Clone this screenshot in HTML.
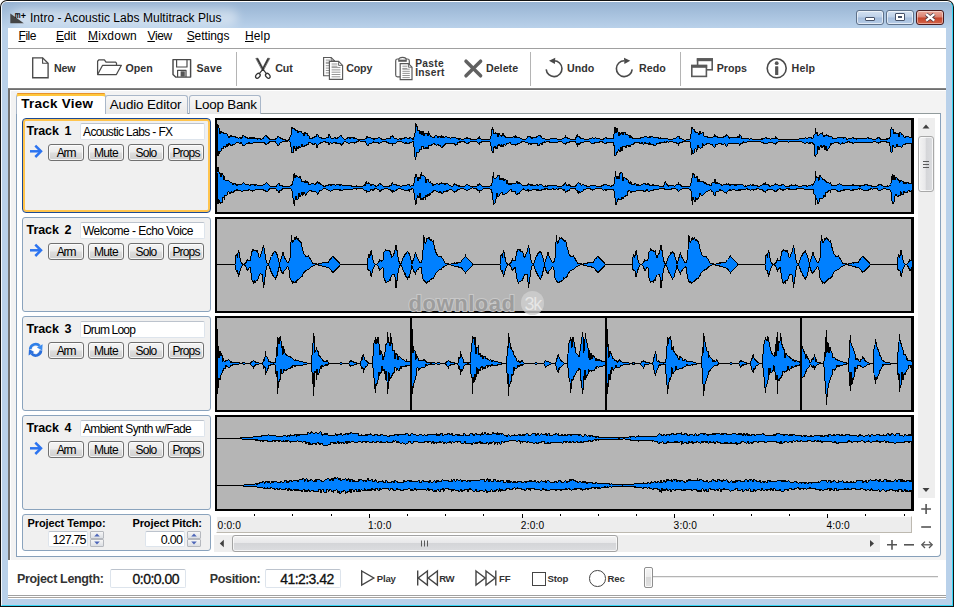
<!DOCTYPE html>
<html><head><meta charset="utf-8"><title>Intro - Acoustic Labs Multitrack Plus</title>
<style>
html,body{margin:0;padding:0;background:#fff;}
body{width:954px;height:607px;overflow:hidden;position:relative;font-family:"Liberation Sans", Arial, sans-serif;}
#win{position:absolute;left:0;top:0;width:954px;height:607px;overflow:hidden;}
#win div,#win span,#win svg{position:absolute;box-sizing:border-box;}
.t{white-space:pre;line-height:1;}
.btn{border:1px solid #707070;border-radius:3px;background:linear-gradient(#f4f4f4 0%,#ececec 48%,#dedede 52%,#d0d0d0 100%);box-shadow:inset 0 0 0 1px rgba(255,255,255,.75);}
.inp{background:#fff;border:1px solid #dde4ec;border-top-color:#bcc3cd;border-radius:2px;}
.panel{border:1px solid #8aa3bd;border-radius:3px;background:#f0f0f0;}
.wf{overflow:visible;}
</style></head><body>
<div id="win">
<div style="left:0;top:0;width:954px;height:607px;background:#111;border-radius:7px 7px 0 0;"></div>
<div style="left:1px;top:1px;width:952px;height:605px;background:#b9d1ea;border-radius:6px 6px 0 0;border-left:1px solid #f4f8fc;border-top:1px solid #fff;border-right:1px solid #34d6f6;border-bottom:1px solid #34d6f6;"></div>
<div style="left:2px;top:2px;width:950px;height:26px;background:linear-gradient(#97b3d2,#b9d1ea);border-radius:5px 5px 0 0;"></div>
<div style="left:12px;top:9px;width:226px;height:17px;border-radius:9px;background:rgba(255,255,255,.42);filter:blur(5px);"></div>
<svg style="left:10px;top:11.5px" width="18" height="14" viewBox="0 0 18 14"><polygon points="0.3,1.4 0.3,11.2 13.8,11.2" fill="#454545"/><text x="4.7" y="6.4" font-family="Liberation Sans, Arial, sans-serif" font-size="9.6" font-weight="bold" fill="#000" textLength="5.8" lengthAdjust="spacingAndGlyphs">m</text><text x="10.7" y="7.4" font-family="Liberation Sans, Arial, sans-serif" font-size="9" font-weight="bold" fill="#000">+</text></svg>
<span class="t " style="left:30.0px;top:11.89px;font-size:12px;color:#000;letter-spacing:0.038px;">Intro - Acoustic Labs Multitrack Plus</span>
<div style="left:856px;top:10px;width:28px;height:15px;border:1px solid #5d7089;border-radius:3px;background:linear-gradient(#d3e1f1 0%,#bdd0e8 48%,#a4bddc 52%,#b5cbe6 100%);box-shadow:inset 0 0 0 1px rgba(255,255,255,.6);"></div>
<div style="left:865px;top:17px;width:10px;height:4px;background:#fff;border:1px solid #47536a;border-radius:1px;"></div>
<div style="left:886px;top:10px;width:28px;height:15px;border:1px solid #5d7089;border-radius:3px;background:linear-gradient(#d3e1f1 0%,#bdd0e8 48%,#a4bddc 52%,#b5cbe6 100%);box-shadow:inset 0 0 0 1px rgba(255,255,255,.6);"></div>
<div style="left:895px;top:13px;width:10px;height:8px;background:#fff;border:1px solid #47536a;border-radius:1px;"></div>
<div style="left:898px;top:16px;width:4px;height:2px;background:#9db3cf;border:0.5px solid #47536a;"></div>
<div style="left:916px;top:10px;width:28px;height:15px;border:1px solid #4a1a1c;border-radius:3px;background:linear-gradient(#e9a99b 0%,#d9806f 48%,#c5432a 52%,#d4654a 100%);box-shadow:inset 0 0 0 1px rgba(255,255,255,.45);"></div>
<svg style="left:922.5px;top:12px" width="15" height="11" viewBox="0 0 15 11"><path d="M3.2 2.2L11.3 8.6M11.3 2.2L3.2 8.6" stroke="#4a3a44" stroke-width="3.8" stroke-linecap="butt"/><path d="M3.2 2.2L11.3 8.6M11.3 2.2L3.2 8.6" stroke="#fff" stroke-width="2.3" stroke-linecap="butt"/></svg>
<div style="left:8px;top:28px;width:938px;height:571px;background:#fff;"></div>
<div style="left:8px;top:48px;width:938px;height:1px;background:#a0a0a0;"></div>
<span class="t " style="left:18.5px;top:30.04px;font-size:12px;color:#000;letter-spacing:-0.465px;"><u>F</u>ile</span>
<span class="t " style="left:56.0px;top:30.04px;font-size:12px;color:#000;letter-spacing:-0.176px;"><u>E</u>dit</span>
<span class="t " style="left:88.0px;top:30.04px;font-size:12px;color:#000;letter-spacing:0.234px;"><u>M</u>ixdown</span>
<span class="t " style="left:147.4px;top:30.04px;font-size:12px;color:#000;letter-spacing:-0.303px;"><u>V</u>iew</span>
<span class="t " style="left:186.7px;top:30.04px;font-size:12px;color:#000;letter-spacing:-0.084px;"><u>S</u>ettings</span>
<span class="t " style="left:245.0px;top:30.04px;font-size:12px;color:#000;letter-spacing:0.128px;"><u>H</u>elp</span>
<div style="left:8px;top:88px;width:938px;height:2px;background:linear-gradient(#8a8a8a,#666);"></div>
<div style="left:8px;top:90px;width:938px;height:470px;background:#f3f3f3;border-left:2px solid #727272;"></div>
<div style="left:10px;top:90px;width:936px;height:1px;background:#fff;"></div>
<div style="left:10px;top:90px;width:1px;height:470px;background:#fff;"></div>
<div style="left:236px;top:52px;width:1px;height:34px;background:#b4b4b4;"></div>
<div style="left:530px;top:52px;width:1px;height:34px;background:#b4b4b4;"></div>
<div style="left:680px;top:52px;width:1px;height:34px;background:#b4b4b4;"></div>
<span class="t " style="left:54.1px;top:62.97px;font-size:10.67px;font-weight:bold;color:#333;letter-spacing:-0.174px;">New</span>
<span class="t " style="left:125.5px;top:62.97px;font-size:10.67px;font-weight:bold;color:#333;letter-spacing:0.016px;">Open</span>
<span class="t " style="left:196.6px;top:62.97px;font-size:10.67px;font-weight:bold;color:#333;letter-spacing:0.127px;">Save</span>
<span class="t " style="left:275.3px;top:62.97px;font-size:10.67px;font-weight:bold;color:#333;letter-spacing:-0.155px;">Cut</span>
<span class="t " style="left:346.2px;top:62.97px;font-size:10.67px;font-weight:bold;color:#333;letter-spacing:-0.135px;">Copy</span>
<span class="t " style="left:415.2px;top:59.07px;font-size:10.2px;font-weight:bold;color:#333;letter-spacing:0.323px;">Paste</span>
<span class="t " style="left:415.2px;top:68.17px;font-size:10.2px;font-weight:bold;color:#333;letter-spacing:0.308px;">Insert</span>
<span class="t " style="left:485.9px;top:62.97px;font-size:10.67px;font-weight:bold;color:#333;letter-spacing:0.053px;">Delete</span>
<span class="t " style="left:567.1px;top:62.97px;font-size:10.67px;font-weight:bold;color:#333;letter-spacing:-0.009px;">Undo</span>
<span class="t " style="left:639.1px;top:62.97px;font-size:10.67px;font-weight:bold;color:#333;letter-spacing:0.015px;">Redo</span>
<span class="t " style="left:716.7px;top:62.97px;font-size:10.67px;font-weight:bold;color:#333;letter-spacing:0.039px;">Props</span>
<span class="t " style="left:791.6px;top:62.97px;font-size:10.67px;font-weight:bold;color:#333;letter-spacing:0.127px;">Help</span>
<svg style="left:30px;top:55px" width="22" height="26" viewBox="0 0 22 26" fill="none" stroke="#4a4a4a" stroke-width="1.35"><path d="M2.7 2.8H12.6L18.1 8.3V22.7H2.7Z" fill="#fff"/><path d="M12.6 2.8V8.3H18.1" stroke-width="1.1"/></svg>
<svg style="left:95px;top:57px" width="29" height="21" viewBox="0 0 29 21" fill="none" stroke="#4a4a4a" stroke-width="1.25" stroke-linejoin="round"><path d="M2.6 17.5V4.2L4 2.8H9.4L11 5.2H20.6L21.5 6.2V8.3"/><path d="M2.6 17.5L7.6 8.3H26.4L21.4 17.5Z" fill="#fff"/></svg>
<svg style="left:171px;top:57px" width="23" height="23" viewBox="0 0 23 23" fill="none" stroke="#4a4a4a" stroke-width="1.45" stroke-linejoin="round"><path d="M2 2.6H19.6V20.1H4.6L2 17.6Z" fill="#fff"/><path d="M5.6 2.6V10H16V2.6" stroke-width="1.2"/><path d="M6.6 20V13.3H15V20" stroke-width="1.2"/><rect x="9.6" y="14.3" width="4.2" height="5.4" fill="#555" stroke="none"/></svg>
<svg style="left:253px;top:57px" width="20" height="23" viewBox="0 0 20 23" fill="none" stroke="#333" stroke-linecap="round"><path d="M3.2 1.4L4.9 1.2L10.6 12.2L9.3 12.8Z" fill="#333" stroke-width="0.6"/><path d="M16.4 1.4L14.7 1.2L9 12.2L10.3 12.8Z" fill="#333" stroke-width="0.6"/><path d="M10 12.4L13.4 16.6M9.8 12.4L6.3 16.6" stroke-width="1.2"/><ellipse cx="4.9" cy="18.8" rx="1.9" ry="2.7" transform="rotate(38 4.9 18.8)" stroke-width="1.3"/><ellipse cx="14.8" cy="18.8" rx="1.9" ry="2.7" transform="rotate(-38 14.8 18.8)" stroke-width="1.3"/></svg>
<svg style="left:322px;top:56px" width="23" height="25" viewBox="0 0 23 25" fill="none" stroke="#5a5a5a" stroke-width="1.15"><path d="M1.6 1.5H9.2L12.6 4.9V19.7H1.6Z" fill="#fff"/><path d="M9.2 1.5V4.9H12.6" stroke-width="0.9"/><path d="M3.8000000000000003 7.3H10.399999999999999" stroke="#8a8a8a" stroke-width="0.9"/><path d="M3.8000000000000003 9.7H10.399999999999999" stroke="#8a8a8a" stroke-width="0.9"/><path d="M3.8000000000000003 12.1H10.399999999999999" stroke="#8a8a8a" stroke-width="0.9"/><path d="M3.8000000000000003 14.5H10.399999999999999" stroke="#8a8a8a" stroke-width="0.9"/><path d="M3.8000000000000003 16.9H10.399999999999999" stroke="#8a8a8a" stroke-width="0.9"/><path d="M3.8000000000000003 4.1H7.999999999999999M3.8000000000000003 6.3H7.999999999999999" stroke="#8a8a8a" stroke-width="0.9"/><path d="M7.4 5.4H16.6L20.6 9.4V23.4H7.4Z" fill="#fff"/><path d="M16.6 5.4V9.4H20.6" stroke-width="0.9"/><path d="M9.600000000000001 11.6H18.400000000000002" stroke="#8a8a8a" stroke-width="0.9"/><path d="M9.600000000000001 13.9H18.400000000000002" stroke="#8a8a8a" stroke-width="0.9"/><path d="M9.600000000000001 16.2H18.400000000000002" stroke="#8a8a8a" stroke-width="0.9"/><path d="M9.600000000000001 18.5H18.400000000000002" stroke="#8a8a8a" stroke-width="0.9"/><path d="M9.600000000000001 20.8H18.400000000000002" stroke="#8a8a8a" stroke-width="0.9"/><path d="M9.600000000000001 8.0H15.400000000000002M9.600000000000001 10.2H15.400000000000002" stroke="#8a8a8a" stroke-width="0.9"/></svg>
<svg style="left:394px;top:56px" width="21" height="25" viewBox="0 0 21 25" fill="none" stroke="#5a5a5a" stroke-width="1.2"><rect x="1.7" y="3" width="13.6" height="17.8" rx="1.8" fill="#fff"/><path d="M4.8 5.2V3.6Q4.8 1.4 8.5 1.4Q12.2 1.4 12.2 3.6V5.2Z" fill="#fff"/><path d="M5 4.4H12" stroke-width="1.5"/><path d="M6.2 7.6H14.4L18.0 11.2V23.6H6.2Z" fill="#fff"/><path d="M14.4 7.6V11.2H18.0" stroke-width="0.9"/><path d="M8.4 13.2H15.8" stroke="#8a8a8a" stroke-width="0.9"/><path d="M8.4 15.3H15.8" stroke="#8a8a8a" stroke-width="0.9"/><path d="M8.4 17.4H15.8" stroke="#8a8a8a" stroke-width="0.9"/><path d="M8.4 19.5H15.8" stroke="#8a8a8a" stroke-width="0.9"/><path d="M8.4 21.6H15.8" stroke="#8a8a8a" stroke-width="0.9"/><path d="M8.4 10.2H13.200000000000001M8.4 12.399999999999999H13.200000000000001" stroke="#8a8a8a" stroke-width="0.9"/></svg>
<svg style="left:462px;top:57px" width="23" height="23" viewBox="0 0 23 23" fill="none" stroke="#616161" stroke-width="3.5" stroke-linecap="round"><path d="M4 4.2L18.6 18.8M18.6 4.2L4 18.8"/></svg>
<svg style="left:543px;top:55px" width="23" height="25" viewBox="0 0 23 25" fill="none" stroke="#4a4a4a" stroke-width="1.6"><path d="M11.05 5.8A7.9 7.9 0 1 1 3.18 14.39"/><path d="M6 5.7L12.3 2.7L11.9 8.9Z" fill="#4a4a4a" stroke="none"/></svg>
<svg style="left:613px;top:55px" width="23" height="25" viewBox="0 0 23 25" fill="none" stroke="#4a4a4a" stroke-width="1.6"><path d="M11.3 5.8A7.9 7.9 0 1 0 19.17 14.39"/><path d="M17.3 5.7L11 2.7L11.4 8.9Z" fill="#4a4a4a" stroke="none"/></svg>
<svg style="left:690px;top:57px" width="25" height="22" viewBox="0 0 25 22" fill="none" stroke="#5a5a5a" stroke-width="1.6"><rect x="7.6" y="2" width="14.6" height="10.8" fill="#fff"/><rect x="6.8" y="1.2" width="16.2" height="3" fill="#5a5a5a" stroke="none"/><rect x="1.8" y="8.6" width="14.6" height="10.8" fill="#fff"/><rect x="1" y="7.8" width="16.2" height="3" fill="#5a5a5a" stroke="none"/></svg>
<svg style="left:765px;top:57px" width="24" height="24" viewBox="0 0 24 24" fill="none" stroke="#4a4a4a" stroke-width="1.6"><circle cx="11.7" cy="11.3" r="9.5" fill="#fff"/><circle cx="11.7" cy="6.2" r="1.9" fill="#555" stroke="none"/><rect x="10.1" y="9.2" width="3.2" height="8.8" rx="0.6" fill="#555" stroke="none"/></svg>
<div style="left:16px;top:113px;width:925px;height:444px;background:#fff;border:1px solid #87a0ba;border-top-color:#919b9c;border-radius:0 0 4px 0;"></div>
<div style="left:105px;top:95px;width:83px;height:19px;border:1px solid #a9b7c9;border-bottom:none;border-radius:3px 3px 0 0;background:linear-gradient(#f7f7f7,#e9e9e9);"></div>
<div style="left:189px;top:95px;width:72px;height:19px;border:1px solid #a9b7c9;border-bottom:none;border-radius:3px 3px 0 0;background:linear-gradient(#f7f7f7,#e9e9e9);"></div>
<div style="left:16px;top:93px;width:90px;height:21px;border:1px solid #a9b7c9;border-bottom:none;border-radius:4px 4px 0 0;background:#fff;border-top:3px solid #ffc73c;"></div>
<div style="left:17px;top:93px;width:88px;height:1px;background:#e8932e;border-radius:2px 2px 0 0;"></div>
<span class="t " style="left:21.3px;top:96.71px;font-size:13.4px;font-weight:bold;color:#000;letter-spacing:0.300px;">Track View</span>
<span class="t " style="left:109.8px;top:97.71px;font-size:13.4px;color:#000;letter-spacing:-0.121px;">Audio Editor</span>
<span class="t " style="left:194.8px;top:97.71px;font-size:13.4px;color:#000;letter-spacing:-0.226px;">Loop Bank</span>
<div style="left:22px;top:118px;width:189px;height:95px;border:1px solid #1c4a94;border-radius:4px;background:#f0f0f0;box-shadow:inset 0 0 0 2px #ffc44d;"></div>
<span class="t " style="left:26.6px;top:124.72px;font-size:12.5px;font-weight:bold;color:#000;letter-spacing:-0.094px;">Track</span>
<span class="t " style="left:64.6px;top:124.72px;font-size:12.5px;font-weight:bold;color:#000;">1</span>
<div class="inp" style="left:80px;top:123px;width:125px;height:17px;"></div>
<span class="t " style="left:83.0px;top:126.04px;font-size:12px;color:#000;letter-spacing:-0.623px;">Acoustic Labs - FX</span>
<div class="btn" style="left:48px;top:144px;width:36px;height:17px;"></div>
<span class="t " style="left:56.7px;top:147.04px;font-size:12px;color:#000;letter-spacing:-1.133px;">Arm</span>
<div class="btn" style="left:88px;top:144px;width:36px;height:17px;"></div>
<span class="t " style="left:93.9px;top:147.04px;font-size:12px;color:#000;letter-spacing:-0.622px;">Mute</span>
<div class="btn" style="left:128px;top:144px;width:36px;height:17px;"></div>
<span class="t " style="left:135.4px;top:147.04px;font-size:12px;color:#000;letter-spacing:-0.708px;">Solo</span>
<div class="btn" style="left:168px;top:144px;width:36px;height:17px;"></div>
<span class="t " style="left:172.4px;top:147.04px;font-size:12px;color:#000;letter-spacing:-0.832px;">Props</span>
<svg style="left:29px;top:144px" width="16" height="15" viewBox="0 0 16 15" fill="none" stroke="#2c74f0" stroke-width="2.5" stroke-linecap="butt" stroke-linejoin="miter"><path d="M1 7.3H11.5"/><path d="M6.3 1.6L12 7.3L6.3 13"/></svg>
<svg class="wf" style="left:215px;top:118px" width="699" height="96" viewBox="0 0 699 96" shape-rendering="crispEdges"><path d="M-0.5 96V-0.5H699" stroke="#fff" stroke-width="1" fill="none"/><rect x="1" y="1" width="697" height="94" fill="#b5b5b5" stroke="#000" stroke-width="2"/><rect x="696" y="2" width="1" height="92" fill="#000"/><path d="M2 22.5H697" stroke="#000" stroke-width="1" fill="none"/><path d="M2.0 9.5L3.0 6.5L4.0 10.3L4.5 10.5L5.0 16.1L6.0 13.0L7.0 14.6L8.0 13.9L8.5 14.5L9.0 16.3L10.0 14.9L11.0 16.0L12.0 15.9L13.0 18.1L14.0 19.6L15.0 18.4L16.0 17.3L17.0 18.5L18.0 18.0L19.0 18.5L20.0 18.5L21.0 19.4L22.0 19.8L23.0 20.0L24.0 20.0L25.0 19.6L26.0 20.6L27.0 19.7L28.0 17.5L29.0 18.1L30.0 18.5L31.0 20.0L32.0 19.5L33.0 20.6L34.0 20.9L35.0 19.3L36.0 20.8L37.0 19.5L38.0 21.0L39.0 19.6L40.0 20.8L41.0 20.0L42.0 21.3L43.0 20.5L44.0 20.5L45.0 20.6L46.0 21.4L47.0 21.0L48.0 20.5L49.0 19.1L50.0 18.1L51.0 17.5L52.0 18.3L53.0 19.4L54.0 20.5L55.0 21.6L56.0 21.3L56.6 21.5L57.0 21.5L58.0 21.9L59.0 21.4L60.0 21.5L61.0 20.3L62.0 20.2L63.0 18.0L64.0 18.8L65.0 19.5L66.0 20.5L67.0 20.8L68.0 21.3L69.0 22.0L69.8 21.9L70.0 22.0L71.0 21.9L72.0 22.2L73.0 21.9L74.0 22.1L74.5 21.9L75.0 19.3L76.0 17.6L77.0 9.5L78.0 11.1L79.0 10.1L80.0 11.5L81.0 12.5L82.0 12.6L83.0 14.7L84.0 12.8L85.0 13.5L86.0 13.0L87.0 15.1L88.0 15.6L89.0 17.7L90.0 13.8L90.6 14.5L91.0 15.5L92.0 15.6L93.0 17.8L94.0 18.1L95.0 20.7L96.0 20.0L97.0 20.5L98.0 19.5L99.0 19.5L100.0 18.2L101.0 18.7L102.0 16.5L103.0 17.1L104.0 18.9L105.0 19.5L106.0 19.9L107.0 20.1L107.5 20.5L108.0 21.0L109.0 20.9L110.0 20.9L111.0 20.0L112.0 18.9L113.0 19.7L114.0 16.5L115.0 18.0L116.0 20.2L117.0 20.0L118.0 20.4L119.0 20.2L120.0 19.4L120.8 19.5L121.0 21.0L122.0 20.1L123.0 19.9L124.0 18.9L125.0 18.1L126.0 17.8L126.4 18.0L127.0 19.0L128.0 20.3L129.0 20.9L130.0 21.5L131.0 20.9L132.0 20.3L133.0 19.5L134.0 19.0L135.0 20.5L136.0 19.4L137.0 19.3L138.0 19.2L139.0 20.5L139.6 19.5L140.0 20.8L141.0 20.7L142.0 20.9L143.0 22.0L143.4 21.9L144.0 22.1L145.0 21.9L146.0 21.9L147.0 21.9L148.0 22.0L149.0 21.9L150.0 20.9L151.0 21.1L152.0 18.6L152.8 18.0L153.0 19.8L154.0 19.7L155.0 19.4L156.0 20.0L157.0 20.2L158.0 20.9L158.5 21.0L159.0 21.4L160.0 20.3L161.0 20.5L162.0 20.2L163.0 20.4L163.8 19.0L164.0 19.9L165.0 20.0L166.0 20.1L167.0 21.3L168.0 21.5L169.0 21.2L170.0 21.4L171.0 21.1L172.0 20.5L173.0 20.2L174.0 20.8L175.0 20.6L176.0 18.5L177.0 19.1L177.5 18.0L178.0 18.4L179.0 20.3L180.0 20.8L181.0 20.5L182.0 21.0L183.0 21.0L184.0 21.1L185.0 20.5L186.0 21.4L187.0 20.4L188.0 19.9L189.0 20.7L189.8 19.5L190.0 19.3L191.0 19.9L192.0 19.8L193.0 20.5L194.0 20.5L194.5 19.5L195.0 19.8L196.0 20.0L197.0 20.7L198.0 21.5L198.3 21.0L199.0 19.2L200.0 15.6L200.6 5.9L201.0 6.2L202.0 8.5L203.0 12.8L204.0 12.1L205.0 16.1L206.0 13.0L207.0 16.6L208.0 13.4L208.7 14.0L209.0 18.0L210.0 15.3L211.0 15.1L212.0 15.5L213.0 18.0L213.4 14.0L214.0 15.2L215.0 17.2L216.0 18.8L217.0 19.0L218.0 19.2L219.0 20.3L220.0 18.1L221.0 17.8L222.0 17.7L223.0 19.6L224.0 18.6L225.0 18.1L226.0 20.2L226.6 18.5L227.0 19.8L228.0 18.5L229.0 19.6L230.0 18.9L231.0 18.7L232.0 19.0L233.0 19.1L234.0 19.5L235.0 20.1L236.0 20.0L237.0 19.9L238.0 20.0L239.0 19.3L240.0 19.8L240.8 19.0L241.0 20.3L242.0 20.6L243.0 20.7L244.0 21.2L245.0 20.8L245.5 21.0L246.0 21.1L247.0 21.9L248.0 21.8L249.0 21.1L250.0 20.4L251.0 20.7L252.0 19.0L253.0 20.5L254.0 20.3L255.0 20.6L256.0 21.6L256.8 21.8L257.0 22.1L258.0 21.9L259.0 21.9L260.0 21.8L260.6 21.8L261.0 21.4L262.0 21.0L263.0 20.4L264.0 19.1L264.3 19.0L265.0 20.6L266.0 21.2L267.0 20.9L268.0 21.8L269.0 21.8L270.0 21.7L271.0 21.7L271.9 21.5L272.0 21.7L273.0 21.6L274.0 21.1L275.0 21.0L276.0 18.0L277.0 11.2L277.5 9.3L278.0 11.4L279.0 15.7L280.0 14.8L281.0 15.2L282.0 16.0L282.3 15.0L283.0 18.6L284.0 15.0L285.0 17.2L286.0 17.7L287.0 18.2L288.0 15.3L289.0 17.7L290.0 18.7L291.0 19.2L292.0 19.0L292.6 19.5L293.0 19.2L294.0 19.9L295.0 19.1L296.0 19.0L297.0 19.4L298.0 18.9L299.0 18.1L300.0 19.7L300.2 16.8L301.0 18.6L302.0 20.2L303.0 19.4L304.0 19.3L305.0 19.8L305.8 20.5L306.0 20.6L307.0 20.9L308.0 21.4L308.7 21.5L309.0 21.9L310.0 21.6L311.0 20.9L312.0 19.9L313.0 18.5L313.4 18.5L314.0 18.4L315.0 18.6L316.0 19.6L317.0 20.7L318.0 19.7L319.0 19.5L320.0 19.3L321.0 19.6L322.0 18.4L323.0 18.1L324.0 17.7L324.7 17.5L325.0 17.4L326.0 18.5L327.0 19.9L328.0 21.0L329.0 20.0L330.0 20.9L330.4 21.0L331.0 21.7L332.0 21.1L333.0 21.2L334.0 21.6L335.0 20.9L336.0 20.5L337.0 20.9L338.0 20.4L339.0 20.8L340.0 20.7L341.0 20.7L341.7 20.5L342.0 20.9L343.0 21.3L344.0 21.8L345.0 21.6L345.7 21.5L346.0 21.2L347.0 21.2L348.0 20.1L349.0 20.1L350.0 19.4L350.4 18.5L351.0 19.9L352.0 19.4L353.0 21.1L354.0 20.5L355.0 21.2L356.0 21.8L357.0 21.9L358.0 21.9L359.0 21.8L359.8 21.8L360.0 21.6L361.0 19.5L362.0 17.2L362.3 16.8L363.0 18.9L364.0 18.2L365.0 19.5L366.0 20.7L367.0 20.8L368.0 20.5L368.3 20.5L369.0 21.3L370.0 21.3L371.0 21.3L372.0 21.5L373.0 21.5L374.0 20.9L375.0 20.3L376.0 19.9L377.0 20.2L377.7 19.5L378.0 20.3L379.0 20.6L380.0 19.9L381.0 20.0L382.0 20.9L383.0 20.5L384.0 20.8L385.0 21.0L385.3 21.0L386.0 21.2L387.0 21.4L388.0 21.2L389.0 20.8L390.0 19.8L391.0 19.5L392.0 20.9L393.0 19.9L394.0 20.2L395.0 20.5L395.7 20.5L396.0 20.4L397.0 21.0L398.0 20.9L398.5 20.0L399.0 16.0L400.0 8.9L401.0 15.0L402.0 10.4L403.0 13.9L404.0 17.9L404.2 14.0L405.0 16.9L406.0 15.5L407.0 14.0L408.0 16.9L409.0 14.4L410.0 14.7L410.8 15.3L411.0 16.9L412.0 15.8L413.0 17.2L414.0 17.3L415.0 19.9L415.5 17.8L416.0 18.5L417.0 19.5L418.0 20.4L419.0 20.3L420.0 20.7L421.0 20.0L422.0 20.8L423.0 21.0L424.0 20.0L425.0 20.5L426.0 19.6L427.0 20.1L428.0 19.2L428.7 19.0L429.0 18.9L430.0 19.0L431.0 18.7L432.0 18.8L433.0 20.1L434.0 18.7L434.3 19.0L435.0 19.6L436.0 18.7L437.0 18.9L438.0 18.9L439.0 19.6L440.0 19.0L441.0 19.0L442.0 19.2L443.0 19.6L444.0 20.7L445.0 19.8L445.7 20.0L446.0 21.1L447.0 20.5L448.0 20.4L449.0 20.1L450.0 21.1L451.0 20.7L451.3 20.5L452.0 20.6L453.0 21.2L454.0 20.9L455.0 21.2L456.0 21.6L457.0 21.5L458.0 21.0L459.0 20.6L460.0 21.0L461.0 20.3L462.0 19.2L463.0 18.6L463.6 18.5L464.0 18.5L465.0 20.6L466.0 20.0L467.0 21.3L468.0 21.7L468.3 21.8L469.0 22.1L470.0 22.1L471.0 22.0L472.0 21.8L473.0 21.9L474.0 21.7L475.0 21.0L476.0 15.8L476.8 9.7L477.0 9.3L478.0 11.0L479.0 11.2L480.0 13.8L481.0 14.3L481.5 14.5L482.0 13.9L483.0 15.1L484.0 17.2L485.0 13.5L486.0 16.2L487.0 15.3L487.2 14.0L488.0 14.3L489.0 18.2L490.0 18.3L491.0 18.5L492.0 18.9L493.0 19.1L494.0 19.5L494.7 19.5L495.0 19.3L496.0 19.8L497.0 20.1L498.0 18.9L499.0 18.9L499.4 16.8L500.0 16.8L501.0 18.8L502.0 18.1L503.0 20.2L504.0 19.2L505.0 20.0L506.0 19.4L507.0 19.2L508.0 20.3L509.0 18.6L510.0 19.1L511.0 17.4L511.7 16.8L512.0 17.3L513.0 17.9L514.0 20.3L515.0 19.7L516.0 19.5L517.0 19.2L518.0 19.4L519.0 19.0L520.0 19.5L521.0 19.0L522.0 19.9L523.0 17.7L524.0 19.5L524.7 17.0L525.0 17.4L526.0 17.7L527.0 20.6L528.0 20.2L529.0 20.1L529.4 20.5L530.0 20.9L531.0 20.5L532.0 21.0L533.0 20.9L534.0 21.0L535.0 21.0L536.0 20.9L537.0 20.9L538.0 21.2L539.0 21.2L540.0 21.6L540.8 21.0L541.0 21.5L542.0 21.2L543.0 21.5L544.0 21.7L544.5 21.8L545.0 21.9L546.0 21.3L547.0 20.4L548.0 21.3L549.0 20.2L550.0 19.9L550.2 19.0L551.0 19.4L552.0 20.6L553.0 19.9L554.0 20.2L555.0 21.0L555.8 21.0L556.0 21.1L557.0 20.8L558.0 20.6L559.0 20.3L560.0 20.8L560.6 19.0L561.0 19.6L562.0 20.4L563.0 21.2L564.0 21.4L564.3 21.5L565.0 21.8L566.0 21.5L567.0 21.5L568.0 21.4L569.0 21.3L570.0 21.2L571.0 21.5L572.0 21.4L572.8 21.0L573.0 21.4L574.0 21.3L575.0 21.1L576.0 21.4L577.0 21.2L578.0 21.5L579.0 21.4L580.0 21.5L580.4 21.5L581.0 21.9L582.0 21.5L583.0 21.2L584.0 21.0L585.0 20.8L586.0 20.9L587.0 20.4L588.0 20.2L589.0 21.2L589.8 20.0L590.0 19.9L591.0 19.9L592.0 20.9L593.0 19.9L594.0 20.1L595.0 19.3L595.5 19.5L596.0 19.5L597.0 20.8L598.0 19.8L598.5 19.5L599.0 16.8L600.0 15.9L600.2 10.2L601.0 15.5L602.0 14.2L603.0 18.0L604.0 16.8L605.0 16.1L606.0 15.6L607.0 14.8L607.7 15.0L608.0 17.1L609.0 18.4L610.0 17.7L611.0 18.0L611.5 16.8L612.0 17.4L613.0 17.2L614.0 18.9L615.0 17.9L616.0 19.3L616.2 18.5L617.0 19.1L618.0 20.7L619.0 19.9L620.0 20.5L621.0 21.2L622.0 19.8L623.0 19.3L624.0 19.5L624.7 19.0L625.0 19.5L626.0 19.7L627.0 19.2L628.0 19.1L629.0 20.3L629.4 19.5L630.0 19.7L631.0 20.0L632.0 21.5L633.0 21.1L633.2 21.0L634.0 20.8L635.0 20.7L636.0 20.5L637.0 19.9L638.0 19.5L639.0 20.6L640.0 20.2L641.0 20.7L642.0 21.3L642.6 20.5L643.0 21.1L644.0 20.8L645.0 20.5L646.0 21.0L647.0 20.2L648.0 20.1L649.0 20.3L650.0 20.4L650.2 20.0L651.0 20.4L652.0 19.9L653.0 19.8L654.0 20.2L655.0 20.0L655.8 20.0L656.0 19.9L657.0 20.9L658.0 21.5L659.0 21.5L659.6 21.8L660.0 21.5L661.0 21.2L662.0 20.3L663.0 19.6L663.4 19.5L664.0 19.7L665.0 20.2L666.0 21.4L667.0 21.2L668.0 21.8L669.0 21.5L670.0 21.8L671.0 21.0L671.9 20.5L672.0 21.5L673.0 20.7L674.0 20.3L674.5 20.5L675.0 19.3L676.0 11.2L676.2 9.3L677.0 11.2L678.0 10.9L679.0 15.9L680.0 14.3L680.4 15.0L681.0 16.1L682.0 15.7L683.0 15.3L684.0 18.6L685.0 14.4L686.0 15.0L687.0 17.2L688.0 16.6L689.0 19.2L690.0 19.7L690.8 18.5L691.0 18.7L692.0 18.9L693.0 18.9L694.0 19.0L695.0 19.2L695.5 19.5L696.0 19.4L697.0 19.5L697.0 25.3L696.0 25.2L695.5 25.5L695.0 25.7L694.0 25.3L693.0 25.9L692.0 25.1L691.0 25.0L690.8 26.5L690.0 26.5L689.0 26.6L688.0 26.7L687.0 29.0L686.0 29.1L685.0 28.7L684.0 27.9L683.0 29.0L682.0 26.2L681.0 29.2L680.4 29.1L680.0 29.8L679.0 28.7L678.0 27.5L677.0 34.5L676.2 34.8L676.0 33.5L675.0 27.8L674.5 24.5L674.0 24.5L673.0 23.9L672.0 24.6L671.9 24.5L671.0 23.7L670.0 24.0L669.0 23.6L668.0 23.2L667.0 23.6L666.0 23.7L665.0 24.2L664.0 25.2L663.4 25.5L663.0 24.3L662.0 24.3L661.0 23.9L660.0 23.4L659.6 23.2L659.0 23.5L658.0 24.0L657.0 24.2L656.0 23.9L655.8 25.0L655.0 24.2L654.0 24.8L653.0 24.7L652.0 25.1L651.0 24.0L650.2 25.0L650.0 24.3L649.0 25.1L648.0 24.5L647.0 24.5L646.0 24.0L645.0 24.0L644.0 24.6L643.0 24.6L642.6 24.5L642.0 24.7L641.0 24.6L640.0 24.1L639.0 24.9L638.0 25.5L637.0 24.6L636.0 24.4L635.0 24.7L634.0 23.5L633.2 24.0L633.0 23.6L632.0 24.6L631.0 23.9L630.0 24.9L629.4 25.5L629.0 25.6L628.0 25.7L627.0 24.7L626.0 25.9L625.0 26.2L624.7 26.0L624.0 25.4L623.0 24.0L622.0 24.6L621.0 24.3L620.0 24.5L619.0 25.0L618.0 25.0L617.0 25.3L616.2 26.5L616.0 25.4L615.0 28.3L614.0 29.8L613.0 30.8L612.0 32.9L611.5 32.9L611.0 28.0L610.0 31.9L609.0 27.4L608.0 29.3L607.7 29.1L607.0 30.1L606.0 27.3L605.0 29.4L604.0 31.9L603.0 28.1L602.0 36.0L601.0 36.7L600.2 38.5L600.0 37.5L599.0 26.4L598.5 25.5L598.0 25.6L597.0 24.1L596.0 25.2L595.5 25.5L595.0 24.2L594.0 25.6L593.0 25.2L592.0 24.3L591.0 25.3L590.0 25.0L589.8 25.0L589.0 25.1L588.0 24.4L587.0 23.9L586.0 23.6L585.0 23.7L584.0 24.0L583.0 23.4L582.0 23.3L581.0 23.1L580.4 23.5L580.0 23.6L579.0 23.5L578.0 23.7L577.0 23.4L576.0 23.7L575.0 23.7L574.0 24.0L573.0 24.0L572.8 24.0L572.0 23.7L571.0 23.3L570.0 23.9L569.0 23.2L568.0 23.6L567.0 23.2L566.0 23.5L565.0 23.2L564.3 23.5L564.0 23.1L563.0 23.8L562.0 24.4L561.0 25.5L560.6 26.0L560.0 25.2L559.0 25.5L558.0 25.1L557.0 24.5L556.0 24.1L555.8 24.0L555.0 24.4L554.0 24.5L553.0 24.8L552.0 25.6L551.0 25.2L550.2 26.0L550.0 25.0L549.0 25.4L548.0 23.8L547.0 24.5L546.0 24.0L545.0 23.5L544.5 23.2L544.0 23.2L543.0 23.1L542.0 23.3L541.0 23.7L540.8 24.0L540.0 23.3L539.0 24.0L538.0 23.8L537.0 23.4L536.0 23.3L535.0 24.0L534.0 23.9L533.0 23.4L532.0 23.8L531.0 24.4L530.0 24.5L529.4 24.5L529.0 23.7L528.0 24.3L527.0 25.4L526.0 25.3L525.0 26.4L524.7 27.0L524.0 26.2L523.0 25.3L522.0 25.6L521.0 26.0L520.0 24.8L519.0 25.7L518.0 25.0L517.0 25.5L516.0 25.5L515.0 25.5L514.0 25.4L513.0 26.2L512.0 28.4L511.7 28.2L511.0 27.8L510.0 25.7L509.0 26.0L508.0 26.2L507.0 26.2L506.0 25.7L505.0 25.0L504.0 25.8L503.0 25.8L502.0 26.9L501.0 26.5L500.0 29.1L499.4 29.1L499.0 29.2L498.0 27.9L497.0 26.5L496.0 26.4L495.0 25.8L494.7 25.5L494.0 25.0L493.0 25.9L492.0 25.7L491.0 26.5L490.0 27.2L489.0 28.0L488.0 25.6L487.2 29.1L487.0 28.7L486.0 30.1L485.0 30.2L484.0 29.4L483.0 27.5L482.0 32.1L481.5 32.9L481.0 30.7L480.0 31.1L479.0 34.8L478.0 35.6L477.0 31.6L476.8 36.7L476.0 30.0L475.0 24.0L474.0 23.8L473.0 23.5L472.0 23.2L471.0 23.2L470.0 23.2L469.0 23.1L468.3 23.2L468.0 23.4L467.0 24.4L466.0 25.1L465.0 24.7L464.0 25.2L463.6 27.0L463.0 25.4L462.0 25.7L461.0 24.1L460.0 24.8L459.0 24.6L458.0 24.1L457.0 23.5L456.0 23.5L455.0 23.4L454.0 23.9L453.0 24.2L452.0 23.5L451.3 24.5L451.0 24.3L450.0 24.5L449.0 23.7L448.0 24.9L447.0 23.8L446.0 24.9L445.7 25.0L445.0 24.2L444.0 25.4L443.0 25.7L442.0 25.4L441.0 27.1L440.0 27.5L439.0 27.4L438.0 25.8L437.0 26.8L436.0 26.7L435.0 24.6L434.3 26.0L434.0 25.7L433.0 26.2L432.0 25.3L431.0 26.0L430.0 24.3L429.0 25.8L428.7 26.0L428.0 26.1L427.0 24.2L426.0 25.8L425.0 25.3L424.0 24.7L423.0 24.7L422.0 24.1L421.0 25.0L420.0 24.6L419.0 25.3L418.0 26.5L417.0 26.1L416.0 27.2L415.5 28.2L415.0 27.0L414.0 28.5L413.0 27.1L412.0 27.3L411.0 29.8L410.8 29.7L410.0 28.0L409.0 29.2L408.0 27.8L407.0 32.7L406.0 29.5L405.0 34.1L404.2 33.8L404.0 31.6L403.0 33.1L402.0 34.5L401.0 37.2L400.0 38.2L399.0 27.4L398.5 25.0L398.0 24.5L397.0 24.4L396.0 24.2L395.7 24.5L395.0 24.5L394.0 24.8L393.0 25.0L392.0 24.2L391.0 25.5L390.0 25.1L389.0 25.0L388.0 24.5L387.0 23.6L386.0 23.9L385.3 24.0L385.0 24.2L384.0 23.8L383.0 24.6L382.0 24.1L381.0 24.8L380.0 24.5L379.0 25.4L378.0 25.4L377.7 25.5L377.0 25.0L376.0 25.1L375.0 23.8L374.0 24.1L373.0 23.3L372.0 23.5L371.0 23.6L370.0 23.3L369.0 24.2L368.3 24.5L368.0 24.6L367.0 25.0L366.0 24.7L365.0 25.5L364.0 26.6L363.0 25.5L362.3 27.8L362.0 27.1L361.0 25.1L360.0 23.4L359.8 23.2L359.0 23.0L358.0 23.2L357.0 23.2L356.0 23.2L355.0 23.7L354.0 24.5L353.0 24.0L352.0 24.1L351.0 26.3L350.4 26.5L350.0 25.5L349.0 25.1L348.0 25.0L347.0 24.0L346.0 23.2L345.7 23.5L345.0 23.7L344.0 23.3L343.0 24.0L342.0 24.3L341.7 24.5L341.0 24.5L340.0 24.1L339.0 24.6L338.0 24.6L337.0 24.3L336.0 24.5L335.0 24.5L334.0 23.7L333.0 24.1L332.0 23.4L331.0 24.1L330.4 24.0L330.0 24.1L329.0 23.9L328.0 24.2L327.0 26.5L326.0 25.1L325.0 26.1L324.7 27.8L324.0 27.9L323.0 27.5L322.0 25.6L321.0 25.7L320.0 25.9L319.0 25.5L318.0 25.1L317.0 25.6L316.0 26.3L315.0 25.8L314.0 26.0L313.4 26.5L313.0 24.6L312.0 24.7L311.0 25.1L310.0 24.0L309.0 23.5L308.7 23.5L308.0 23.6L307.0 23.4L306.0 24.6L305.8 24.5L305.0 25.1L304.0 25.4L303.0 25.1L302.0 27.1L301.0 25.9L300.2 27.8L300.0 26.6L299.0 27.1L298.0 26.2L297.0 26.3L296.0 26.0L295.0 24.3L294.0 25.1L293.0 25.5L292.6 25.5L292.0 25.6L291.0 27.1L290.0 27.2L289.0 26.6L288.0 29.1L287.0 26.6L286.0 29.0L285.0 27.4L284.0 26.7L283.0 27.5L282.3 30.0L282.0 29.4L281.0 30.7L280.0 28.4L279.0 29.5L278.0 34.7L277.5 34.2L277.0 32.6L276.0 27.8L275.0 24.0L274.0 23.7L273.0 23.3L272.0 23.6L271.9 23.5L271.0 23.4L270.0 23.3L269.0 23.0L268.0 23.2L267.0 23.3L266.0 24.9L265.0 24.0L264.3 26.0L264.0 25.9L263.0 25.1L262.0 24.0L261.0 23.6L260.6 23.2L260.0 23.3L259.0 23.0L258.0 23.0L257.0 23.2L256.8 23.2L256.0 23.2L255.0 24.3L254.0 24.3L253.0 25.6L252.0 26.0L251.0 25.1L250.0 24.7L249.0 23.5L248.0 23.2L247.0 23.6L246.0 23.2L245.5 24.0L245.0 23.5L244.0 25.0L243.0 24.6L242.0 26.5L241.0 26.2L240.8 27.2L240.0 26.3L239.0 25.6L238.0 26.1L237.0 25.3L236.0 25.0L235.0 25.0L234.0 25.6L233.0 25.4L232.0 26.0L231.0 25.5L230.0 26.3L229.0 27.6L228.0 28.4L227.0 29.4L226.6 29.1L226.0 29.3L225.0 27.4L224.0 28.1L223.0 25.7L222.0 27.2L221.0 27.2L220.0 26.5L219.0 24.8L218.0 26.1L217.0 26.0L216.0 27.4L215.0 27.6L214.0 27.1L213.4 30.0L213.0 29.2L212.0 30.9L211.0 29.6L210.0 31.0L209.0 29.9L208.7 31.0L208.0 28.1L207.0 28.1L206.0 32.2L205.0 31.6L204.0 33.8L203.0 34.6L202.0 34.4L201.0 38.9L200.6 42.3L200.0 38.6L199.0 28.8L198.3 24.0L198.0 23.7L197.0 24.0L196.0 25.0L195.0 24.4L194.5 25.5L194.0 25.6L193.0 25.7L192.0 25.7L191.0 24.6L190.0 25.3L189.8 25.5L189.0 25.2L188.0 24.0L187.0 24.1L186.0 23.6L185.0 23.6L184.0 23.8L183.0 24.0L182.0 23.8L181.0 25.2L180.0 25.4L179.0 25.0L178.0 26.1L177.5 27.0L177.0 25.0L176.0 26.0L175.0 25.0L174.0 25.6L173.0 24.2L172.0 24.5L171.0 23.7L170.0 23.8L169.0 23.7L168.0 23.5L167.0 24.0L166.0 24.3L165.0 25.0L164.0 25.5L163.8 25.5L163.0 24.0L162.0 24.5L161.0 24.5L160.0 24.6L159.0 24.2L158.5 24.0L158.0 24.4L157.0 25.0L156.0 25.5L155.0 25.0L154.0 26.1L153.0 27.7L152.8 27.5L152.0 26.9L151.0 25.2L150.0 23.6L149.0 23.1L148.0 23.0L147.0 23.1L146.0 23.1L145.0 23.1L144.0 22.8L143.4 23.1L143.0 23.0L142.0 23.7L141.0 24.3L140.0 24.7L139.6 25.0L139.0 24.0L138.0 25.0L137.0 24.6L136.0 24.2L135.0 24.8L134.0 25.5L133.0 25.1L132.0 24.0L131.0 24.1L130.0 23.5L129.0 23.7L128.0 25.4L127.0 26.9L126.4 27.5L126.0 26.5L125.0 25.7L124.0 25.2L123.0 25.7L122.0 25.8L121.0 24.4L120.8 25.5L120.0 24.8L119.0 24.8L118.0 25.0L117.0 25.0L116.0 25.0L115.0 24.9L114.0 26.5L113.0 24.5L112.0 24.5L111.0 24.5L110.0 23.7L109.0 24.0L108.0 23.7L107.5 24.5L107.0 24.4L106.0 23.8L105.0 25.5L104.0 25.8L103.0 27.3L102.0 30.0L101.0 25.9L100.0 25.5L99.0 26.5L98.0 26.3L97.0 25.0L96.0 25.0L95.0 24.8L94.0 24.5L93.0 26.6L92.0 26.7L91.0 27.7L90.6 27.5L90.0 27.8L89.0 28.3L88.0 28.5L87.0 26.5L86.0 29.3L85.0 29.5L84.0 28.2L83.0 31.0L82.0 28.6L81.0 32.5L80.0 30.4L79.0 28.4L78.0 34.7L77.0 34.5L76.0 28.6L75.0 24.1L74.5 23.1L74.0 22.8L73.0 23.1L72.0 22.9L71.0 23.1L70.0 22.9L69.8 23.1L69.0 23.3L68.0 23.7L67.0 23.8L66.0 24.5L65.0 25.0L64.0 26.8L63.0 27.5L62.0 26.1L61.0 24.9L60.0 23.5L59.0 23.0L58.0 23.3L57.0 23.4L56.6 23.5L56.0 23.2L55.0 23.6L54.0 24.5L53.0 25.4L52.0 25.9L51.0 27.0L50.0 25.5L49.0 24.7L48.0 24.6L47.0 24.0L46.0 24.2L45.0 24.4L44.0 24.4L43.0 24.5L42.0 24.0L41.0 24.8L40.0 25.0L39.0 24.6L38.0 25.2L37.0 25.5L36.0 25.2L35.0 25.6L34.0 24.4L33.0 25.4L32.0 25.5L31.0 25.9L30.0 27.1L29.0 27.5L28.0 28.0L27.0 26.0L26.0 24.5L25.0 25.8L24.0 25.0L23.0 24.7L22.0 25.0L21.0 24.7L20.0 25.9L19.0 26.5L18.0 26.8L17.0 27.3L16.0 27.6L15.0 26.6L14.0 25.3L13.0 28.4L12.0 26.3L11.0 28.5L10.0 29.3L9.0 27.7L8.5 30.5L8.0 30.0L7.0 30.4L6.0 33.0L5.0 33.0L4.5 34.5L4.0 33.6L3.0 37.5L2.0 34.5Z" fill="#0080ff" stroke="#000" stroke-width="1" stroke-linejoin="miter"/><path d="M2 69.5H697" stroke="#000" stroke-width="1" fill="none"/><path d="M2.0 54.5L3.0 49.5L4.0 54.1L5.0 55.5L6.0 58.9L7.0 55.2L7.5 56.5L8.0 57.3L9.0 61.6L9.5 60.0L10.0 62.0L11.0 62.0L12.0 62.1L13.0 62.7L14.0 63.1L15.0 64.0L16.0 64.0L17.0 64.9L18.0 66.7L19.0 65.5L20.0 65.4L21.0 66.3L22.0 67.8L23.0 66.1L24.0 66.5L25.0 65.9L26.0 66.4L27.0 66.3L28.0 64.8L29.0 65.0L30.0 65.9L31.0 66.7L32.0 66.5L33.0 66.6L34.0 67.2L35.0 67.8L36.0 66.3L37.0 66.9L37.7 66.0L38.0 65.8L39.0 66.4L40.0 67.5L41.0 66.4L42.0 67.0L43.0 67.0L44.0 67.1L45.0 67.4L46.0 67.2L47.0 67.5L48.0 66.8L49.0 66.2L50.0 66.0L51.0 65.0L52.0 64.8L53.0 65.8L54.0 67.2L54.5 67.5L55.0 67.9L56.0 68.2L56.6 68.5L57.0 68.6L58.0 68.9L59.0 68.7L60.0 68.9L61.0 68.4L62.0 66.9L63.0 65.7L64.0 65.0L65.0 67.6L66.0 67.0L67.0 67.5L68.0 68.3L68.9 68.9L69.0 69.1L70.0 68.8L71.0 68.8L72.0 68.7L73.0 69.0L74.0 68.5L74.5 68.5L75.0 68.1L76.0 67.6L77.0 66.5L78.0 63.5L79.0 56.5L79.2 55.5L80.0 59.5L81.0 56.7L82.0 58.5L83.0 59.2L84.0 59.3L85.0 58.5L86.0 60.8L87.0 64.1L88.0 63.4L89.0 63.0L90.0 64.7L90.6 62.9L91.0 63.3L92.0 65.2L93.0 63.6L94.0 66.6L95.0 66.8L96.0 66.0L96.2 65.5L97.0 65.8L98.0 65.9L99.0 66.0L100.0 67.2L101.0 65.5L102.0 64.0L102.8 63.8L103.0 65.3L104.0 64.7L105.0 65.7L106.0 66.5L107.0 67.0L108.0 67.7L109.0 68.6L109.4 68.5L110.0 68.8L111.0 67.7L112.0 67.5L113.0 67.5L114.0 66.4L115.0 66.0L116.0 67.7L117.0 66.4L118.0 66.4L119.0 66.6L120.0 67.1L121.0 67.0L122.0 66.7L123.0 67.1L124.0 66.4L125.0 67.5L126.0 66.0L126.4 66.0L127.0 67.1L128.0 67.1L129.0 68.0L130.0 67.6L131.0 67.8L132.0 67.5L133.0 67.8L134.0 67.6L135.0 67.6L136.0 67.7L137.0 68.3L138.0 68.6L139.0 67.9L140.0 68.6L141.0 67.9L141.5 68.0L142.0 68.6L143.0 68.6L144.0 68.6L145.0 68.6L146.0 68.8L147.0 68.9L148.0 68.4L149.0 66.7L150.0 67.5L151.0 64.4L151.9 63.8L152.0 66.1L153.0 64.7L154.0 65.3L155.0 66.0L156.0 67.5L157.0 66.3L157.5 66.5L158.0 66.5L159.0 67.1L160.0 67.7L161.0 68.3L161.3 68.5L162.0 67.9L163.0 68.0L164.0 66.1L165.0 65.5L166.0 66.6L167.0 67.1L168.0 68.1L169.0 68.3L169.8 68.5L170.0 68.7L171.0 68.6L172.0 68.5L173.0 68.3L174.0 68.2L175.0 67.7L176.0 67.6L177.0 65.6L177.5 65.0L178.0 66.0L179.0 67.1L180.0 66.1L181.0 66.7L182.0 67.3L183.0 68.0L184.0 67.7L185.0 68.0L186.0 68.4L187.0 68.3L188.0 67.1L189.0 67.0L190.0 67.2L191.0 67.6L192.0 67.1L193.0 66.6L194.0 67.1L194.5 66.5L195.0 68.1L196.0 68.2L197.0 67.6L198.0 68.0L199.0 65.1L200.0 59.5L201.0 56.3L202.0 58.8L203.0 62.6L203.5 59.5L204.0 58.7L205.0 61.3L206.0 55.8L206.2 53.8L207.0 57.8L208.0 56.8L209.0 58.3L210.0 58.6L210.6 60.1L211.0 64.6L212.0 61.1L213.0 61.5L214.0 64.1L215.0 64.4L215.3 63.8L216.0 65.1L217.0 65.1L218.0 67.6L219.0 66.5L220.0 66.6L221.0 65.9L222.0 65.7L223.0 65.7L224.0 67.2L225.0 65.2L226.0 65.2L226.6 64.8L227.0 65.8L228.0 66.0L229.0 65.0L230.0 67.3L231.0 65.2L232.0 65.5L232.3 65.5L233.0 65.9L234.0 67.2L235.0 67.7L236.0 68.0L237.0 68.4L238.0 68.0L239.0 66.5L239.8 65.7L240.0 66.8L241.0 66.2L242.0 67.5L243.0 67.8L244.0 68.2L244.5 68.0L245.0 68.1L246.0 68.7L247.0 68.4L248.0 68.5L249.0 68.6L250.0 68.2L251.0 67.0L252.0 66.5L253.0 67.1L254.0 67.3L255.0 67.9L256.0 68.4L256.8 68.8L257.0 68.8L258.0 68.9L259.0 68.8L260.0 68.8L261.0 68.6L262.0 68.2L263.0 66.6L264.0 67.3L264.3 65.5L265.0 66.5L266.0 66.7L267.0 68.3L268.0 68.4L269.0 68.8L270.0 69.0L271.0 68.8L272.0 68.5L272.8 68.5L273.0 68.5L274.0 68.0L275.0 68.0L276.0 67.5L277.0 64.7L278.0 58.4L278.5 53.8L279.0 59.8L280.0 60.9L281.0 60.1L282.0 58.9L283.0 57.2L284.0 57.4L285.0 62.0L286.0 60.3L287.0 61.8L288.0 60.1L289.0 62.7L290.0 61.7L291.0 62.1L292.0 66.3L292.6 63.8L293.0 65.0L294.0 66.9L295.0 65.0L296.0 67.2L296.4 66.0L297.0 65.6L298.0 66.1L299.0 65.3L300.0 65.6L301.0 65.2L302.0 62.9L303.0 65.4L304.0 64.3L305.0 66.1L306.0 65.9L307.0 67.1L307.7 67.5L308.0 67.7L309.0 67.5L310.0 68.0L311.0 67.7L312.0 67.8L313.0 66.1L313.4 66.0L314.0 66.9L315.0 66.2L316.0 67.9L317.0 66.5L318.0 67.7L319.0 67.0L320.0 68.2L321.0 66.9L322.0 66.5L323.0 67.8L324.0 66.9L324.7 66.0L325.0 66.0L326.0 66.2L327.0 67.1L328.0 68.2L329.0 68.0L330.0 68.4L330.4 68.0L331.0 68.7L332.0 68.2L333.0 67.7L334.0 67.8L335.0 67.5L336.0 67.5L337.0 67.3L338.0 67.3L339.0 67.7L340.0 67.3L340.8 67.0L341.0 67.0L342.0 68.3L343.0 68.2L344.0 68.4L345.0 68.6L345.5 68.8L346.0 68.4L347.0 68.1L348.0 67.9L349.0 65.9L350.0 66.1L350.4 65.0L351.0 65.9L352.0 67.5L353.0 67.5L354.0 66.5L355.0 67.4L356.0 68.3L356.5 68.8L357.0 68.8L358.0 68.8L359.0 68.8L360.0 68.6L361.0 67.6L362.0 65.9L363.0 65.1L363.6 64.8L364.0 65.3L365.0 65.1L366.0 67.3L367.0 67.0L368.0 66.4L368.3 66.5L369.0 67.0L370.0 68.1L371.0 67.7L372.0 68.3L373.0 68.8L374.0 68.9L375.0 68.1L376.0 67.6L377.0 67.2L377.7 67.0L378.0 67.0L379.0 67.1L380.0 67.4L381.0 68.2L382.0 68.0L383.0 68.1L384.0 68.8L385.0 68.4L385.3 68.5L386.0 68.5L387.0 67.7L388.0 67.5L389.0 66.7L390.0 66.4L391.0 66.0L392.0 67.1L393.0 68.0L394.0 67.8L395.0 68.1L395.7 68.0L396.0 68.5L397.0 67.6L398.0 67.7L399.0 66.5L400.0 59.1L400.8 52.9L401.0 57.7L402.0 60.9L403.0 58.1L403.5 58.5L404.0 60.7L405.0 55.3L406.0 54.5L407.0 55.1L408.0 63.2L409.0 59.5L410.0 60.0L410.8 61.0L411.0 60.6L412.0 61.6L413.0 61.9L414.0 64.6L415.0 65.5L415.5 63.8L416.0 63.9L417.0 66.9L418.0 66.0L419.0 66.6L420.0 65.3L421.0 66.0L422.0 67.8L423.0 66.2L424.0 67.4L425.0 67.1L425.8 67.0L426.0 66.8L427.0 66.8L428.0 66.1L429.0 65.8L430.0 66.1L430.6 65.5L431.0 66.6L432.0 66.6L433.0 65.7L434.0 66.2L435.0 67.4L436.0 67.8L437.0 67.9L438.0 66.5L439.0 67.8L440.0 67.7L441.0 67.5L442.0 68.0L443.0 67.7L443.8 67.5L444.0 67.9L445.0 68.6L446.0 68.2L447.0 68.5L448.0 68.8L449.0 67.1L450.0 64.3L450.4 63.8L451.0 64.7L452.0 66.5L452.5 67.5L453.0 68.3L454.0 67.4L455.0 67.5L456.0 67.7L457.0 67.7L458.0 67.9L458.9 68.0L459.0 68.1L460.0 68.3L461.0 66.7L462.0 66.1L463.0 67.0L463.6 65.5L464.0 66.7L465.0 66.7L466.0 67.4L467.0 68.3L468.0 68.8L468.3 68.8L469.0 69.1L470.0 68.9L471.0 68.8L472.0 68.8L473.0 68.4L474.0 68.0L475.0 68.0L475.5 67.5L476.0 65.3L477.0 60.3L477.7 56.3L478.0 55.5L479.0 56.3L480.0 60.0L481.0 59.9L482.0 58.5L482.5 59.1L483.0 63.8L484.0 61.1L485.0 63.5L486.0 63.9L487.0 63.2L488.0 62.9L489.0 64.5L490.0 65.7L491.0 64.6L492.0 66.9L492.8 66.0L493.0 66.9L494.0 66.5L495.0 67.4L495.7 67.5L496.0 68.2L497.0 65.2L498.0 64.6L499.0 64.9L500.0 61.0L501.0 65.8L502.0 64.7L503.0 65.5L504.0 65.9L505.0 65.9L506.0 66.5L507.0 67.6L508.0 66.8L509.0 66.9L510.0 67.0L511.0 66.4L511.7 65.7L512.0 67.1L513.0 65.8L514.0 66.3L515.0 67.4L516.0 66.5L517.0 66.3L518.0 66.5L519.0 66.7L520.0 67.5L521.0 66.5L522.0 67.3L523.0 66.1L524.0 66.0L525.0 66.3L525.7 66.0L526.0 67.0L527.0 66.4L528.0 66.9L529.0 68.0L530.0 68.1L530.4 68.0L531.0 68.5L532.0 68.0L533.0 67.4L534.0 67.7L535.0 67.0L536.0 66.9L537.0 67.9L538.0 66.5L538.9 66.5L539.0 67.6L540.0 68.0L541.0 67.4L542.0 67.8L543.0 68.2L543.6 68.5L544.0 68.7L545.0 68.2L546.0 67.7L547.0 67.1L548.0 66.5L549.0 65.4L550.0 66.5L550.2 65.0L551.0 66.6L552.0 67.1L553.0 66.5L554.0 67.9L555.0 68.1L555.8 68.0L556.0 68.2L557.0 67.6L558.0 67.9L559.0 66.9L560.0 66.1L560.6 65.5L561.0 66.5L562.0 66.5L563.0 67.0L564.0 68.3L564.3 68.0L565.0 67.6L566.0 67.7L567.0 66.7L568.0 66.5L569.0 66.9L570.0 68.0L571.0 68.1L571.9 68.5L572.0 68.4L573.0 68.7L574.0 68.6L575.0 67.4L576.0 67.3L576.6 67.0L577.0 67.2L578.0 66.9L579.0 67.4L580.0 67.4L580.4 67.0L581.0 68.1L582.0 67.9L583.0 67.9L584.0 68.5L585.0 68.8L586.0 68.4L587.0 68.0L588.0 67.7L589.0 68.1L589.8 67.0L590.0 67.2L591.0 67.5L592.0 68.3L593.0 68.0L594.0 67.6L594.5 67.5L595.0 67.2L596.0 67.0L597.0 66.7L598.0 67.3L598.5 66.5L599.0 64.9L600.0 62.8L600.8 52.9L601.0 58.5L602.0 59.5L603.0 59.2L604.0 62.4L605.0 57.4L605.8 57.2L606.0 58.9L607.0 59.9L608.0 61.9L609.0 61.2L610.0 62.8L610.6 62.9L611.0 63.6L612.0 64.3L613.0 64.2L614.0 65.1L615.0 65.8L615.3 65.0L616.0 65.7L617.0 67.8L618.0 67.9L619.0 67.5L620.0 67.2L621.0 67.7L622.0 66.9L623.0 66.6L624.0 66.2L624.7 65.5L625.0 66.3L626.0 66.0L627.0 66.8L628.0 68.0L629.0 67.0L629.4 67.0L630.0 67.5L631.0 68.2L632.0 67.6L633.0 67.8L633.2 67.5L634.0 67.7L635.0 67.3L636.0 67.2L637.0 67.8L638.0 66.6L638.9 66.0L639.0 67.3L640.0 67.2L641.0 66.9L642.0 67.6L643.0 67.8L644.0 67.9L644.5 68.0L645.0 68.3L646.0 67.6L647.0 67.7L648.0 67.1L649.0 67.8L650.0 66.6L651.0 66.7L652.0 66.0L653.0 67.6L654.0 66.8L655.0 67.8L656.0 67.6L657.0 68.6L657.7 68.0L658.0 68.5L659.0 68.3L660.0 68.6L660.6 68.8L661.0 68.6L662.0 67.9L663.0 67.7L664.0 66.0L664.3 66.0L665.0 66.9L666.0 66.7L667.0 67.3L668.0 68.3L669.0 68.5L670.0 68.6L671.0 68.0L672.0 68.4L672.8 67.5L673.0 68.1L674.0 68.2L675.0 67.5L675.5 66.5L676.0 65.2L677.0 58.3L677.5 56.3L678.0 62.1L679.0 57.5L680.0 61.5L681.0 59.0L682.0 60.2L682.3 61.0L683.0 62.3L684.0 61.8L685.0 64.4L686.0 62.3L687.0 62.9L688.0 63.2L689.0 66.2L690.0 63.8L691.0 66.3L691.7 64.5L692.0 64.7L693.0 64.6L694.0 65.6L695.0 65.7L695.5 65.5L696.0 65.7L697.0 65.9L697.0 72.5L696.0 73.7L695.5 73.5L695.0 73.7L694.0 72.2L693.0 73.3L692.0 74.8L691.7 74.5L691.0 74.8L690.0 74.6L689.0 73.2L688.0 76.9L687.0 77.0L686.0 73.6L685.0 77.9L684.0 77.3L683.0 78.8L682.3 78.9L682.0 78.2L681.0 76.5L680.0 78.1L679.0 84.5L678.0 85.3L677.5 85.5L677.0 82.7L676.0 74.3L675.5 72.5L675.0 72.0L674.0 71.6L673.0 71.7L672.8 71.5L672.0 71.4L671.0 70.9L670.0 70.8L669.0 70.5L668.0 71.1L667.0 71.5L666.0 72.0L665.0 72.8L664.3 73.0L664.0 72.9L663.0 72.1L662.0 70.5L661.0 70.1L660.6 70.2L660.0 69.9L659.0 70.2L658.0 70.9L657.7 71.0L657.0 71.2L656.0 70.6L655.0 72.1L654.0 71.3L653.0 72.9L652.0 73.0L651.0 72.4L650.0 72.5L649.0 72.2L648.0 72.1L647.0 71.6L646.0 71.0L645.0 70.5L644.5 71.0L644.0 70.6L643.0 71.1L642.0 72.1L641.0 71.4L640.0 72.2L639.0 71.2L638.9 73.0L638.0 71.6L637.0 72.4L636.0 72.4L635.0 71.8L634.0 71.0L633.2 71.5L633.0 71.3L632.0 71.7L631.0 71.9L630.0 71.4L629.4 72.0L629.0 71.4L628.0 72.7L627.0 73.0L626.0 72.0L625.0 73.6L624.7 73.5L624.0 73.4L623.0 73.2L622.0 72.8L621.0 71.7L620.0 70.9L619.0 71.5L618.0 72.1L617.0 71.5L616.0 71.8L615.3 74.0L615.0 72.7L614.0 73.2L613.0 72.8L612.0 74.8L611.0 74.1L610.6 78.0L610.0 79.0L609.0 76.9L608.0 80.3L607.0 80.0L606.0 80.4L605.8 80.8L605.0 79.9L604.0 84.1L603.0 85.4L602.0 81.7L601.0 79.7L600.8 87.0L600.0 77.2L599.0 76.1L598.5 72.5L598.0 71.2L597.0 71.8L596.0 72.1L595.0 70.8L594.5 71.5L594.0 71.5L593.0 70.8L592.0 71.9L591.0 71.1L590.0 71.1L589.8 72.0L589.0 71.1L588.0 70.5L587.0 70.7L586.0 70.6L585.0 70.2L584.0 70.4L583.0 70.8L582.0 70.6L581.0 71.6L580.4 72.0L580.0 72.1L579.0 71.5L578.0 72.2L577.0 71.5L576.6 72.0L576.0 71.8L575.0 70.8L574.0 71.2L573.0 70.8L572.0 70.4L571.9 70.5L571.0 71.1L570.0 71.5L569.0 71.0L568.0 72.5L567.0 71.7L566.0 71.7L565.0 70.4L564.3 71.0L564.0 71.2L563.0 71.5L562.0 72.5L561.0 73.3L560.6 74.0L560.0 73.8L559.0 72.6L558.0 71.8L557.0 71.7L556.0 71.1L555.8 71.0L555.0 71.4L554.0 71.9L553.0 71.6L552.0 72.3L551.0 73.2L550.2 74.5L550.0 74.2L549.0 73.4L548.0 72.4L547.0 71.7L546.0 72.1L545.0 71.4L544.0 70.8L543.6 70.5L543.0 70.3L542.0 71.3L541.0 70.8L540.0 72.1L539.0 71.9L538.9 72.5L538.0 71.7L537.0 71.5L536.0 72.0L535.0 72.0L534.0 71.3L533.0 71.4L532.0 70.5L531.0 71.2L530.4 71.0L530.0 71.3L529.0 71.0L528.0 71.2L527.0 71.7L526.0 71.2L525.7 73.0L525.0 72.9L524.0 71.6L523.0 72.7L522.0 71.9L521.0 72.5L520.0 72.3L519.0 71.2L518.0 71.4L517.0 72.2L516.0 72.5L515.0 71.4L514.0 73.1L513.0 72.7L512.0 74.0L511.7 75.2L511.0 73.8L510.0 74.6L509.0 74.2L508.0 73.1L507.0 72.7L506.0 72.5L505.0 71.3L504.0 73.4L503.0 73.5L502.0 73.9L501.0 73.9L500.0 78.0L499.0 77.0L498.0 74.0L497.0 73.5L496.0 71.9L495.7 71.5L495.0 72.0L494.0 72.4L493.0 73.1L492.8 73.0L492.0 73.2L491.0 74.3L490.0 75.1L489.0 75.7L488.0 77.0L487.0 78.2L486.0 76.7L485.0 75.5L484.0 78.9L483.0 80.8L482.5 80.8L482.0 81.7L481.0 79.6L480.0 84.1L479.0 81.8L478.0 78.9L477.7 87.0L477.0 82.6L476.0 73.2L475.5 71.5L475.0 71.5L474.0 70.9L473.0 70.1L472.0 70.2L471.0 69.9L470.0 70.2L469.0 70.1L468.3 70.2L468.0 70.2L467.0 71.2L466.0 71.3L465.0 71.9L464.0 72.7L463.6 73.5L463.0 73.2L462.0 71.2L461.0 71.0L460.0 70.6L459.0 70.7L458.9 71.0L458.0 70.3L457.0 70.8L456.0 71.2L455.0 71.5L454.0 71.2L453.0 71.4L452.5 71.5L452.0 71.2L451.0 71.1L450.4 71.5L450.0 71.4L449.0 70.4L448.0 70.2L447.0 70.4L446.0 70.5L445.0 70.6L444.0 71.1L443.8 71.5L443.0 71.5L442.0 71.4L441.0 71.7L440.0 71.7L439.0 71.0L438.0 72.5L437.0 72.9L436.0 72.0L435.0 73.2L434.0 73.3L433.0 72.9L432.0 71.6L431.0 72.3L430.6 73.5L430.0 73.6L429.0 73.3L428.0 72.4L427.0 72.5L426.0 71.8L425.8 72.0L425.0 72.3L424.0 72.3L423.0 72.8L422.0 72.2L421.0 73.0L420.0 73.3L419.0 72.9L418.0 73.9L417.0 72.8L416.0 74.4L415.5 74.2L415.0 73.2L414.0 72.5L413.0 73.3L412.0 77.6L411.0 77.3L410.8 78.0L410.0 78.4L409.0 79.1L408.0 81.1L407.0 78.8L406.0 81.8L405.0 82.1L404.0 81.3L403.5 80.5L403.0 81.5L402.0 83.7L401.0 87.3L400.8 86.5L400.0 80.2L399.0 72.5L398.0 71.2L397.0 71.1L396.0 71.2L395.7 71.0L395.0 71.4L394.0 71.2L393.0 72.0L392.0 71.4L391.0 73.0L390.0 71.2L389.0 72.3L388.0 71.9L387.0 70.7L386.0 70.3L385.3 70.5L385.0 70.6L384.0 70.1L383.0 70.3L382.0 70.3L381.0 70.6L380.0 71.2L379.0 71.3L378.0 71.3L377.7 72.0L377.0 70.8L376.0 71.5L375.0 70.3L374.0 70.7L373.0 70.2L372.0 70.3L371.0 71.3L370.0 71.4L369.0 71.0L368.3 72.5L368.0 72.8L367.0 73.5L366.0 74.2L365.0 74.8L364.0 72.9L363.6 75.2L363.0 74.7L362.0 72.1L361.0 72.2L360.0 70.6L359.0 70.2L358.0 70.2L357.0 70.2L356.5 70.2L356.0 70.2L355.0 71.3L354.0 72.5L353.0 73.1L352.0 72.9L351.0 74.0L350.4 74.0L350.0 72.7L349.0 71.4L348.0 72.3L347.0 71.2L346.0 70.6L345.5 70.2L345.0 70.2L344.0 70.8L343.0 71.2L342.0 71.1L341.0 70.8L340.8 72.0L340.0 71.8L339.0 71.5L338.0 70.6L337.0 71.2L336.0 71.5L335.0 71.3L334.0 71.4L333.0 71.1L332.0 70.9L331.0 70.5L330.4 71.0L330.0 70.7L329.0 71.3L328.0 71.6L327.0 71.1L326.0 72.7L325.0 73.0L324.7 73.0L324.0 72.5L323.0 71.4L322.0 72.8L321.0 71.2L320.0 71.3L319.0 72.0L318.0 71.6L317.0 72.2L316.0 72.8L315.0 72.9L314.0 72.0L313.4 73.0L313.0 71.4L312.0 72.9L311.0 72.3L310.0 72.1L309.0 70.7L308.0 71.3L307.7 71.5L307.0 72.1L306.0 72.8L305.0 74.0L304.0 75.5L303.0 75.6L302.0 77.0L301.0 76.3L300.0 73.5L299.0 73.5L298.0 74.2L297.0 73.2L296.4 73.0L296.0 71.4L295.0 72.1L294.0 73.2L293.0 74.3L292.6 74.2L292.0 74.8L291.0 75.6L290.0 76.2L289.0 76.2L288.0 77.0L287.0 74.4L286.0 75.2L285.0 75.7L284.0 78.0L283.0 78.9L282.0 75.2L281.0 80.8L280.0 85.5L279.0 85.4L278.5 87.0L278.0 81.9L277.0 74.4L276.0 71.5L275.0 70.9L274.0 70.3L273.0 70.5L272.8 70.5L272.0 70.3L271.0 70.3L270.0 70.0L269.0 70.2L268.0 71.1L267.0 72.0L266.0 72.2L265.0 72.2L264.3 74.0L264.0 72.5L263.0 73.0L262.0 71.6L261.0 70.4L260.0 70.2L259.0 70.2L258.0 69.9L257.0 70.1L256.8 70.2L256.0 70.2L255.0 71.1L254.0 71.7L253.0 72.2L252.0 72.5L251.0 72.0L250.0 71.4L249.0 71.1L248.0 70.5L247.0 70.1L246.0 70.4L245.0 71.0L244.5 71.0L244.0 71.3L243.0 71.7L242.0 72.6L241.0 73.3L240.0 73.2L239.8 74.8L239.0 73.9L238.0 72.8L237.0 71.8L236.0 71.0L235.0 71.5L234.0 71.8L233.0 73.2L232.3 73.5L232.0 72.1L231.0 73.6L230.0 73.2L229.0 72.9L228.0 75.4L227.0 75.8L226.6 75.5L226.0 74.6L225.0 73.7L224.0 74.5L223.0 74.0L222.0 73.6L221.0 73.1L220.0 72.6L219.0 72.5L218.0 73.4L217.0 74.3L216.0 75.2L215.3 76.1L215.0 75.2L214.0 77.8L213.0 75.9L212.0 78.8L211.0 77.3L210.6 80.8L210.0 79.4L209.0 79.0L208.0 81.7L207.0 80.0L206.2 81.8L206.0 82.1L205.0 75.2L204.0 79.5L203.5 79.5L203.0 77.6L202.0 79.8L201.0 86.5L200.0 81.6L199.0 74.7L198.0 71.0L197.0 70.6L196.0 71.8L195.0 71.5L194.5 72.5L194.0 71.1L193.0 72.6L192.0 72.2L191.0 72.0L190.0 72.2L189.0 72.0L188.0 70.8L187.0 71.8L186.0 70.9L185.0 70.5L184.0 70.8L183.0 71.0L182.0 71.6L181.0 72.3L180.0 72.8L179.0 73.4L178.0 72.5L177.5 74.0L177.0 73.4L176.0 72.2L175.0 71.7L174.0 71.5L173.0 71.1L172.0 70.5L171.0 70.4L170.0 70.5L169.8 70.5L169.0 70.9L168.0 71.4L167.0 71.7L166.0 72.6L165.0 73.5L164.0 71.9L163.0 71.4L162.0 71.1L161.3 70.5L161.0 70.7L160.0 70.7L159.0 71.8L158.0 72.2L157.5 72.5L157.0 71.4L156.0 71.6L155.0 73.0L154.0 73.9L153.0 73.0L152.0 73.1L151.9 75.1L151.0 72.5L150.0 72.7L149.0 72.2L148.0 71.2L147.0 70.1L146.0 70.2L145.0 70.4L144.0 70.6L143.0 70.7L142.0 70.7L141.5 71.0L141.0 70.7L140.0 71.1L139.0 70.5L138.0 70.9L137.0 71.2L136.0 71.4L135.0 71.1L134.0 71.5L133.0 71.4L132.0 71.5L131.0 71.7L130.0 72.0L129.0 71.9L128.0 71.9L127.0 72.7L126.4 73.0L126.0 72.5L125.0 71.6L124.0 72.3L123.0 71.3L122.0 71.9L121.0 72.0L120.0 71.5L119.0 71.1L118.0 72.3L117.0 72.7L116.0 73.1L115.0 73.0L114.0 72.5L113.0 72.0L112.0 71.8L111.0 71.0L110.0 70.7L109.4 70.5L109.0 70.5L108.0 70.9L107.0 72.1L106.0 72.5L105.0 72.6L104.0 74.4L103.0 75.6L102.8 76.1L102.0 74.7L101.0 73.8L100.0 73.1L99.0 73.5L98.0 73.5L97.0 73.8L96.2 73.5L96.0 72.3L95.0 72.3L94.0 73.1L93.0 74.0L92.0 75.1L91.0 76.5L90.6 77.0L90.0 76.0L89.0 74.3L88.0 77.4L87.0 74.2L86.0 76.9L85.0 79.0L84.0 74.9L83.0 80.9L82.0 81.5L81.0 78.0L80.0 81.8L79.2 87.5L79.0 86.4L78.0 79.6L77.0 72.5L76.0 71.2L75.0 70.3L74.5 70.5L74.0 70.1L73.0 70.4L72.0 70.0L71.0 70.1L70.0 70.1L69.0 70.0L68.9 70.1L68.0 70.4L67.0 71.5L66.0 72.9L65.0 71.7L64.0 75.0L63.0 73.0L62.0 72.8L61.0 71.3L60.0 70.1L59.0 70.2L58.0 70.0L57.0 70.5L56.6 70.5L56.0 70.2L55.0 70.5L54.5 71.5L54.0 70.9L53.0 73.1L52.0 74.2L51.0 73.3L50.0 72.4L49.0 72.6L48.0 71.4L47.0 71.5L46.0 71.3L45.0 71.1L44.0 71.7L43.0 72.0L42.0 71.9L41.0 71.4L40.0 72.2L39.0 72.4L38.0 73.0L37.7 73.0L37.0 72.2L36.0 72.7L35.0 72.0L34.0 71.2L33.0 72.8L32.0 72.5L31.0 72.4L30.0 72.7L29.0 71.9L28.0 73.3L27.0 73.4L26.0 73.1L25.0 72.7L24.0 72.5L23.0 72.5L22.0 71.4L21.0 73.3L20.0 71.7L19.0 73.5L18.0 74.4L17.0 74.2L16.0 73.7L15.0 75.5L14.0 73.9L13.0 73.7L12.0 76.8L11.0 78.0L10.0 77.4L9.5 80.5L9.0 79.4L8.0 78.8L7.5 84.5L7.0 83.9L6.0 85.3L5.0 84.5L4.0 81.6L3.0 85.5L2.0 82.5Z" fill="#0080ff" stroke="#000" stroke-width="1" stroke-linejoin="miter"/></svg>
<div class="panel" style="left:22px;top:217px;width:189px;height:95px;"></div>
<span class="t " style="left:26.6px;top:223.72px;font-size:12.5px;font-weight:bold;color:#000;letter-spacing:-0.094px;">Track</span>
<span class="t " style="left:64.6px;top:223.72px;font-size:12.5px;font-weight:bold;color:#000;">2</span>
<div class="inp" style="left:80px;top:222px;width:125px;height:17px;"></div>
<span class="t " style="left:83.0px;top:225.04px;font-size:12px;color:#000;letter-spacing:-0.525px;">Welcome - Echo Voice</span>
<div class="btn" style="left:48px;top:243px;width:36px;height:17px;"></div>
<span class="t " style="left:56.7px;top:246.04px;font-size:12px;color:#000;letter-spacing:-1.133px;">Arm</span>
<div class="btn" style="left:88px;top:243px;width:36px;height:17px;"></div>
<span class="t " style="left:93.9px;top:246.04px;font-size:12px;color:#000;letter-spacing:-0.622px;">Mute</span>
<div class="btn" style="left:128px;top:243px;width:36px;height:17px;"></div>
<span class="t " style="left:135.4px;top:246.04px;font-size:12px;color:#000;letter-spacing:-0.708px;">Solo</span>
<div class="btn" style="left:168px;top:243px;width:36px;height:17px;"></div>
<span class="t " style="left:172.4px;top:246.04px;font-size:12px;color:#000;letter-spacing:-0.832px;">Props</span>
<svg style="left:29px;top:243px" width="16" height="15" viewBox="0 0 16 15" fill="none" stroke="#2c74f0" stroke-width="2.5" stroke-linecap="butt" stroke-linejoin="miter"><path d="M1 7.3H11.5"/><path d="M6.3 1.6L12 7.3L6.3 13"/></svg>
<svg class="wf" style="left:215px;top:217px" width="699" height="96" viewBox="0 0 699 96" shape-rendering="crispEdges"><path d="M-0.5 96V-0.5H699" stroke="#fff" stroke-width="1" fill="none"/><rect x="1" y="1" width="697" height="94" fill="#b5b5b5" stroke="#000" stroke-width="2"/><rect x="696" y="2" width="1" height="92" fill="#000"/><path d="M2 47.5H697" stroke="#000" stroke-width="1" fill="none"/><path d="M2.0 47.5L2.5 47.5L3.0 47.5L3.5 47.5L4.0 47.5L4.5 47.5L5.0 47.5L5.5 47.5L6.0 47.5L6.5 47.5L7.0 47.5L7.5 47.5L8.0 47.5L8.5 47.5L9.0 47.5L9.5 47.5L10.0 47.5L10.5 47.5L11.0 47.5L11.5 47.5L12.0 47.5L12.5 47.5L13.0 47.5L13.5 47.5L14.0 47.5L14.5 47.5L15.0 47.5L15.5 47.5L16.0 47.5L16.5 47.5L17.0 47.5L17.5 47.5L18.0 47.5L18.5 47.5L19.0 47.5L19.5 47.5L20.0 47.5L20.3 41.3L20.5 40.7L21.0 38.2L21.3 36.7L21.5 37.6L22.0 39.2L22.3 40.0L22.5 39.1L23.0 36.1L23.5 34.0L23.6 32.7L24.0 35.5L24.5 38.4L24.9 40.0L25.0 40.7L25.5 43.0L26.0 45.1L26.2 45.9L26.5 46.2L27.0 46.7L27.5 47.2L28.0 47.2L28.5 47.2L29.0 47.2L29.5 47.2L30.0 46.7L30.5 46.2L30.8 45.9L31.0 45.5L31.5 44.6L32.0 43.6L32.4 42.6L32.5 42.8L33.0 43.2L33.5 43.4L34.0 44.0L34.1 43.9L34.5 43.9L35.0 43.6L35.4 43.3L35.5 42.8L36.0 38.9L36.5 34.7L37.0 34.6L37.5 33.8L38.0 32.3L38.1 32.1L38.5 33.0L39.0 33.2L39.5 33.2L40.0 34.0L40.5 33.4L40.7 33.4L41.0 33.5L41.5 33.8L42.0 34.4L42.5 34.5L42.7 34.0L43.0 35.7L43.5 37.4L44.0 39.6L44.3 40.6L44.5 40.5L45.0 39.7L45.5 38.8L46.0 37.3L46.5 35.8L47.0 34.4L47.3 33.4L47.5 32.7L48.0 30.5L48.5 27.9L49.0 30.8L49.5 33.3L49.6 33.4L50.0 36.9L50.5 40.0L50.9 42.6L51.0 43.2L51.5 44.6L52.0 46.1L52.2 46.6L52.5 46.8L53.0 47.0L53.5 47.2L54.0 45.7L54.5 44.4L54.6 43.9L55.0 42.8L55.5 41.2L55.9 40.0L56.0 39.9L56.5 39.5L57.0 38.6L57.5 37.8L57.9 36.7L58.0 37.0L58.5 36.2L59.0 35.3L59.5 34.8L60.0 34.7L60.2 33.7L60.5 34.7L61.0 35.5L61.5 36.6L61.8 36.7L62.0 37.5L62.5 39.5L63.0 41.4L63.1 41.3L63.5 43.0L64.0 44.8L64.5 46.6L65.0 45.2L65.5 43.6L65.8 42.6L66.0 42.2L66.5 41.0L66.7 40.0L67.0 39.5L67.5 37.4L68.0 35.4L68.5 37.5L69.0 39.3L69.3 40.0L69.5 40.5L70.0 41.4L70.5 41.9L71.0 42.6L71.5 44.0L72.0 45.0L72.4 45.9L72.5 45.9L73.0 45.7L73.5 45.4L73.7 45.3L74.0 44.4L74.5 42.9L75.0 41.3L75.5 32.7L76.0 25.1L76.3 18.2L76.5 20.2L77.0 22.6L77.5 25.5L77.6 25.5L78.0 24.8L78.5 23.3L79.0 23.6L79.4 20.9L79.5 20.9L80.0 20.8L80.5 21.9L81.0 20.4L81.5 20.4L81.6 20.2L82.0 21.5L82.5 21.8L83.0 23.0L83.5 23.0L83.6 22.2L84.0 22.9L84.5 23.9L85.0 24.8L85.5 25.4L85.9 24.2L86.0 24.7L86.5 27.1L87.0 30.3L87.3 30.8L87.5 31.7L88.0 34.0L88.5 35.5L88.8 36.0L89.0 37.0L89.5 37.4L90.0 38.2L90.5 39.3L90.8 39.3L91.0 39.3L91.5 39.6L92.0 39.3L92.5 39.1L93.0 39.4L93.5 38.9L94.0 39.8L94.5 41.0L95.0 41.5L95.4 42.0L95.5 42.5L96.0 43.2L96.5 44.2L97.0 45.2L97.4 45.9L97.5 46.0L98.0 46.2L98.5 46.3L99.0 46.5L99.5 46.6L100.0 46.8L100.1 46.8L100.5 46.9L101.0 46.9L101.5 47.0L102.0 47.0L102.5 47.1L102.7 47.1L103.0 47.1L103.5 47.0L104.0 46.9L104.5 46.8L105.0 46.7L105.3 46.6L105.5 46.6L106.0 46.4L106.5 46.2L107.0 46.0L107.3 45.9L107.5 46.0L108.0 45.9L108.5 45.9L109.0 45.9L109.5 45.9L109.9 45.9L110.0 46.0L110.5 45.9L111.0 45.7L111.5 45.7L112.0 45.6L112.5 45.5L113.0 45.4L113.2 45.3L113.5 44.9L114.0 44.1L114.5 43.2L115.0 42.5L115.2 42.0L115.5 42.0L116.0 41.5L116.5 40.7L117.0 40.3L117.5 39.7L117.9 38.9L118.0 39.1L118.5 40.0L119.0 40.5L119.5 41.0L120.0 41.6L120.5 42.0L121.0 42.6L121.5 43.1L122.0 43.7L122.5 43.9L123.0 44.5L123.5 45.0L124.0 45.5L124.5 45.9L125.0 46.7L125.5 47.5L126.0 47.5L126.5 47.5L127.0 47.5L127.5 47.5L128.0 47.5L128.5 47.5L129.0 47.5L129.5 47.5L130.0 47.5L130.5 47.5L131.0 47.5L131.5 47.5L132.0 47.5L132.5 47.5L133.0 47.5L133.5 47.5L134.0 47.5L134.5 47.5L135.0 47.5L135.5 47.5L136.0 47.5L136.5 47.5L137.0 47.5L137.5 47.5L138.0 47.5L138.5 47.5L139.0 47.5L139.5 47.5L140.0 47.5L140.5 47.5L141.0 47.5L141.5 47.5L142.0 47.5L142.5 47.5L143.0 47.5L143.5 47.5L144.0 47.5L144.5 47.5L145.0 47.5L145.5 47.5L146.0 47.5L146.5 47.5L147.0 47.5L147.5 47.5L148.0 47.5L148.5 47.5L149.0 47.5L149.5 47.5L150.0 47.5L150.5 47.5L151.0 47.5L151.5 47.5L152.0 47.5L152.5 47.5L152.8 41.3L153.0 40.8L153.5 38.2L153.8 36.7L154.0 37.4L154.5 39.3L154.8 40.0L155.0 39.1L155.5 36.4L156.0 33.9L156.1 32.7L156.5 35.4L157.0 37.9L157.4 40.0L157.5 40.6L158.0 42.8L158.5 45.1L158.7 45.9L159.0 46.2L159.5 46.7L160.0 47.2L160.5 47.2L161.0 47.2L161.5 47.2L162.0 47.2L162.5 46.7L163.0 46.3L163.3 45.9L163.5 45.6L164.0 44.5L164.5 43.7L164.9 42.6L165.0 42.9L165.5 43.3L166.0 43.7L166.5 44.1L166.6 43.9L167.0 43.8L167.5 43.5L167.9 43.3L168.0 42.7L168.5 38.8L169.0 34.7L169.5 34.5L170.0 33.9L170.5 33.2L170.6 32.1L171.0 33.3L171.5 33.3L172.0 33.8L172.5 33.5L173.0 33.6L173.2 33.4L173.5 33.9L174.0 33.6L174.5 34.2L175.0 34.0L175.2 34.0L175.5 35.3L176.0 37.5L176.5 39.8L176.8 40.6L177.0 40.4L177.5 39.3L178.0 38.7L178.5 37.3L179.0 36.6L179.5 34.9L179.8 33.4L180.0 33.2L180.5 30.4L181.0 27.9L181.5 31.5L182.0 33.5L182.1 33.4L182.5 36.5L183.0 39.8L183.4 42.6L183.5 43.0L184.0 44.5L184.5 46.1L184.7 46.6L185.0 46.8L185.5 47.0L186.0 47.2L186.5 45.8L187.0 44.4L187.1 43.9L187.5 43.0L188.0 41.3L188.4 40.0L188.5 40.0L189.0 39.5L189.5 38.7L190.0 37.6L190.4 36.7L190.5 36.9L191.0 36.7L191.5 36.1L192.0 35.0L192.5 34.7L192.7 33.7L193.0 34.8L193.5 36.0L194.0 36.2L194.3 36.7L194.5 37.8L195.0 39.3L195.5 41.0L195.6 41.3L196.0 43.1L196.5 44.8L197.0 46.6L197.5 45.2L198.0 43.5L198.3 42.6L198.5 42.4L199.0 40.9L199.2 40.0L199.5 39.3L200.0 37.5L200.5 35.4L201.0 37.3L201.5 39.4L201.8 40.0L202.0 40.3L202.5 41.1L203.0 42.0L203.5 42.6L204.0 43.9L204.5 45.0L204.9 45.9L205.0 45.9L205.5 45.6L206.0 45.4L206.2 45.3L206.5 44.6L207.0 43.0L207.5 41.3L208.0 33.1L208.5 24.6L208.8 18.2L209.0 20.4L209.5 23.3L210.0 25.4L210.1 25.5L210.5 26.1L211.0 24.7L211.5 23.2L211.9 20.9L212.0 22.3L212.5 21.7L213.0 21.0L213.5 21.6L214.0 20.5L214.1 20.2L214.5 22.4L215.0 22.1L215.5 22.5L216.0 23.8L216.1 22.2L216.5 23.0L217.0 23.7L217.5 24.6L218.0 25.0L218.4 24.2L218.5 24.7L219.0 27.6L219.5 30.2L219.8 30.8L220.0 32.5L220.5 34.1L221.0 35.5L221.3 36.0L221.5 36.4L222.0 37.4L222.5 38.3L223.0 39.2L223.3 39.3L223.5 39.4L224.0 39.4L224.5 39.3L225.0 39.2L225.5 39.4L226.0 38.9L226.5 39.8L227.0 40.9L227.5 41.7L227.9 42.0L228.0 42.3L228.5 43.4L229.0 44.2L229.5 45.2L229.9 45.9L230.0 46.0L230.5 46.1L231.0 46.3L231.5 46.4L232.0 46.6L232.5 46.8L232.6 46.8L233.0 46.9L233.5 46.9L234.0 47.0L234.5 47.0L235.0 47.1L235.2 47.1L235.5 47.1L236.0 47.0L236.5 46.9L237.0 46.8L237.5 46.7L237.8 46.6L238.0 46.6L238.5 46.4L239.0 46.2L239.5 46.1L239.8 45.9L240.0 46.0L240.5 46.0L241.0 46.0L241.5 46.0L242.0 45.9L242.4 45.9L242.5 46.0L243.0 45.8L243.5 45.8L244.0 45.7L244.5 45.5L245.0 45.5L245.5 45.5L245.7 45.3L246.0 45.0L246.5 44.1L247.0 43.2L247.5 42.4L247.7 42.0L248.0 42.0L248.5 41.4L249.0 41.0L249.5 40.2L250.0 39.8L250.4 38.9L250.5 39.5L251.0 40.2L251.5 40.5L252.0 40.9L252.5 41.5L253.0 42.0L253.5 42.7L254.0 43.1L254.5 43.6L255.0 43.9L255.5 44.6L256.0 44.9L256.5 45.4L257.0 45.9L257.5 46.8L258.0 47.5L258.5 47.5L259.0 47.5L259.5 47.5L260.0 47.5L260.5 47.5L261.0 47.5L261.5 47.5L262.0 47.5L262.5 47.5L263.0 47.5L263.5 47.5L264.0 47.5L264.5 47.5L265.0 47.5L265.5 47.5L266.0 47.5L266.5 47.5L267.0 47.5L267.5 47.5L268.0 47.5L268.5 47.5L269.0 47.5L269.5 47.5L270.0 47.5L270.5 47.5L271.0 47.5L271.5 47.5L272.0 47.5L272.5 47.5L273.0 47.5L273.5 47.5L274.0 47.5L274.5 47.5L275.0 47.5L275.5 47.5L276.0 47.5L276.5 47.5L277.0 47.5L277.5 47.5L278.0 47.5L278.5 47.5L279.0 47.5L279.5 47.5L280.0 47.5L280.5 47.5L281.0 47.5L281.5 47.5L282.0 47.5L282.5 47.5L283.0 47.5L283.5 47.5L284.0 47.5L284.5 47.5L285.0 47.5L285.3 41.3L285.5 40.8L286.0 38.1L286.3 36.7L286.5 38.0L287.0 39.3L287.3 40.0L287.5 39.4L288.0 36.1L288.5 33.7L288.6 32.7L289.0 35.0L289.5 38.3L289.9 40.0L290.0 40.5L290.5 42.9L291.0 45.1L291.2 45.9L291.5 46.2L292.0 46.7L292.5 47.2L293.0 47.2L293.5 47.2L294.0 47.2L294.5 47.2L295.0 46.7L295.5 46.3L295.8 45.9L296.0 45.6L296.5 44.5L297.0 43.6L297.4 42.6L297.5 42.9L298.0 43.2L298.5 43.7L299.0 43.8L299.1 43.9L299.5 43.7L300.0 43.5L300.4 43.3L300.5 42.6L301.0 38.7L301.5 34.7L302.0 34.5L302.5 33.1L303.0 32.7L303.1 32.1L303.5 32.4L304.0 32.6L304.5 33.3L305.0 33.2L305.5 34.2L305.7 33.4L306.0 34.3L306.5 34.6L307.0 34.4L307.5 34.7L307.7 34.0L308.0 35.8L308.5 38.0L309.0 39.4L309.3 40.6L309.5 40.4L310.0 39.7L310.5 38.6L311.0 37.3L311.5 36.0L312.0 34.7L312.3 33.4L312.5 32.6L313.0 31.0L313.5 27.9L314.0 30.5L314.5 33.7L314.6 33.4L315.0 36.8L315.5 39.8L315.9 42.6L316.0 43.0L316.5 44.6L317.0 46.1L317.2 46.6L317.5 46.8L318.0 47.0L318.5 47.2L319.0 45.8L319.5 44.4L319.6 43.9L320.0 42.8L320.5 41.2L320.9 40.0L321.0 39.9L321.5 39.1L322.0 38.6L322.5 37.4L322.9 36.7L323.0 37.0L323.5 36.7L324.0 35.6L324.5 34.9L325.0 34.8L325.2 33.7L325.5 34.6L326.0 35.6L326.5 36.5L326.8 36.7L327.0 37.6L327.5 39.6L328.0 41.1L328.1 41.3L328.5 42.9L329.0 44.7L329.5 46.6L330.0 45.2L330.5 43.8L330.8 42.6L331.0 42.4L331.5 41.0L331.7 40.0L332.0 39.2L332.5 37.8L333.0 35.4L333.5 37.8L334.0 39.0L334.3 40.0L334.5 40.6L335.0 41.1L335.5 42.2L336.0 42.6L336.5 43.8L337.0 45.0L337.4 45.9L337.5 45.9L338.0 45.7L338.5 45.4L338.7 45.3L339.0 44.5L339.5 43.0L340.0 41.3L340.5 33.4L341.0 25.1L341.3 18.2L341.5 19.6L342.0 23.6L342.5 25.8L342.6 25.5L343.0 26.0L343.5 23.4L344.0 23.5L344.4 20.9L344.5 21.1L345.0 21.4L345.5 21.6L346.0 21.3L346.5 21.3L346.6 20.2L347.0 21.4L347.5 21.9L348.0 22.3L348.5 23.0L348.6 22.2L349.0 23.6L349.5 23.3L350.0 24.4L350.5 23.9L350.9 24.2L351.0 24.9L351.5 28.4L352.0 29.7L352.3 30.8L352.5 32.1L353.0 33.4L353.5 35.7L353.8 36.0L354.0 36.9L354.5 37.2L355.0 38.5L355.5 39.2L355.8 39.3L356.0 39.3L356.5 39.3L357.0 39.1L357.5 39.3L358.0 39.1L358.5 38.9L359.0 39.7L359.5 41.0L360.0 41.7L360.4 42.0L360.5 42.4L361.0 43.5L361.5 44.2L362.0 45.3L362.4 45.9L362.5 46.0L363.0 46.2L363.5 46.3L364.0 46.5L364.5 46.6L365.0 46.8L365.1 46.8L365.5 46.9L366.0 46.9L366.5 47.0L367.0 47.0L367.5 47.1L367.7 47.1L368.0 47.1L368.5 47.0L369.0 46.9L369.5 46.8L370.0 46.7L370.3 46.6L370.5 46.6L371.0 46.4L371.5 46.2L372.0 46.0L372.3 45.9L372.5 46.0L373.0 46.0L373.5 45.9L374.0 45.9L374.5 45.9L374.9 45.9L375.0 46.0L375.5 45.8L376.0 45.8L376.5 45.7L377.0 45.6L377.5 45.5L378.0 45.4L378.2 45.3L378.5 44.9L379.0 44.2L379.5 43.2L380.0 42.4L380.2 42.0L380.5 41.7L381.0 41.4L381.5 41.0L382.0 40.3L382.5 39.5L382.9 38.9L383.0 39.4L383.5 39.6L384.0 40.6L384.5 41.2L385.0 41.8L385.5 42.0L386.0 42.7L386.5 43.2L387.0 43.6L387.5 43.9L388.0 44.5L388.5 45.1L389.0 45.5L389.5 45.9L390.0 46.7L390.5 47.5L391.0 47.5L391.5 47.5L392.0 47.5L392.5 47.5L393.0 47.5L393.5 47.5L394.0 47.5L394.5 47.5L395.0 47.5L395.5 47.5L396.0 47.5L396.5 47.5L397.0 47.5L397.5 47.5L398.0 47.5L398.5 47.5L399.0 47.5L399.5 47.5L400.0 47.5L400.5 47.5L401.0 47.5L401.5 47.5L402.0 47.5L402.5 47.5L403.0 47.5L403.5 47.5L404.0 47.5L404.5 47.5L405.0 47.5L405.5 47.5L406.0 47.5L406.5 47.5L407.0 47.5L407.5 47.5L408.0 47.5L408.5 47.5L409.0 47.5L409.5 47.5L410.0 47.5L410.5 47.5L411.0 47.5L411.5 47.5L412.0 47.5L412.5 47.5L413.0 47.5L413.5 47.5L414.0 47.5L414.5 47.5L415.0 47.5L415.5 47.5L416.0 47.5L416.5 47.5L417.0 47.5L417.5 47.5L417.8 41.3L418.0 40.4L418.5 38.2L418.8 36.7L419.0 37.9L419.5 39.1L419.8 40.0L420.0 39.4L420.5 36.2L421.0 34.1L421.1 32.7L421.5 35.3L422.0 38.0L422.4 40.0L422.5 40.6L423.0 42.8L423.5 45.1L423.7 45.9L424.0 46.3L424.5 46.7L425.0 47.2L425.5 47.2L426.0 47.2L426.5 47.2L427.0 47.2L427.5 46.7L428.0 46.3L428.3 45.9L428.5 45.5L429.0 44.6L429.5 43.6L429.9 42.6L430.0 42.7L430.5 43.3L431.0 43.6L431.5 43.9L431.6 43.9L432.0 43.8L432.5 43.7L432.9 43.3L433.0 42.6L433.5 39.2L434.0 34.7L434.5 34.5L435.0 33.8L435.5 33.2L435.6 32.1L436.0 32.4L436.5 33.2L437.0 33.3L437.5 33.5L438.0 34.0L438.2 33.4L438.5 34.3L439.0 33.8L439.5 34.5L440.0 34.4L440.2 34.0L440.5 35.7L441.0 37.9L441.5 39.5L441.8 40.6L442.0 40.7L442.5 39.8L443.0 38.3L443.5 37.3L444.0 36.5L444.5 35.0L444.8 33.4L445.0 33.3L445.5 30.3L446.0 27.9L446.5 30.5L447.0 33.7L447.1 33.4L447.5 36.8L448.0 40.1L448.4 42.6L448.5 43.0L449.0 44.5L449.5 46.0L449.7 46.6L450.0 46.7L450.5 47.0L451.0 47.2L451.5 45.8L452.0 44.4L452.1 43.9L452.5 43.0L453.0 41.2L453.4 40.0L453.5 40.0L454.0 39.4L454.5 38.4L455.0 37.9L455.4 36.7L455.5 37.1L456.0 36.5L456.5 35.7L457.0 35.4L457.5 34.6L457.7 33.7L458.0 35.0L458.5 35.4L459.0 36.8L459.3 36.7L459.5 37.6L460.0 39.8L460.5 41.1L460.6 41.3L461.0 42.9L461.5 44.8L462.0 46.6L462.5 45.1L463.0 43.7L463.3 42.6L463.5 42.1L464.0 40.6L464.2 40.0L464.5 39.1L465.0 37.6L465.5 35.4L466.0 37.7L466.5 39.5L466.8 40.0L467.0 40.4L467.5 41.2L468.0 42.0L468.5 42.6L469.0 43.9L469.5 45.0L469.9 45.9L470.0 45.9L470.5 45.7L471.0 45.5L471.2 45.3L471.5 44.6L472.0 43.0L472.5 41.3L473.0 32.7L473.5 24.7L473.8 18.2L474.0 19.4L474.5 22.7L475.0 25.0L475.1 25.5L475.5 25.8L476.0 24.2L476.5 23.1L476.9 20.9L477.0 21.3L477.5 21.0L478.0 22.4L478.5 22.2L479.0 21.6L479.1 20.2L479.5 21.9L480.0 22.0L480.5 23.2L481.0 22.1L481.1 22.2L481.5 23.5L482.0 23.1L482.5 24.6L483.0 24.4L483.4 24.2L483.5 24.7L484.0 27.4L484.5 29.8L484.8 30.8L485.0 32.1L485.5 33.8L486.0 35.4L486.3 36.0L486.5 36.5L487.0 37.7L487.5 38.5L488.0 39.1L488.3 39.3L488.5 39.7L489.0 39.4L489.5 39.6L490.0 39.5L490.5 39.5L491.0 38.9L491.5 39.9L492.0 40.7L492.5 41.5L492.9 42.0L493.0 42.2L493.5 43.5L494.0 44.2L494.5 45.2L494.9 45.9L495.0 46.0L495.5 46.2L496.0 46.3L496.5 46.5L497.0 46.7L497.5 46.8L497.6 46.8L498.0 46.9L498.5 46.9L499.0 47.0L499.5 47.0L500.0 47.1L500.2 47.1L500.5 47.1L501.0 47.0L501.5 46.9L502.0 46.8L502.5 46.7L502.8 46.6L503.0 46.5L503.5 46.4L504.0 46.2L504.5 46.0L504.8 45.9L505.0 46.0L505.5 46.0L506.0 45.9L506.5 46.0L507.0 45.9L507.4 45.9L507.5 46.0L508.0 45.9L508.5 45.7L509.0 45.7L509.5 45.6L510.0 45.5L510.5 45.4L510.7 45.3L511.0 44.8L511.5 44.0L512.0 43.2L512.5 42.5L512.7 42.0L513.0 41.8L513.5 41.4L514.0 40.9L514.5 40.2L515.0 39.4L515.4 38.9L515.5 39.3L516.0 40.2L516.5 40.7L517.0 40.9L517.5 41.5L518.0 42.0L518.5 42.6L519.0 43.2L519.5 43.7L520.0 43.9L520.5 44.4L521.0 45.0L521.5 45.4L522.0 45.9L522.5 46.7L523.0 47.5L523.5 47.5L524.0 47.5L524.5 47.5L525.0 47.5L525.5 47.5L526.0 47.5L526.5 47.5L527.0 47.5L527.5 47.5L528.0 47.5L528.5 47.5L529.0 47.5L529.5 47.5L530.0 47.5L530.5 47.5L531.0 47.5L531.5 47.5L532.0 47.5L532.5 47.5L533.0 47.5L533.5 47.5L534.0 47.5L534.5 47.5L535.0 47.5L535.5 47.5L536.0 47.5L536.5 47.5L537.0 47.5L537.5 47.5L538.0 47.5L538.5 47.5L539.0 47.5L539.5 47.5L540.0 47.5L540.5 47.5L541.0 47.5L541.5 47.5L542.0 47.5L542.5 47.5L543.0 47.5L543.5 47.5L544.0 47.5L544.5 47.5L545.0 47.5L545.5 47.5L546.0 47.5L546.5 47.5L547.0 47.5L547.5 47.5L548.0 47.5L548.5 47.5L549.0 47.5L549.5 47.5L550.0 47.5L550.3 41.3L550.5 40.6L551.0 38.4L551.3 36.7L551.5 37.4L552.0 39.3L552.3 40.0L552.5 39.2L553.0 36.4L553.5 34.0L553.6 32.7L554.0 35.4L554.5 37.9L554.9 40.0L555.0 40.7L555.5 42.7L556.0 45.2L556.2 45.9L556.5 46.2L557.0 46.7L557.5 47.2L558.0 47.2L558.5 47.2L559.0 47.2L559.5 47.2L560.0 46.7L560.5 46.3L560.8 45.9L561.0 45.5L561.5 44.5L562.0 43.5L562.4 42.6L562.5 43.0L563.0 43.2L563.5 43.4L564.0 43.9L564.1 43.9L564.5 43.8L565.0 43.5L565.4 43.3L565.5 42.6L566.0 39.1L566.5 34.7L567.0 34.6L567.5 33.2L568.0 33.2L568.1 32.1L568.5 33.0L569.0 33.4L569.5 33.6L570.0 33.8L570.5 34.0L570.7 33.4L571.0 33.6L571.5 34.6L572.0 34.1L572.5 34.3L572.7 34.0L573.0 35.7L573.5 37.7L574.0 39.6L574.3 40.6L574.5 40.7L575.0 39.7L575.5 38.9L576.0 37.3L576.5 35.8L577.0 34.9L577.3 33.4L577.5 33.4L578.0 30.9L578.5 27.9L579.0 30.9L579.5 33.2L579.6 33.4L580.0 36.6L580.5 40.1L580.9 42.6L581.0 42.9L581.5 44.6L582.0 46.0L582.2 46.6L582.5 46.8L583.0 47.0L583.5 47.2L584.0 45.8L584.5 44.3L584.6 43.9L585.0 42.8L585.5 41.2L585.9 40.0L586.0 40.2L586.5 39.3L587.0 38.6L587.5 37.6L587.9 36.7L588.0 36.8L588.5 36.0L589.0 35.6L589.5 35.3L590.0 34.3L590.2 33.7L590.5 34.6L591.0 35.9L591.5 36.4L591.8 36.7L592.0 37.8L592.5 39.7L593.0 41.0L593.1 41.3L593.5 43.0L594.0 44.8L594.5 46.6L595.0 45.1L595.5 43.6L595.8 42.6L596.0 42.1L596.5 41.0L596.7 40.0L597.0 39.3L597.5 37.7L598.0 35.4L598.5 37.2L599.0 39.2L599.3 40.0L599.5 40.7L600.0 41.2L600.5 41.9L601.0 42.6L601.5 44.0L602.0 45.0L602.4 45.9L602.5 45.9L603.0 45.6L603.5 45.4L603.7 45.3L604.0 44.4L604.5 43.1L605.0 41.3L605.5 32.8L606.0 24.4L606.3 18.2L606.5 20.8L607.0 22.2L607.5 25.0L607.6 25.5L608.0 26.0L608.5 24.4L609.0 23.7L609.4 20.9L609.5 21.9L610.0 21.6L610.5 22.0L611.0 20.9L611.5 20.3L611.6 20.2L612.0 22.3L612.5 21.5L613.0 22.8L613.5 23.9L613.6 22.2L614.0 23.9L614.5 24.3L615.0 24.3L615.5 23.9L615.9 24.2L616.0 25.7L616.5 28.4L617.0 30.5L617.3 30.8L617.5 31.6L618.0 33.8L618.5 35.3L618.8 36.0L619.0 37.1L619.5 37.5L620.0 38.1L620.5 39.3L620.8 39.3L621.0 39.6L621.5 39.8L622.0 39.4L622.5 39.5L623.0 39.3L623.5 38.9L624.0 40.1L624.5 41.0L625.0 41.6L625.4 42.0L625.5 42.4L626.0 43.2L626.5 44.2L627.0 45.2L627.4 45.9L627.5 46.0L628.0 46.2L628.5 46.3L629.0 46.5L629.5 46.6L630.0 46.8L630.1 46.8L630.5 46.9L631.0 46.9L631.5 47.0L632.0 47.0L632.5 47.1L632.7 47.1L633.0 47.0L633.5 47.0L634.0 46.9L634.5 46.8L635.0 46.7L635.3 46.6L635.5 46.5L636.0 46.4L636.5 46.2L637.0 46.1L637.3 45.9L637.5 46.0L638.0 45.9L638.5 46.0L639.0 46.0L639.5 45.9L639.9 45.9L640.0 45.9L640.5 45.8L641.0 45.7L641.5 45.7L642.0 45.7L642.5 45.5L643.0 45.4L643.2 45.3L643.5 45.0L644.0 44.0L644.5 43.4L645.0 42.6L645.2 42.0L645.5 42.0L646.0 41.1L646.5 40.7L647.0 39.9L647.5 39.6L647.9 38.9L648.0 39.6L648.5 39.8L649.0 40.4L649.5 41.1L650.0 41.7L650.5 42.0L651.0 42.7L651.5 43.0L652.0 43.6L652.5 43.9L653.0 44.6L653.5 44.9L654.0 45.5L654.5 45.9L655.0 46.7L655.5 47.5L656.0 47.5L656.5 47.5L657.0 47.5L657.5 47.5L658.0 47.5L658.5 47.5L659.0 47.5L659.5 47.5L660.0 47.5L660.5 47.5L661.0 47.5L661.5 47.5L662.0 47.5L662.5 47.5L663.0 47.5L663.5 47.5L664.0 47.5L664.5 47.5L665.0 47.5L665.5 47.5L666.0 47.5L666.5 47.5L667.0 47.5L667.5 47.5L668.0 47.5L668.5 47.5L669.0 47.5L669.5 47.5L670.0 47.5L670.5 47.5L671.0 47.5L671.5 47.5L672.0 47.5L672.5 47.5L673.0 47.5L673.5 47.5L674.0 47.5L674.5 47.5L675.0 47.5L675.5 47.5L676.0 47.5L676.5 47.5L677.0 47.5L677.5 47.5L678.0 47.5L678.5 47.5L679.0 47.5L679.5 47.5L680.0 47.5L680.5 47.5L681.0 47.5L681.5 47.5L682.0 47.5L682.5 47.5L682.8 41.3L683.0 40.4L683.5 38.3L683.8 36.7L684.0 37.7L684.5 39.2L684.8 40.0L685.0 38.9L685.5 36.2L686.0 33.5L686.1 32.7L686.5 35.7L687.0 38.2L687.4 40.0L687.5 40.5L688.0 43.0L688.5 45.2L688.7 45.9L689.0 46.3L689.5 46.7L690.0 47.2L690.5 47.2L691.0 47.2L691.5 47.2L692.0 47.2L692.5 46.7L693.0 46.3L693.3 45.9L693.5 45.6L694.0 44.5L694.5 43.4L694.9 42.6L695.0 42.9L695.5 43.1L696.0 43.7L696.5 43.9L696.6 43.9L697.0 44.0L697.0 51.0L696.6 51.2L696.5 51.1L696.0 51.9L695.5 52.9L695.0 53.5L694.9 53.8L694.5 52.8L694.0 51.5L693.5 50.3L693.3 49.9L693.0 49.4L692.5 48.7L692.0 47.9L691.5 47.9L691.0 47.9L690.5 47.9L690.0 47.9L689.5 48.9L689.0 49.7L688.7 50.5L688.5 51.1L688.0 52.3L687.5 53.9L687.4 54.5L687.0 55.9L686.5 58.1L686.1 60.4L686.0 59.2L685.5 56.9L685.0 53.9L684.8 53.2L684.5 53.3L684.0 53.7L683.8 53.8L683.5 53.2L683.0 52.4L682.8 52.5L682.5 47.5L682.0 47.5L681.5 47.5L681.0 47.5L680.5 47.5L680.0 47.5L679.5 47.5L679.0 47.5L678.5 47.5L678.0 47.5L677.5 47.5L677.0 47.5L676.5 47.5L676.0 47.5L675.5 47.5L675.0 47.5L674.5 47.5L674.0 47.5L673.5 47.5L673.0 47.5L672.5 47.5L672.0 47.5L671.5 47.5L671.0 47.5L670.5 47.5L670.0 47.5L669.5 47.5L669.0 47.5L668.5 47.5L668.0 47.5L667.5 47.5L667.0 47.5L666.5 47.5L666.0 47.5L665.5 47.5L665.0 47.5L664.5 47.5L664.0 47.5L663.5 47.5L663.0 47.5L662.5 47.5L662.0 47.5L661.5 47.5L661.0 47.5L660.5 47.5L660.0 47.5L659.5 47.5L659.0 47.5L658.5 47.5L658.0 47.5L657.5 47.5L657.0 47.5L656.5 47.5L656.0 47.5L655.5 47.5L655.0 48.3L654.5 49.2L654.0 49.6L653.5 50.1L653.0 50.6L652.5 51.2L652.0 51.6L651.5 52.0L651.0 52.4L650.5 53.2L650.0 53.7L649.5 54.2L649.0 54.5L648.5 54.7L648.0 55.2L647.9 55.8L647.5 54.8L647.0 54.5L646.5 54.0L646.0 53.2L645.5 52.6L645.2 52.5L645.0 52.0L644.5 51.6L644.0 51.3L643.5 50.7L643.2 50.5L643.0 50.3L642.5 50.2L642.0 50.2L641.5 50.1L641.0 50.1L640.5 50.0L640.0 49.8L639.9 49.9L639.5 49.7L639.0 49.6L638.5 49.4L638.0 49.3L637.5 49.2L637.3 49.2L637.0 49.0L636.5 48.9L636.0 48.7L635.5 48.5L635.3 48.5L635.0 48.4L634.5 48.3L634.0 48.2L633.5 48.1L633.0 47.9L632.7 47.9L632.5 47.9L632.0 47.9L631.5 47.9L631.0 47.9L630.5 47.9L630.1 47.9L630.0 47.9L629.5 48.2L629.0 48.4L628.5 48.6L628.0 48.9L627.5 49.1L627.4 49.2L627.0 49.4L626.5 49.7L626.0 50.0L625.5 50.4L625.4 50.5L625.0 50.8L624.5 51.3L624.0 51.9L623.5 52.5L623.0 52.6L622.5 52.9L622.0 53.0L621.5 53.1L621.0 53.5L620.8 53.8L620.5 53.8L620.0 54.3L619.5 54.9L619.0 55.2L618.8 55.8L618.5 56.1L618.0 57.3L617.5 58.0L617.3 59.1L617.0 58.7L616.5 60.2L616.0 60.7L615.9 61.1L615.5 60.9L615.0 61.7L614.5 61.6L614.0 62.3L613.6 62.7L613.5 61.8L613.0 62.3L612.5 63.5L612.0 63.3L611.6 64.4L611.5 64.3L611.0 63.9L610.5 65.0L610.0 65.6L609.5 65.9L609.4 66.4L609.0 66.0L608.5 65.3L608.0 65.1L607.6 65.7L607.5 64.7L607.0 64.7L606.5 64.1L606.3 64.4L606.0 63.0L605.5 61.8L605.0 61.1L604.5 56.4L604.0 52.7L603.7 50.5L603.5 50.4L603.0 50.1L602.5 49.9L602.4 49.9L602.0 50.3L601.5 51.0L601.0 51.9L600.5 52.2L600.0 52.8L599.5 53.3L599.3 53.8L599.0 54.4L598.5 54.9L598.0 56.5L597.5 55.5L597.0 55.1L596.7 55.1L596.5 54.4L596.0 53.4L595.8 53.2L595.5 52.0L595.0 50.2L594.5 48.5L594.0 50.5L593.5 52.5L593.1 54.5L593.0 54.9L592.5 56.5L592.0 58.7L591.8 59.8L591.5 59.5L591.0 60.4L590.5 61.0L590.2 62.4L590.0 61.9L589.5 60.5L589.0 60.2L588.5 59.3L588.0 58.5L587.9 58.4L587.5 57.2L587.0 56.2L586.5 55.4L586.0 54.2L585.9 54.5L585.5 53.0L585.0 51.5L584.6 50.5L584.5 50.1L584.0 49.0L583.5 47.9L583.0 48.1L582.5 48.3L582.2 48.5L582.0 49.2L581.5 51.0L581.0 52.8L580.9 53.2L580.5 55.8L580.0 60.0L579.6 63.7L579.5 63.5L579.0 67.4L578.5 71.0L578.0 65.0L577.5 59.8L577.3 58.4L577.0 57.8L576.5 57.1L576.0 57.1L575.5 57.3L575.0 57.2L574.5 57.7L574.3 58.4L574.0 59.1L573.5 59.9L573.0 62.0L572.7 63.1L572.5 62.8L572.0 63.4L571.5 63.9L571.0 64.2L570.7 65.0L570.5 63.9L570.0 64.3L569.5 65.5L569.0 64.9L568.5 65.4L568.1 66.4L568.0 65.9L567.5 64.2L567.0 62.0L566.5 61.1L566.0 56.1L565.5 51.3L565.4 50.5L565.0 50.7L564.5 50.9L564.1 51.2L564.0 51.3L563.5 52.0L563.0 52.6L562.5 53.4L562.4 53.8L562.0 52.5L561.5 51.5L561.0 50.2L560.8 49.9L560.5 49.3L560.0 48.6L559.5 47.9L559.0 47.9L558.5 47.9L558.0 47.9L557.5 47.9L557.0 48.9L556.5 49.8L556.2 50.5L556.0 50.9L555.5 52.5L555.0 54.0L554.9 54.5L554.5 56.1L554.0 58.0L553.6 60.4L553.5 59.4L553.0 56.5L552.5 54.0L552.3 53.2L552.0 53.1L551.5 53.6L551.3 53.8L551.0 53.2L550.5 52.6L550.3 52.5L550.0 47.5L549.5 47.5L549.0 47.5L548.5 47.5L548.0 47.5L547.5 47.5L547.0 47.5L546.5 47.5L546.0 47.5L545.5 47.5L545.0 47.5L544.5 47.5L544.0 47.5L543.5 47.5L543.0 47.5L542.5 47.5L542.0 47.5L541.5 47.5L541.0 47.5L540.5 47.5L540.0 47.5L539.5 47.5L539.0 47.5L538.5 47.5L538.0 47.5L537.5 47.5L537.0 47.5L536.5 47.5L536.0 47.5L535.5 47.5L535.0 47.5L534.5 47.5L534.0 47.5L533.5 47.5L533.0 47.5L532.5 47.5L532.0 47.5L531.5 47.5L531.0 47.5L530.5 47.5L530.0 47.5L529.5 47.5L529.0 47.5L528.5 47.5L528.0 47.5L527.5 47.5L527.0 47.5L526.5 47.5L526.0 47.5L525.5 47.5L525.0 47.5L524.5 47.5L524.0 47.5L523.5 47.5L523.0 47.5L522.5 48.3L522.0 49.2L521.5 49.6L521.0 50.2L520.5 50.7L520.0 51.2L519.5 51.4L519.0 52.2L518.5 52.4L518.0 53.2L517.5 53.5L517.0 53.9L516.5 54.4L516.0 55.1L515.5 55.5L515.4 55.8L515.0 55.0L514.5 54.5L514.0 53.8L513.5 53.3L513.0 52.6L512.7 52.5L512.5 52.0L512.0 51.6L511.5 51.1L511.0 50.8L510.7 50.5L510.5 50.3L510.0 50.2L509.5 50.1L509.0 50.2L508.5 50.1L508.0 49.8L507.5 49.8L507.4 49.9L507.0 49.7L506.5 49.6L506.0 49.4L505.5 49.3L505.0 49.2L504.8 49.2L504.5 49.0L504.0 48.9L503.5 48.7L503.0 48.6L502.8 48.5L502.5 48.4L502.0 48.3L501.5 48.2L501.0 48.0L500.5 48.0L500.2 47.9L500.0 47.9L499.5 47.9L499.0 47.9L498.5 47.9L498.0 47.9L497.6 47.9L497.5 47.9L497.0 48.2L496.5 48.4L496.0 48.6L495.5 48.9L495.0 49.1L494.9 49.2L494.5 49.4L494.0 49.7L493.5 50.0L493.0 50.4L492.9 50.5L492.5 50.9L492.0 51.4L491.5 51.8L491.0 52.5L490.5 52.5L490.0 52.7L489.5 53.1L489.0 53.3L488.5 53.6L488.3 53.8L488.0 53.7L487.5 54.5L487.0 54.9L486.5 55.4L486.3 55.8L486.0 56.1L485.5 57.1L485.0 58.6L484.8 59.1L484.5 59.4L484.0 60.2L483.5 60.1L483.4 61.1L483.0 61.4L482.5 61.1L482.0 61.7L481.5 61.7L481.1 62.7L481.0 62.2L480.5 63.1L480.0 63.1L479.5 63.8L479.1 64.4L479.0 64.4L478.5 64.1L478.0 65.3L477.5 65.7L477.0 65.9L476.9 66.4L476.5 65.9L476.0 65.8L475.5 64.8L475.1 65.7L475.0 64.8L474.5 65.0L474.0 64.1L473.8 64.4L473.5 63.1L473.0 62.2L472.5 61.1L472.0 56.7L471.5 52.7L471.2 50.5L471.0 50.2L470.5 50.0L470.0 49.9L469.9 49.9L469.5 50.4L469.0 51.1L468.5 51.9L468.0 52.2L467.5 53.0L467.0 53.3L466.8 53.8L466.5 54.2L466.0 54.9L465.5 56.5L465.0 55.4L464.5 55.3L464.2 55.1L464.0 54.3L463.5 53.5L463.3 53.2L463.0 51.8L462.5 50.1L462.0 48.5L461.5 50.6L461.0 52.7L460.6 54.5L460.5 54.7L460.0 56.3L459.5 58.4L459.3 59.8L459.0 59.9L458.5 60.5L458.0 61.3L457.7 62.4L457.5 61.9L457.0 60.7L456.5 59.7L456.0 58.8L455.5 58.5L455.4 58.4L455.0 56.9L454.5 56.5L454.0 55.4L453.5 54.5L453.4 54.5L453.0 53.2L452.5 51.6L452.1 50.5L452.0 50.1L451.5 49.0L451.0 47.9L450.5 48.1L450.0 48.4L449.7 48.5L449.5 49.2L449.0 51.0L448.5 52.7L448.4 53.2L448.0 56.4L447.5 60.1L447.1 63.7L447.0 63.3L446.5 66.4L446.0 71.0L445.5 65.5L445.0 60.1L444.8 58.4L444.5 57.4L444.0 57.0L443.5 57.1L443.0 57.0L442.5 57.5L442.0 57.8L441.8 58.4L441.5 58.7L441.0 60.1L440.5 62.1L440.2 63.1L440.0 62.3L439.5 63.6L439.0 63.2L438.5 64.1L438.2 65.0L438.0 64.3L437.5 64.7L437.0 65.2L436.5 64.7L436.0 65.1L435.6 66.4L435.5 65.3L435.0 63.6L434.5 62.5L434.0 61.1L433.5 56.1L433.0 51.4L432.9 50.5L432.5 50.6L432.0 50.8L431.6 51.2L431.5 51.1L431.0 52.0L430.5 52.8L430.0 53.6L429.9 53.8L429.5 52.6L429.0 51.6L428.5 50.3L428.3 49.9L428.0 49.3L427.5 48.6L427.0 47.9L426.5 47.9L426.0 47.9L425.5 47.9L425.0 47.9L424.5 48.9L424.0 49.8L423.7 50.5L423.5 50.9L423.0 52.5L422.5 53.7L422.4 54.5L422.0 55.8L421.5 58.5L421.1 60.4L421.0 59.5L420.5 56.6L420.0 54.1L419.8 53.2L419.5 53.2L419.0 53.2L418.8 53.8L418.5 53.1L418.0 52.5L417.8 52.5L417.5 47.5L417.0 47.5L416.5 47.5L416.0 47.5L415.5 47.5L415.0 47.5L414.5 47.5L414.0 47.5L413.5 47.5L413.0 47.5L412.5 47.5L412.0 47.5L411.5 47.5L411.0 47.5L410.5 47.5L410.0 47.5L409.5 47.5L409.0 47.5L408.5 47.5L408.0 47.5L407.5 47.5L407.0 47.5L406.5 47.5L406.0 47.5L405.5 47.5L405.0 47.5L404.5 47.5L404.0 47.5L403.5 47.5L403.0 47.5L402.5 47.5L402.0 47.5L401.5 47.5L401.0 47.5L400.5 47.5L400.0 47.5L399.5 47.5L399.0 47.5L398.5 47.5L398.0 47.5L397.5 47.5L397.0 47.5L396.5 47.5L396.0 47.5L395.5 47.5L395.0 47.5L394.5 47.5L394.0 47.5L393.5 47.5L393.0 47.5L392.5 47.5L392.0 47.5L391.5 47.5L391.0 47.5L390.5 47.5L390.0 48.3L389.5 49.2L389.0 49.6L388.5 50.0L388.0 50.6L387.5 51.2L387.0 51.5L386.5 52.1L386.0 52.4L385.5 53.2L385.0 53.5L384.5 54.1L384.0 54.7L383.5 55.2L383.0 55.2L382.9 55.8L382.5 55.1L382.0 54.6L381.5 53.7L381.0 53.4L380.5 52.8L380.2 52.5L380.0 52.2L379.5 51.7L379.0 51.1L378.5 50.6L378.2 50.5L378.0 50.3L377.5 50.3L377.0 50.2L376.5 50.0L376.0 49.9L375.5 49.9L375.0 49.8L374.9 49.9L374.5 49.6L374.0 49.5L373.5 49.4L373.0 49.3L372.5 49.2L372.3 49.2L372.0 49.1L371.5 48.9L371.0 48.7L370.5 48.6L370.3 48.5L370.0 48.4L369.5 48.3L369.0 48.2L368.5 48.0L368.0 48.0L367.7 47.9L367.5 47.9L367.0 47.9L366.5 47.9L366.0 47.9L365.5 47.9L365.1 47.9L365.0 47.9L364.5 48.2L364.0 48.4L363.5 48.7L363.0 48.9L362.5 49.1L362.4 49.2L362.0 49.4L361.5 49.7L361.0 50.0L360.5 50.4L360.4 50.5L360.0 50.8L359.5 51.4L359.0 51.9L358.5 52.5L358.0 52.7L357.5 52.9L357.0 53.0L356.5 53.3L356.0 53.5L355.8 53.8L355.5 53.9L355.0 54.1L354.5 55.1L354.0 55.2L353.8 55.8L353.5 56.3L353.0 57.4L352.5 57.9L352.3 59.1L352.0 59.2L351.5 60.0L351.0 60.3L350.9 61.1L350.5 60.5L350.0 61.3L349.5 61.7L349.0 61.6L348.6 62.7L348.5 61.8L348.0 63.0L347.5 63.2L347.0 63.1L346.6 64.4L346.5 63.5L346.0 64.9L345.5 64.3L345.0 64.9L344.5 65.0L344.4 66.4L344.0 65.2L343.5 65.8L343.0 65.3L342.6 65.7L342.5 65.0L342.0 64.8L341.5 64.6L341.3 64.4L341.0 62.5L340.5 61.4L340.0 61.1L339.5 56.6L339.0 52.8L338.7 50.5L338.5 50.2L338.0 50.2L337.5 49.8L337.4 49.9L337.0 50.3L336.5 51.1L336.0 51.9L335.5 52.3L335.0 53.0L334.5 53.3L334.3 53.8L334.0 54.3L333.5 55.3L333.0 56.5L332.5 55.4L332.0 55.2L331.7 55.1L331.5 54.5L331.0 53.5L330.8 53.2L330.5 51.9L330.0 50.2L329.5 48.5L329.0 50.5L328.5 52.6L328.1 54.5L328.0 54.6L327.5 56.7L327.0 58.6L326.8 59.8L326.5 60.2L326.0 60.8L325.5 61.3L325.2 62.4L325.0 62.0L324.5 60.9L324.0 60.1L323.5 59.1L323.0 58.5L322.9 58.4L322.5 57.3L322.0 56.4L321.5 55.1L321.0 54.3L320.9 54.5L320.5 53.1L320.0 51.6L319.6 50.5L319.5 50.1L319.0 49.0L318.5 47.9L318.0 48.1L317.5 48.4L317.2 48.5L317.0 49.2L316.5 50.8L316.0 52.7L315.9 53.2L315.5 55.9L315.0 60.0L314.6 63.7L314.5 64.0L314.0 66.8L313.5 71.0L313.0 65.2L312.5 59.7L312.3 58.4L312.0 57.4L311.5 57.1L311.0 57.1L310.5 57.2L310.0 57.7L309.5 57.9L309.3 58.4L309.0 59.1L308.5 60.0L308.0 61.6L307.7 63.1L307.5 62.9L307.0 63.4L306.5 63.6L306.0 63.7L305.7 65.0L305.5 64.9L305.0 64.5L304.5 64.9L304.0 64.8L303.5 66.2L303.1 66.4L303.0 65.3L302.5 63.7L302.0 61.8L301.5 61.1L301.0 56.2L300.5 51.3L300.4 50.5L300.0 50.5L299.5 50.9L299.1 51.2L299.0 51.2L298.5 51.9L298.0 52.6L297.5 53.3L297.4 53.8L297.0 52.5L296.5 51.5L296.0 50.2L295.8 49.9L295.5 49.3L295.0 48.6L294.5 47.9L294.0 47.9L293.5 47.9L293.0 47.9L292.5 47.9L292.0 48.8L291.5 49.7L291.2 50.5L291.0 50.9L290.5 52.4L290.0 53.9L289.9 54.5L289.5 56.1L289.0 58.3L288.6 60.4L288.5 59.3L288.0 56.9L287.5 54.2L287.3 53.2L287.0 53.3L286.5 53.3L286.3 53.8L286.0 53.2L285.5 52.6L285.3 52.5L285.0 47.5L284.5 47.5L284.0 47.5L283.5 47.5L283.0 47.5L282.5 47.5L282.0 47.5L281.5 47.5L281.0 47.5L280.5 47.5L280.0 47.5L279.5 47.5L279.0 47.5L278.5 47.5L278.0 47.5L277.5 47.5L277.0 47.5L276.5 47.5L276.0 47.5L275.5 47.5L275.0 47.5L274.5 47.5L274.0 47.5L273.5 47.5L273.0 47.5L272.5 47.5L272.0 47.5L271.5 47.5L271.0 47.5L270.5 47.5L270.0 47.5L269.5 47.5L269.0 47.5L268.5 47.5L268.0 47.5L267.5 47.5L267.0 47.5L266.5 47.5L266.0 47.5L265.5 47.5L265.0 47.5L264.5 47.5L264.0 47.5L263.5 47.5L263.0 47.5L262.5 47.5L262.0 47.5L261.5 47.5L261.0 47.5L260.5 47.5L260.0 47.5L259.5 47.5L259.0 47.5L258.5 47.5L258.0 47.5L257.5 48.3L257.0 49.2L256.5 49.5L256.0 50.1L255.5 50.6L255.0 51.2L254.5 51.5L254.0 52.0L253.5 52.7L253.0 53.2L252.5 53.6L252.0 54.1L251.5 54.5L251.0 54.7L250.5 55.5L250.4 55.8L250.0 55.2L249.5 54.2L249.0 53.9L248.5 53.3L248.0 52.8L247.7 52.5L247.5 52.1L247.0 51.6L246.5 51.2L246.0 50.6L245.7 50.5L245.5 50.4L245.0 50.2L244.5 50.2L244.0 50.0L243.5 50.0L243.0 49.9L242.5 49.9L242.4 49.9L242.0 49.6L241.5 49.6L241.0 49.4L240.5 49.3L240.0 49.2L239.8 49.2L239.5 49.1L239.0 48.8L238.5 48.7L238.0 48.5L237.8 48.5L237.5 48.4L237.0 48.3L236.5 48.2L236.0 48.1L235.5 48.0L235.2 47.9L235.0 47.9L234.5 47.9L234.0 47.9L233.5 47.9L233.0 47.9L232.6 47.9L232.5 47.9L232.0 48.2L231.5 48.4L231.0 48.6L230.5 48.8L230.0 49.1L229.9 49.2L229.5 49.4L229.0 49.8L228.5 50.0L228.0 50.4L227.9 50.5L227.5 50.8L227.0 51.3L226.5 51.7L226.0 52.5L225.5 52.5L225.0 52.8L224.5 52.9L224.0 53.1L223.5 53.6L223.3 53.8L223.0 53.7L222.5 54.6L222.0 54.9L221.5 55.4L221.3 55.8L221.0 55.9L220.5 57.2L220.0 58.2L219.8 59.1L219.5 58.7L219.0 60.1L218.5 60.7L218.4 61.1L218.0 61.0L217.5 61.5L217.0 61.4L216.5 62.0L216.1 62.7L216.0 61.9L215.5 62.6L215.0 62.8L214.5 63.8L214.1 64.4L214.0 64.1L213.5 64.2L213.0 64.3L212.5 65.5L212.0 65.8L211.9 66.4L211.5 65.9L211.0 65.9L210.5 65.2L210.1 65.7L210.0 64.7L209.5 64.0L209.0 63.7L208.8 64.4L208.5 62.8L208.0 62.0L207.5 61.1L207.0 56.5L206.5 52.7L206.2 50.5L206.0 50.3L205.5 50.1L205.0 49.9L204.9 49.9L204.5 50.4L204.0 51.0L203.5 51.9L203.0 52.4L202.5 52.9L202.0 53.2L201.8 53.8L201.5 54.3L201.0 55.3L200.5 56.5L200.0 55.5L199.5 55.2L199.2 55.1L199.0 54.5L198.5 53.4L198.3 53.2L198.0 51.8L197.5 50.2L197.0 48.5L196.5 50.6L196.0 52.8L195.6 54.5L195.5 54.5L195.0 56.6L194.5 58.3L194.3 59.8L194.0 59.6L193.5 60.2L193.0 60.9L192.7 62.4L192.5 61.9L192.0 60.5L191.5 59.5L191.0 59.4L190.5 57.9L190.4 58.4L190.0 57.4L189.5 56.5L189.0 55.2L188.5 54.3L188.4 54.5L188.0 53.2L187.5 51.6L187.1 50.5L187.0 50.2L186.5 49.1L186.0 47.9L185.5 48.1L185.0 48.3L184.7 48.5L184.5 49.2L184.0 51.0L183.5 52.7L183.4 53.2L183.0 56.2L182.5 59.8L182.1 63.7L182.0 63.4L181.5 67.2L181.0 71.0L180.5 65.3L180.0 59.7L179.8 58.4L179.5 57.9L179.0 57.4L178.5 57.1L178.0 56.9L177.5 57.6L177.0 57.7L176.8 58.4L176.5 58.9L176.0 60.3L175.5 61.7L175.2 63.1L175.0 62.6L174.5 62.9L174.0 64.1L173.5 64.6L173.2 65.0L173.0 64.9L172.5 64.5L172.0 64.8L171.5 65.3L171.0 65.5L170.6 66.4L170.5 65.0L170.0 63.4L169.5 62.0L169.0 61.1L168.5 55.8L168.0 51.4L167.9 50.5L167.5 50.6L167.0 50.7L166.6 51.2L166.5 51.3L166.0 52.0L165.5 52.5L165.0 53.3L164.9 53.8L164.5 52.8L164.0 51.4L163.5 50.3L163.3 49.9L163.0 49.3L162.5 48.6L162.0 47.9L161.5 47.9L161.0 47.9L160.5 47.9L160.0 47.9L159.5 48.9L159.0 49.9L158.7 50.5L158.5 51.1L158.0 52.3L157.5 54.0L157.4 54.5L157.0 56.0L156.5 58.3L156.1 60.4L156.0 59.4L155.5 56.6L155.0 53.9L154.8 53.2L154.5 53.3L154.0 53.4L153.8 53.8L153.5 53.3L153.0 52.5L152.8 52.5L152.5 47.5L152.0 47.5L151.5 47.5L151.0 47.5L150.5 47.5L150.0 47.5L149.5 47.5L149.0 47.5L148.5 47.5L148.0 47.5L147.5 47.5L147.0 47.5L146.5 47.5L146.0 47.5L145.5 47.5L145.0 47.5L144.5 47.5L144.0 47.5L143.5 47.5L143.0 47.5L142.5 47.5L142.0 47.5L141.5 47.5L141.0 47.5L140.5 47.5L140.0 47.5L139.5 47.5L139.0 47.5L138.5 47.5L138.0 47.5L137.5 47.5L137.0 47.5L136.5 47.5L136.0 47.5L135.5 47.5L135.0 47.5L134.5 47.5L134.0 47.5L133.5 47.5L133.0 47.5L132.5 47.5L132.0 47.5L131.5 47.5L131.0 47.5L130.5 47.5L130.0 47.5L129.5 47.5L129.0 47.5L128.5 47.5L128.0 47.5L127.5 47.5L127.0 47.5L126.5 47.5L126.0 47.5L125.5 47.5L125.0 48.3L124.5 49.2L124.0 49.7L123.5 50.1L123.0 50.6L122.5 51.2L122.0 51.5L121.5 52.0L121.0 52.5L120.5 53.2L120.0 53.5L119.5 53.8L119.0 54.7L118.5 54.8L118.0 55.6L117.9 55.8L117.5 54.8L117.0 54.4L116.5 54.1L116.0 53.3L115.5 52.6L115.2 52.5L115.0 52.0L114.5 51.6L114.0 51.2L113.5 50.7L113.2 50.5L113.0 50.4L112.5 50.3L112.0 50.1L111.5 50.1L111.0 50.1L110.5 49.9L110.0 49.8L109.9 49.9L109.5 49.8L109.0 49.6L108.5 49.4L108.0 49.4L107.5 49.2L107.3 49.2L107.0 49.0L106.5 48.9L106.0 48.7L105.5 48.5L105.3 48.5L105.0 48.4L104.5 48.3L104.0 48.2L103.5 48.1L103.0 47.9L102.7 47.9L102.5 47.9L102.0 47.9L101.5 47.9L101.0 47.9L100.5 47.9L100.1 47.9L100.0 47.9L99.5 48.2L99.0 48.4L98.5 48.6L98.0 48.9L97.5 49.1L97.4 49.2L97.0 49.4L96.5 49.8L96.0 50.0L95.5 50.3L95.4 50.5L95.0 50.8L94.5 51.3L94.0 51.9L93.5 52.5L93.0 52.5L92.5 52.8L92.0 53.2L91.5 53.4L91.0 53.5L90.8 53.8L90.5 54.1L90.0 54.3L89.5 54.9L89.0 55.4L88.8 55.8L88.5 56.2L88.0 57.1L87.5 58.6L87.3 59.1L87.0 58.9L86.5 59.4L86.0 60.4L85.9 61.1L85.5 60.5L85.0 60.9L84.5 61.8L84.0 62.0L83.6 62.7L83.5 62.7L83.0 62.3L82.5 63.5L82.0 63.0L81.6 64.4L81.5 64.1L81.0 64.3L80.5 65.1L80.0 65.1L79.5 65.6L79.4 66.4L79.0 65.3L78.5 65.0L78.0 64.6L77.6 65.7L77.5 65.3L77.0 64.9L76.5 63.9L76.3 64.4L76.0 63.1L75.5 62.0L75.0 61.1L74.5 56.6L74.0 52.7L73.7 50.5L73.5 50.2L73.0 50.1L72.5 49.9L72.4 49.9L72.0 50.3L71.5 51.1L71.0 51.9L70.5 52.1L70.0 52.8L69.5 53.2L69.3 53.8L69.0 54.4L68.5 55.4L68.0 56.5L67.5 55.8L67.0 55.4L66.7 55.1L66.5 54.2L66.0 53.4L65.8 53.2L65.5 51.8L65.0 50.2L64.5 48.5L64.0 50.5L63.5 52.5L63.1 54.5L63.0 54.5L62.5 56.5L62.0 58.6L61.8 59.8L61.5 59.4L61.0 60.6L60.5 61.7L60.2 62.4L60.0 61.3L59.5 60.5L59.0 59.9L58.5 59.3L58.0 58.3L57.9 58.4L57.5 57.3L57.0 56.6L56.5 55.4L56.0 54.3L55.9 54.5L55.5 53.2L55.0 51.4L54.6 50.5L54.5 50.2L54.0 49.0L53.5 47.9L53.0 48.1L52.5 48.3L52.2 48.5L52.0 49.1L51.5 50.9L51.0 52.8L50.9 53.2L50.5 56.1L50.0 60.2L49.6 63.7L49.5 64.0L49.0 67.6L48.5 71.0L48.0 64.9L47.5 59.9L47.3 58.4L47.0 57.5L46.5 57.3L46.0 57.1L45.5 56.9L45.0 57.2L44.5 58.2L44.3 58.4L44.0 58.7L43.5 60.6L43.0 62.0L42.7 63.1L42.5 62.9L42.0 63.6L41.5 63.2L41.0 64.2L40.7 65.0L40.5 65.0L40.0 65.2L39.5 64.4L39.0 65.6L38.5 65.1L38.1 66.4L38.0 65.3L37.5 63.3L37.0 62.7L36.5 61.1L36.0 56.1L35.5 51.4L35.4 50.5L35.0 50.6L34.5 50.8L34.1 51.2L34.0 51.1L33.5 52.0L33.0 52.6L32.5 53.2L32.4 53.8L32.0 52.6L31.5 51.3L31.0 50.3L30.8 49.9L30.5 49.4L30.0 48.6L29.5 47.9L29.0 47.9L28.5 47.9L28.0 47.9L27.5 47.9L27.0 48.9L26.5 49.9L26.2 50.5L26.0 51.0L25.5 52.4L25.0 53.7L24.9 54.5L24.5 55.7L24.0 58.1L23.6 60.4L23.5 59.5L23.0 56.5L22.5 54.3L22.3 53.2L22.0 53.1L21.5 53.3L21.3 53.8L21.0 53.3L20.5 52.5L20.3 52.5L20.0 47.5L19.5 47.5L19.0 47.5L18.5 47.5L18.0 47.5L17.5 47.5L17.0 47.5L16.5 47.5L16.0 47.5L15.5 47.5L15.0 47.5L14.5 47.5L14.0 47.5L13.5 47.5L13.0 47.5L12.5 47.5L12.0 47.5L11.5 47.5L11.0 47.5L10.5 47.5L10.0 47.5L9.5 47.5L9.0 47.5L8.5 47.5L8.0 47.5L7.5 47.5L7.0 47.5L6.5 47.5L6.0 47.5L5.5 47.5L5.0 47.5L4.5 47.5L4.0 47.5L3.5 47.5L3.0 47.5L2.5 47.5L2.0 47.5Z" fill="#0080ff" stroke="#000" stroke-width="1" stroke-linejoin="miter"/></svg>
<div class="panel" style="left:22px;top:316px;width:189px;height:95px;"></div>
<span class="t " style="left:26.6px;top:322.72px;font-size:12.5px;font-weight:bold;color:#000;letter-spacing:-0.094px;">Track</span>
<span class="t " style="left:64.6px;top:322.72px;font-size:12.5px;font-weight:bold;color:#000;">3</span>
<div class="inp" style="left:80px;top:321px;width:125px;height:17px;"></div>
<span class="t " style="left:83.0px;top:324.04px;font-size:12px;color:#000;letter-spacing:-0.819px;">Drum Loop</span>
<div class="btn" style="left:48px;top:342px;width:36px;height:17px;"></div>
<span class="t " style="left:56.7px;top:345.04px;font-size:12px;color:#000;letter-spacing:-1.133px;">Arm</span>
<div class="btn" style="left:88px;top:342px;width:36px;height:17px;"></div>
<span class="t " style="left:93.9px;top:345.04px;font-size:12px;color:#000;letter-spacing:-0.622px;">Mute</span>
<div class="btn" style="left:128px;top:342px;width:36px;height:17px;"></div>
<span class="t " style="left:135.4px;top:345.04px;font-size:12px;color:#000;letter-spacing:-0.708px;">Solo</span>
<div class="btn" style="left:168px;top:342px;width:36px;height:17px;"></div>
<span class="t " style="left:172.4px;top:345.04px;font-size:12px;color:#000;letter-spacing:-0.832px;">Props</span>
<svg style="left:27px;top:341px" width="18" height="18" viewBox="0 0 18 18" fill="none"><circle cx="8.6" cy="8.8" r="3.2" fill="#fff"/><path d="M3.2 8.2A5.4 5.4 0 0 1 12.6 4.9" stroke="#2f7fe8" stroke-width="2.7"/><path d="M15.6 3.2L15.2 9.6L9.9 6.6Z" fill="#3a8bf0"/><path d="M14 9.4A5.4 5.4 0 0 1 4.6 12.7" stroke="#2a6fdc" stroke-width="2.7"/><path d="M1.6 14.4L2 8L7.3 11Z" fill="#2a6fdc"/></svg>
<svg class="wf" style="left:215px;top:316px" width="699" height="96" viewBox="0 0 699 96" shape-rendering="crispEdges"><path d="M-0.5 96V-0.5H699" stroke="#fff" stroke-width="1" fill="none"/><rect x="1" y="1" width="697" height="94" fill="#b5b5b5" stroke="#000" stroke-width="2"/><rect x="696" y="2" width="1" height="92" fill="#000"/><path d="M2 47.5H697" stroke="#000" stroke-width="1" fill="none"/><path d="M2.0 12.5L3.0 39.6L3.3 29.7L4.0 41.8L5.0 34.6L6.0 39.8L6.6 37.9L7.0 39.4L8.0 45.7L8.2 42.1L9.0 45.3L10.0 46.0L10.7 44.5L11.0 44.5L12.0 44.2L13.0 44.1L14.0 43.7L15.0 44.8L16.0 46.5L16.5 45.9L17.0 46.0L18.0 46.1L19.0 46.2L19.8 46.2L20.0 46.5L21.0 46.9L22.0 46.7L23.0 46.8L24.0 46.9L25.0 47.1L26.0 47.3L26.4 47.2L27.0 46.9L28.0 46.5L28.4 46.3L29.0 46.8L30.0 47.0L30.5 47.2L31.0 47.4L32.0 47.4L33.0 47.3L34.0 47.2L35.0 47.2L35.4 47.2L36.0 46.6L37.0 45.4L38.0 45.1L38.7 44.5L39.0 44.8L40.0 46.1L40.4 46.0L41.0 46.8L42.0 46.4L42.9 46.5L43.0 46.5L44.0 46.9L45.0 47.3L45.3 47.2L46.0 47.4L47.0 47.3L47.8 47.2L48.0 46.2L48.6 42.9L49.0 45.0L50.0 41.5L50.3 35.5L51.0 40.4L51.9 40.4L52.0 41.1L53.0 43.1L53.6 44.5L54.0 45.9L55.0 45.7L56.0 46.5L57.0 46.8L58.0 46.9L58.5 47.0L59.0 47.0L60.0 46.4L60.2 46.2L61.0 42.2L61.3 31.3L62.0 40.3L62.6 20.6L63.0 22.0L64.0 28.1L64.3 21.5L65.0 21.8L65.6 20.6L66.0 24.9L67.0 31.6L67.2 31.3L68.0 38.9L68.4 30.5L69.0 33.2L70.0 37.1L71.0 38.7L72.0 39.3L72.5 39.6L73.0 39.9L74.0 40.2L75.0 40.4L76.0 41.6L77.0 42.2L77.5 42.1L78.0 42.7L79.0 43.8L80.0 44.4L80.8 43.7L81.0 44.1L82.0 44.3L83.0 44.8L84.0 44.9L85.0 45.3L86.0 45.6L87.0 45.9L87.4 45.9L88.0 46.0L89.0 46.2L90.0 46.5L90.7 46.5L91.0 46.6L92.0 47.1L92.3 47.2L93.0 47.2L94.0 47.2L95.0 47.4L96.0 47.2L96.4 47.2L97.0 39.4L97.6 31.3L98.0 27.2L98.6 17.3L99.0 20.0L99.9 24.8L100.0 35.7L101.0 34.0L101.4 31.3L102.0 34.1L103.0 35.5L104.0 39.5L104.7 39.6L105.0 40.6L106.0 41.7L106.3 42.1L107.0 42.8L108.0 45.2L108.8 44.5L109.0 45.5L110.0 45.3L110.4 45.4L111.0 46.0L112.0 43.7L113.0 45.7L113.7 47.0L114.0 47.0L115.0 47.0L116.0 47.2L117.0 47.2L118.0 47.1L119.0 47.3L120.0 47.1L121.0 47.2L122.0 47.2L123.0 47.2L124.0 47.2L124.8 47.2L125.0 47.1L126.0 46.2L127.0 46.8L127.7 47.2L128.0 47.2L129.0 47.2L130.0 47.4L131.0 47.3L132.0 47.2L133.0 47.2L133.8 47.2L134.0 47.3L135.0 45.5L135.5 44.5L136.0 44.7L137.0 45.2L138.0 45.7L139.0 46.7L140.0 46.4L140.4 46.5L141.0 46.8L142.0 47.2L143.0 47.4L144.0 47.2L145.0 47.2L145.4 47.2L146.0 44.9L146.5 42.9L147.0 44.4L148.0 38.7L148.2 37.9L149.0 41.0L149.8 42.9L150.0 44.0L151.0 44.5L152.0 45.4L153.0 46.3L154.0 47.0L154.1 47.0L155.0 47.3L156.0 47.1L157.0 47.3L157.4 47.2L158.0 40.4L158.6 28.1L159.0 27.3L160.0 24.3L160.2 21.5L161.0 28.4L161.9 23.1L162.0 27.2L163.0 20.6L164.0 28.1L164.7 29.7L165.0 38.7L166.0 34.6L166.8 37.1L167.0 37.6L168.0 44.4L169.0 40.5L169.3 40.4L170.0 36.0L170.9 28.1L171.0 28.4L172.0 27.4L172.6 16.5L173.0 20.7L174.0 26.7L174.2 26.5L175.0 30.2L175.5 17.3L176.0 21.2L177.0 27.5L177.2 28.1L178.0 34.6L179.0 34.4L179.2 33.8L180.0 42.9L181.0 37.4L181.6 37.9L182.0 38.5L183.0 44.0L184.0 40.4L184.1 40.4L185.0 41.2L186.0 42.3L186.6 42.6L187.0 42.8L188.0 43.4L189.0 43.7L190.0 44.8L191.0 46.1L191.5 44.5L192.0 45.8L193.0 45.3L194.0 45.4L195.0 45.9L195.5 45.5L196.0 34.6L197.0 12.5L198.0 37.4L198.3 29.7L199.0 34.3L200.0 34.6L201.0 43.5L201.6 37.9L202.0 40.4L203.0 41.6L203.2 42.1L204.0 44.9L205.0 44.7L205.7 44.5L206.0 44.6L207.0 44.4L208.0 44.3L209.0 43.7L210.0 44.6L211.0 46.3L211.5 45.9L212.0 46.0L213.0 46.2L214.0 46.5L214.8 46.2L215.0 47.0L216.0 46.9L217.0 46.7L218.0 46.8L219.0 46.9L220.0 47.1L221.0 47.3L221.4 47.2L222.0 46.9L223.0 46.6L223.4 46.3L224.0 46.6L225.0 47.0L225.5 47.2L226.0 47.2L227.0 47.2L228.0 47.2L229.0 47.2L230.0 47.2L230.4 47.2L231.0 46.5L232.0 45.4L233.0 44.9L233.7 44.5L234.0 45.2L235.0 45.7L235.4 46.0L236.0 46.1L237.0 46.9L237.9 46.5L238.0 46.6L239.0 46.8L240.0 47.2L240.3 47.2L241.0 47.2L242.0 47.3L242.8 47.2L243.0 46.7L243.6 42.9L244.0 41.2L245.0 42.8L245.3 35.5L246.0 38.3L246.9 40.4L247.0 41.0L248.0 43.2L248.6 44.5L249.0 46.4L250.0 45.8L251.0 46.5L252.0 46.8L253.0 47.3L253.5 47.0L254.0 46.8L255.0 47.0L255.2 46.2L256.0 36.0L256.3 31.3L257.0 27.1L257.6 20.6L258.0 21.0L259.0 22.7L259.3 21.5L260.0 29.4L260.6 20.6L261.0 38.4L262.0 31.0L262.2 31.3L263.0 31.1L263.4 30.5L264.0 39.4L265.0 37.1L266.0 40.7L267.0 39.7L267.5 39.6L268.0 43.3L269.0 40.4L270.0 40.4L271.0 42.6L272.0 42.0L272.5 42.1L273.0 43.6L274.0 44.2L275.0 44.1L275.8 43.7L276.0 43.9L277.0 46.1L278.0 44.6L279.0 44.9L280.0 45.2L281.0 45.6L282.0 45.8L282.4 45.9L283.0 46.1L284.0 46.3L285.0 46.4L285.7 46.5L286.0 46.8L287.0 47.1L287.3 47.2L288.0 47.2L289.0 47.3L290.0 47.2L291.0 47.2L291.4 47.2L292.0 39.9L292.6 31.3L293.0 32.0L293.6 17.3L294.0 21.5L294.9 24.8L295.0 26.5L296.0 33.2L296.4 31.3L297.0 33.7L298.0 35.5L299.0 38.8L299.7 39.6L300.0 40.5L301.0 41.8L301.3 42.1L302.0 44.7L303.0 46.3L303.8 44.5L304.0 45.6L305.0 46.3L305.4 45.4L306.0 46.4L307.0 43.7L308.0 45.7L308.7 47.0L309.0 47.2L310.0 47.3L311.0 47.3L312.0 47.1L313.0 47.1L314.0 47.2L315.0 47.3L316.0 47.2L317.0 47.2L318.0 47.2L319.0 47.2L319.8 47.2L320.0 47.0L321.0 46.2L322.0 46.8L322.7 47.2L323.0 47.3L324.0 47.2L325.0 47.2L326.0 47.2L327.0 47.2L328.0 47.2L328.8 47.2L329.0 47.2L330.0 45.4L330.5 44.5L331.0 44.9L332.0 45.8L333.0 45.7L334.0 46.1L335.0 46.4L335.4 46.5L336.0 47.1L337.0 47.2L338.0 47.2L339.0 47.4L340.0 47.2L340.4 47.2L341.0 45.9L341.5 42.9L342.0 42.8L343.0 38.7L343.2 37.9L344.0 41.1L344.8 42.9L345.0 43.2L346.0 44.4L347.0 45.4L348.0 46.2L349.0 47.0L349.1 47.0L350.0 47.1L351.0 47.1L352.0 47.4L352.4 47.2L353.0 37.7L353.6 28.1L354.0 26.7L355.0 24.6L355.2 21.5L356.0 24.4L356.9 23.1L357.0 31.6L358.0 20.6L359.0 26.2L359.7 29.7L360.0 31.5L361.0 37.1L361.8 37.1L362.0 37.7L363.0 38.9L364.0 40.7L364.3 40.4L365.0 35.3L365.9 28.1L366.0 28.5L367.0 20.9L367.6 16.5L368.0 21.3L369.0 36.6L369.2 26.5L370.0 23.0L370.5 17.3L371.0 22.6L372.0 27.0L372.2 28.1L373.0 31.9L374.0 41.6L374.2 33.8L375.0 43.8L376.0 37.2L376.6 37.9L377.0 43.0L378.0 39.4L379.0 40.5L379.1 40.4L380.0 42.3L381.0 45.1L381.6 42.6L382.0 43.1L383.0 44.3L384.0 43.7L385.0 44.2L386.0 44.5L386.5 44.5L387.0 45.8L388.0 46.0L389.0 45.4L390.0 45.6L390.5 45.5L391.0 38.1L392.0 12.5L393.0 30.2L393.3 29.7L394.0 41.5L395.0 34.6L396.0 37.6L396.6 37.9L397.0 39.6L398.0 42.6L398.2 42.1L399.0 43.2L400.0 45.3L400.7 44.5L401.0 44.7L402.0 45.4L403.0 46.3L404.0 43.7L405.0 44.7L406.0 45.6L406.5 45.9L407.0 46.1L408.0 46.1L409.0 46.2L409.8 46.2L410.0 46.3L411.0 46.5L412.0 46.6L413.0 46.8L414.0 47.0L415.0 47.1L416.0 47.2L416.4 47.2L417.0 46.9L418.0 46.6L418.4 46.3L419.0 46.6L420.0 47.0L420.5 47.2L421.0 47.2L422.0 47.2L423.0 47.2L424.0 47.3L425.0 47.3L425.4 47.2L426.0 47.0L427.0 45.4L428.0 45.4L428.7 44.5L429.0 44.8L430.0 45.8L430.4 46.0L431.0 46.9L432.0 46.4L432.9 46.5L433.0 46.7L434.0 46.8L435.0 47.2L435.3 47.2L436.0 47.2L437.0 47.4L437.8 47.2L438.0 46.2L438.6 42.9L439.0 41.5L440.0 37.7L440.3 35.5L441.0 37.9L441.9 40.4L442.0 44.9L443.0 45.4L443.6 44.5L444.0 44.9L445.0 46.5L446.0 46.5L447.0 46.7L448.0 47.1L448.5 47.0L449.0 47.1L450.0 46.3L450.2 46.2L451.0 43.8L451.3 31.3L452.0 30.3L452.6 20.6L453.0 27.8L454.0 21.6L454.3 21.5L455.0 22.5L455.6 20.6L456.0 23.8L457.0 34.4L457.2 31.3L458.0 32.1L458.4 30.5L459.0 35.5L460.0 37.1L461.0 38.5L462.0 39.8L462.5 39.6L463.0 41.9L464.0 44.3L465.0 40.4L466.0 41.7L467.0 42.0L467.5 42.1L468.0 44.9L469.0 44.8L470.0 43.5L470.8 43.7L471.0 43.9L472.0 45.8L473.0 45.3L474.0 44.9L475.0 45.2L476.0 45.6L477.0 45.8L477.4 45.9L478.0 46.0L479.0 46.3L480.0 46.6L480.7 46.5L481.0 47.0L482.0 47.1L482.3 47.2L483.0 47.2L484.0 47.3L485.0 47.2L486.0 47.2L486.4 47.2L487.0 40.0L487.6 31.3L488.0 37.5L488.6 17.3L489.0 20.3L489.9 24.8L490.0 26.0L491.0 30.7L491.4 31.3L492.0 35.1L493.0 35.5L494.0 41.4L494.7 39.6L495.0 40.7L496.0 41.9L496.3 42.1L497.0 43.0L498.0 45.8L498.8 44.5L499.0 44.7L500.0 45.4L500.4 45.4L501.0 44.8L502.0 43.7L503.0 46.2L503.7 47.0L504.0 47.3L505.0 47.0L506.0 47.1L507.0 47.3L508.0 47.3L509.0 47.3L510.0 47.3L511.0 47.1L512.0 47.2L513.0 47.4L514.0 47.2L514.8 47.2L515.0 47.2L516.0 46.2L517.0 46.8L517.7 47.2L518.0 47.4L519.0 47.4L520.0 47.3L521.0 47.2L522.0 47.2L523.0 47.2L523.8 47.2L524.0 46.9L525.0 45.5L525.5 44.5L526.0 44.8L527.0 45.3L528.0 45.7L529.0 46.1L530.0 46.8L530.4 46.5L531.0 46.8L532.0 47.2L533.0 47.2L534.0 47.2L535.0 47.2L535.4 47.2L536.0 45.1L536.5 42.9L537.0 43.3L538.0 39.3L538.2 37.9L539.0 42.1L539.8 42.9L540.0 43.5L541.0 44.6L542.0 45.4L543.0 46.4L544.0 46.9L544.1 47.0L545.0 47.1L546.0 47.3L547.0 47.3L547.4 47.2L548.0 38.0L548.6 28.1L549.0 27.8L550.0 23.7L550.2 21.5L551.0 23.8L551.9 23.1L552.0 24.6L553.0 20.6L554.0 26.2L554.7 29.7L555.0 31.0L556.0 35.1L556.8 37.1L557.0 37.6L558.0 38.8L559.0 40.2L559.3 40.4L560.0 36.1L560.9 28.1L561.0 40.4L562.0 20.7L562.6 16.5L563.0 35.3L564.0 25.4L564.2 26.5L565.0 25.6L565.5 17.3L566.0 20.5L567.0 28.8L567.2 28.1L568.0 31.6L569.0 33.8L569.2 33.8L570.0 42.1L571.0 37.1L571.6 37.9L572.0 38.8L573.0 39.9L574.0 41.0L574.1 40.4L575.0 41.5L576.0 42.4L576.6 42.6L577.0 42.9L578.0 44.6L579.0 43.7L580.0 46.2L581.0 44.5L581.5 44.5L582.0 44.7L583.0 46.1L584.0 45.4L585.0 46.3L585.5 45.5L586.0 45.4L587.0 30.5L587.4 30.5L588.0 32.7L589.0 35.5L590.0 38.3L591.0 42.4L591.5 37.9L592.0 39.9L593.0 42.4L594.0 43.7L595.0 46.6L595.7 46.2L596.0 46.0L597.0 43.5L597.3 42.9L598.0 44.2L599.0 40.9L599.4 39.6L600.0 41.2L601.0 45.6L601.4 44.5L602.0 46.3L603.0 46.3L603.9 46.8L604.0 46.8L605.0 46.9L606.0 47.0L607.0 47.3L608.0 47.2L608.8 47.2L609.0 45.0L609.7 36.3L610.0 41.3L611.0 21.0L611.3 14.4L612.0 36.5L613.0 26.5L614.0 36.7L615.0 31.3L616.0 35.1L617.0 37.1L618.0 42.1L619.0 41.4L619.2 41.2L620.0 42.3L621.0 44.3L621.2 42.9L622.0 43.5L623.0 44.6L624.0 44.4L624.5 44.5L625.0 45.2L626.0 45.3L627.0 45.6L627.8 45.9L628.0 46.1L629.0 46.2L630.0 46.6L631.0 46.8L632.0 47.3L633.0 47.1L633.6 47.2L634.0 42.4L634.4 31.3L635.0 24.3L635.4 19.5L636.0 26.9L636.9 28.1L637.0 30.0L638.0 32.3L638.5 33.8L639.0 35.1L640.0 37.9L640.7 38.8L641.0 44.0L642.0 42.0L642.6 42.9L643.0 43.7L644.0 44.7L644.6 45.4L645.0 45.8L645.9 43.7L646.0 43.7L647.0 43.3L647.9 40.4L648.0 41.2L649.0 42.6L650.0 44.5L651.0 46.0L652.0 45.9L652.5 46.2L653.0 46.4L654.0 47.1L655.0 47.0L656.0 47.1L657.0 47.1L658.0 47.2L658.3 47.2L659.0 33.6L659.1 31.3L660.0 28.9L660.3 23.1L661.0 26.3L661.9 29.7L662.0 30.8L663.0 33.4L664.0 36.3L665.0 39.5L666.0 41.2L667.0 44.2L668.0 44.7L668.2 44.5L669.0 46.1L670.0 45.8L670.7 46.2L671.0 46.4L672.0 46.1L673.0 46.8L673.1 46.0L674.0 46.7L675.0 47.0L675.6 47.0L676.0 47.0L677.0 47.2L678.0 47.3L679.0 47.1L680.0 47.1L681.0 47.2L682.0 47.2L682.2 47.2L683.0 36.1L683.3 31.3L684.0 25.7L684.5 18.2L685.0 23.6L686.0 28.2L686.3 28.1L687.0 30.6L688.0 34.3L688.5 34.6L689.0 38.5L690.0 38.7L690.4 38.8L691.0 39.9L692.0 43.9L692.9 42.1L693.0 44.4L694.0 44.1L695.0 44.3L695.4 44.5L696.0 44.9L697.0 46.0L697.0 49.1L696.0 50.6L695.4 51.1L695.0 49.2L694.0 49.5L693.0 53.2L692.9 53.6L692.0 53.7L691.0 56.2L690.4 57.7L690.0 58.4L689.0 57.7L688.5 62.7L688.0 63.5L687.0 55.6L686.3 67.6L686.0 68.6L685.0 71.7L684.5 75.9L684.0 57.5L683.3 64.3L683.0 59.3L682.2 47.8L682.0 47.8L681.0 47.8L680.0 47.8L679.0 47.9L678.0 47.9L677.0 47.9L676.0 48.0L675.6 48.0L675.0 48.2L674.0 48.5L673.1 49.0L673.0 48.3L672.0 48.8L671.0 48.7L670.7 48.7L670.0 48.6L669.0 48.5L668.2 49.8L668.0 48.4L667.0 51.2L666.0 52.8L665.0 54.5L664.0 57.7L663.0 60.1L662.0 62.7L661.9 64.3L661.0 61.3L660.3 67.6L660.0 61.7L659.1 64.3L659.0 56.9L658.3 47.8L658.0 47.7L657.0 47.9L656.0 47.9L655.0 48.0L654.0 48.3L653.0 48.5L652.5 48.7L652.0 49.1L651.0 49.8L650.0 50.8L649.0 51.1L648.0 51.9L647.9 52.0L647.0 51.0L646.0 50.3L645.9 50.3L645.0 49.7L644.6 49.5L644.0 50.1L643.0 49.3L642.6 52.0L642.0 53.2L641.0 52.3L640.7 56.1L640.0 51.0L639.0 60.8L638.5 62.7L638.0 61.8L637.0 68.1L636.9 69.3L636.0 55.8L635.4 75.0L635.0 70.1L634.4 64.3L634.0 56.0L633.6 47.8L633.0 47.9L632.0 47.9L631.0 48.2L630.0 48.1L629.0 48.0L628.0 49.0L627.8 49.1L627.0 49.2L626.0 49.7L625.0 50.0L624.5 50.3L624.0 49.0L623.0 50.9L622.0 48.8L621.2 52.0L621.0 52.1L620.0 53.4L619.2 54.4L619.0 54.2L618.0 53.4L617.0 59.4L616.0 61.4L615.0 64.3L614.0 67.3L613.0 72.5L612.0 81.4L611.3 89.0L611.0 77.9L610.0 65.1L609.7 61.0L609.0 50.6L608.8 47.8L608.0 47.7L607.0 47.9L606.0 48.0L605.0 47.7L604.0 47.9L603.9 48.2L603.0 48.1L602.0 49.1L601.4 49.5L601.0 50.0L600.0 51.4L599.4 52.8L599.0 49.6L598.0 51.6L597.3 51.1L597.0 50.5L596.0 49.0L595.7 48.7L595.0 49.2L594.0 51.1L593.0 52.3L592.0 53.3L591.5 54.4L591.0 55.5L590.0 57.8L589.0 61.0L588.0 60.8L587.4 61.8L587.0 61.8L586.0 53.3L585.5 49.5L585.0 48.7L584.0 49.8L583.0 49.4L582.0 49.3L581.5 50.3L581.0 50.4L580.0 49.7L579.0 51.1L578.0 51.4L577.0 50.5L576.6 52.0L576.0 52.1L575.0 53.3L574.1 54.4L574.0 54.0L573.0 49.9L572.0 54.6L571.6 55.2L571.0 55.2L570.0 55.6L569.2 56.1L569.0 56.3L568.0 55.3L567.2 59.4L567.0 59.4L566.0 61.6L565.5 62.7L565.0 62.3L564.2 64.3L564.0 64.8L563.0 62.8L562.6 77.5L562.0 58.7L561.0 64.0L560.9 64.3L560.0 56.3L559.3 53.6L559.0 49.5L558.0 54.6L557.0 55.7L556.8 56.1L556.0 57.2L555.0 52.4L554.7 59.4L554.0 52.2L553.0 64.3L552.0 68.0L551.9 69.3L551.0 70.7L550.2 76.7L550.0 71.8L549.0 61.0L548.6 57.7L548.0 52.3L547.4 47.8L547.0 47.8L546.0 47.9L545.0 47.9L544.1 48.0L544.0 48.0L543.0 48.9L542.0 49.8L541.0 49.8L540.0 53.0L539.8 53.5L539.0 52.0L538.2 56.9L538.0 55.8L537.0 53.7L536.5 52.8L536.0 49.9L535.4 47.8L535.0 47.6L534.0 47.8L533.0 47.7L532.0 47.8L531.0 48.2L530.4 48.5L530.0 48.5L529.0 48.5L528.0 49.3L527.0 48.7L526.0 50.7L525.5 51.1L525.0 50.1L524.0 47.7L523.8 47.8L523.0 47.8L522.0 47.8L521.0 47.8L520.0 47.8L519.0 47.8L518.0 47.8L517.7 47.8L517.0 48.2L516.0 48.8L515.0 47.7L514.8 47.8L514.0 47.8L513.0 47.7L512.0 47.8L511.0 47.8L510.0 47.9L509.0 47.8L508.0 47.7L507.0 47.9L506.0 47.9L505.0 47.7L504.0 48.0L503.7 48.0L503.0 48.6L502.0 49.8L501.0 49.7L500.4 49.8L500.0 48.7L499.0 50.0L498.8 50.3L498.0 50.9L497.0 51.7L496.3 52.8L496.0 53.2L495.0 54.4L494.7 55.2L494.0 54.9L493.0 59.4L492.0 62.1L491.4 64.3L491.0 65.0L490.0 68.4L489.9 70.9L489.0 75.1L488.6 80.0L488.0 67.4L487.6 67.6L487.0 52.1L486.4 47.8L486.0 47.8L485.0 47.7L484.0 47.7L483.0 47.8L482.3 47.8L482.0 47.6L481.0 48.3L480.7 48.5L480.0 48.3L479.0 47.9L478.0 48.7L477.4 49.1L477.0 48.3L476.0 49.3L475.0 49.4L474.0 49.8L473.0 49.9L472.0 48.4L471.0 50.2L470.8 50.3L470.0 50.5L469.0 51.0L468.0 51.5L467.5 52.0L467.0 51.8L466.0 52.4L465.0 52.8L464.0 52.9L463.0 53.3L462.5 53.6L462.0 53.5L461.0 50.3L460.0 55.2L459.0 56.2L458.4 56.9L458.0 56.5L457.2 57.7L457.0 51.5L456.0 61.1L455.6 63.5L455.0 62.6L454.3 64.3L454.0 66.5L453.0 73.4L452.6 77.5L452.0 68.9L451.3 61.0L451.0 57.8L450.2 49.5L450.0 48.3L449.0 48.4L448.5 48.0L448.0 48.1L447.0 48.3L446.0 48.5L445.0 49.5L444.0 48.7L443.6 51.1L443.0 52.4L442.0 54.3L441.9 56.1L441.0 57.0L440.3 59.4L440.0 57.7L439.0 54.1L438.6 52.8L438.0 48.8L437.8 47.8L437.0 47.8L436.0 47.7L435.3 47.8L435.0 47.9L434.0 48.1L433.0 48.4L432.9 48.5L432.0 48.3L431.0 48.8L430.4 49.0L430.0 48.5L429.0 51.2L428.7 52.0L428.0 51.0L427.0 50.3L426.0 48.7L425.4 47.8L425.0 47.7L424.0 47.8L423.0 47.6L422.0 47.8L421.0 47.8L420.5 47.8L420.0 47.7L419.0 48.4L418.4 48.7L418.0 48.4L417.0 47.7L416.4 47.8L416.0 47.8L415.0 47.9L414.0 48.1L413.0 48.2L412.0 47.9L411.0 48.4L410.0 48.6L409.8 48.7L409.0 48.9L408.0 49.0L407.0 49.3L406.5 49.5L406.0 49.1L405.0 50.8L404.0 52.0L403.0 50.8L402.0 51.9L401.0 49.2L400.7 52.0L400.0 51.7L399.0 53.3L398.2 54.4L398.0 54.1L397.0 51.0L396.6 57.7L396.0 53.6L395.0 64.3L394.0 58.4L393.3 70.9L393.0 66.9L392.0 78.3L391.0 58.9L390.5 49.5L390.0 48.8L389.0 49.8L388.0 50.0L387.0 50.1L386.5 50.3L386.0 50.2L385.0 50.6L384.0 51.1L383.0 51.2L382.0 50.2L381.6 52.0L381.0 51.1L380.0 53.2L379.1 54.4L379.0 53.9L378.0 54.2L377.0 54.9L376.6 55.2L376.0 54.6L375.0 55.2L374.2 56.1L374.0 53.6L373.0 58.0L372.2 59.4L372.0 59.2L371.0 61.7L370.5 62.7L370.0 53.6L369.2 64.3L369.0 59.8L368.0 74.0L367.6 77.5L367.0 72.3L366.0 64.5L365.9 64.3L365.0 52.6L364.3 53.6L364.0 51.8L363.0 54.5L362.0 55.2L361.8 56.1L361.0 56.7L360.0 58.7L359.7 59.4L359.0 60.4L358.0 64.3L357.0 63.6L356.9 69.3L356.0 72.8L355.2 76.7L355.0 66.3L354.0 61.8L353.6 57.7L353.0 52.3L352.4 47.8L352.0 47.8L351.0 47.9L350.0 47.9L349.1 48.0L349.0 48.0L348.0 48.9L347.0 49.8L346.0 51.3L345.0 51.4L344.8 53.5L344.0 51.8L343.2 56.9L343.0 55.7L342.0 53.7L341.5 52.8L341.0 50.0L340.4 47.8L340.0 47.7L339.0 47.8L338.0 47.8L337.0 47.8L336.0 47.7L335.4 48.5L335.0 48.4L334.0 49.0L333.0 49.3L332.0 49.8L331.0 50.5L330.5 51.1L330.0 50.1L329.0 48.2L328.8 47.8L328.0 47.6L327.0 47.7L326.0 47.8L325.0 47.6L324.0 47.8L323.0 47.8L322.7 47.8L322.0 48.0L321.0 48.8L320.0 47.9L319.8 47.8L319.0 47.7L318.0 47.6L317.0 47.8L316.0 47.8L315.0 47.9L314.0 47.9L313.0 47.9L312.0 47.9L311.0 47.9L310.0 47.7L309.0 48.0L308.7 48.0L308.0 48.6L307.0 49.8L306.0 48.3L305.4 49.8L305.0 49.8L304.0 50.2L303.8 50.3L303.0 48.7L302.0 52.1L301.3 52.8L301.0 53.0L300.0 51.7L299.7 55.2L299.0 50.7L298.0 59.4L297.0 58.0L296.4 64.3L296.0 65.5L295.0 68.2L294.9 70.9L294.0 69.2L293.6 80.0L293.0 57.4L292.6 67.6L292.0 57.3L291.4 47.8L291.0 47.8L290.0 47.8L289.0 47.6L288.0 47.8L287.3 47.8L287.0 47.8L286.0 48.3L285.7 48.5L285.0 48.5L284.0 48.7L283.0 48.2L282.4 49.1L282.0 49.1L281.0 49.3L280.0 49.2L279.0 49.8L278.0 49.9L277.0 48.4L276.0 49.3L275.8 50.3L275.0 49.3L274.0 48.9L273.0 50.4L272.5 52.0L272.0 49.0L271.0 49.8L270.0 52.8L269.0 50.8L268.0 53.2L267.5 53.6L267.0 50.1L266.0 51.6L265.0 55.2L264.0 53.1L263.4 56.9L263.0 56.3L262.2 57.7L262.0 51.2L261.0 61.5L260.6 63.5L260.0 58.3L259.3 64.3L259.0 66.5L258.0 61.0L257.6 77.5L257.0 61.4L256.3 61.0L256.0 57.7L255.2 49.5L255.0 48.4L254.0 48.2L253.5 48.0L253.0 48.1L252.0 48.3L251.0 48.5L250.0 49.0L249.0 49.8L248.6 51.1L248.0 52.8L247.0 55.2L246.9 56.1L246.0 53.4L245.3 59.4L245.0 53.9L244.0 50.3L243.6 52.8L243.0 49.0L242.8 47.8L242.0 47.8L241.0 47.7L240.3 47.8L240.0 47.8L239.0 48.2L238.0 48.4L237.9 48.5L237.0 48.6L236.0 48.8L235.4 49.0L235.0 49.6L234.0 50.2L233.7 52.0L233.0 51.1L232.0 50.3L231.0 48.6L230.4 47.8L230.0 47.8L229.0 47.8L228.0 47.8L227.0 47.6L226.0 47.7L225.5 47.8L225.0 48.0L224.0 48.0L223.4 48.7L223.0 48.5L222.0 48.0L221.4 47.8L221.0 47.8L220.0 48.0L219.0 48.1L218.0 48.2L217.0 48.3L216.0 47.8L215.0 48.2L214.8 48.7L214.0 48.9L213.0 49.1L212.0 49.4L211.5 49.5L211.0 48.6L210.0 50.9L209.0 52.0L208.0 51.9L207.0 51.9L206.0 52.0L205.7 52.0L205.0 52.3L204.0 53.6L203.2 54.4L203.0 51.7L202.0 51.7L201.6 57.7L201.0 59.7L200.0 64.3L199.0 67.3L198.3 70.9L198.0 70.4L197.0 78.3L196.0 53.9L195.5 49.5L195.0 49.4L194.0 49.8L193.0 49.8L192.0 49.9L191.5 50.3L191.0 48.7L190.0 50.6L189.0 51.1L188.0 50.7L187.0 50.5L186.6 52.0L186.0 50.5L185.0 52.5L184.1 54.4L184.0 54.2L183.0 54.0L182.0 51.8L181.6 55.2L181.0 52.0L180.0 50.9L179.2 56.1L179.0 56.0L178.0 57.6L177.2 59.4L177.0 58.8L176.0 61.5L175.5 62.7L175.0 63.0L174.2 64.3L174.0 55.9L173.0 73.5L172.6 77.5L172.0 65.3L171.0 54.6L170.9 64.3L170.0 57.7L169.3 53.6L169.0 52.8L168.0 54.9L167.0 50.4L166.8 56.1L166.0 56.5L165.0 58.3L164.7 59.4L164.0 56.1L163.0 64.3L162.0 67.6L161.9 69.3L161.0 68.2L160.2 76.7L160.0 73.2L159.0 62.2L158.6 57.7L158.0 51.8L157.4 47.8L157.0 47.7L156.0 47.9L155.0 47.9L154.1 48.0L154.0 47.9L153.0 48.0L152.0 49.8L151.0 50.6L150.0 51.9L149.8 53.5L149.0 52.3L148.2 56.9L148.0 52.6L147.0 50.7L146.5 52.8L146.0 50.3L145.4 47.8L145.0 47.6L144.0 47.8L143.0 47.8L142.0 47.8L141.0 48.2L140.4 48.5L140.0 48.6L139.0 48.9L138.0 49.3L137.0 50.0L136.0 48.8L135.5 51.1L135.0 49.4L134.0 47.8L133.8 47.8L133.0 47.7L132.0 47.8L131.0 47.7L130.0 47.8L129.0 47.8L128.0 47.7L127.7 47.8L127.0 48.2L126.0 48.8L125.0 47.9L124.8 47.8L124.0 47.7L123.0 47.8L122.0 47.7L121.0 47.8L120.0 47.9L119.0 47.9L118.0 47.9L117.0 47.9L116.0 47.9L115.0 47.8L114.0 47.8L113.7 48.0L113.0 48.7L112.0 49.8L111.0 48.5L110.4 49.8L110.0 49.8L109.0 50.0L108.8 50.3L108.0 50.9L107.0 49.5L106.3 52.8L106.0 50.5L105.0 53.1L104.7 55.2L104.0 56.7L103.0 59.4L102.0 52.6L101.4 64.3L101.0 57.2L100.0 55.0L99.9 70.9L99.0 59.3L98.6 80.0L98.0 56.4L97.6 67.6L97.0 55.6L96.4 47.8L96.0 47.8L95.0 47.8L94.0 47.8L93.0 47.8L92.3 47.8L92.0 47.9L91.0 48.3L90.7 48.5L90.0 48.6L89.0 47.9L88.0 48.9L87.4 49.1L87.0 49.1L86.0 49.4L85.0 49.4L84.0 49.8L83.0 49.8L82.0 49.3L81.0 49.5L80.8 50.3L80.0 49.8L79.0 50.2L78.0 49.3L77.5 52.0L77.0 50.0L76.0 51.6L75.0 52.8L74.0 52.6L73.0 52.9L72.5 53.6L72.0 53.6L71.0 54.4L70.0 55.2L69.0 53.6L68.4 56.9L68.0 57.1L67.2 57.7L67.0 58.3L66.0 52.6L65.6 63.5L65.0 63.6L64.3 64.3L64.0 65.6L63.0 72.1L62.6 77.5L62.0 54.8L61.3 61.0L61.0 57.9L60.2 49.5L60.0 49.3L59.0 48.3L58.5 48.0L58.0 48.1L57.0 48.3L56.0 48.5L55.0 49.5L54.0 49.1L53.6 51.1L53.0 52.5L52.0 55.2L51.9 56.1L51.0 55.9L50.3 59.4L50.0 50.7L49.0 51.4L48.6 52.8L48.0 49.0L47.8 47.8L47.0 47.6L46.0 47.7L45.3 47.8L45.0 47.9L44.0 48.0L43.0 48.1L42.9 48.5L42.0 48.4L41.0 48.2L40.4 49.0L40.0 48.7L39.0 51.3L38.7 52.0L38.0 50.3L37.0 50.3L36.0 48.7L35.4 47.8L35.0 47.8L34.0 47.7L33.0 47.6L32.0 47.7L31.0 47.6L30.5 47.8L30.0 48.0L29.0 48.4L28.4 48.7L28.0 47.9L27.0 47.8L26.4 47.8L26.0 47.8L25.0 47.7L24.0 48.0L23.0 48.2L22.0 48.3L21.0 48.5L20.0 48.6L19.8 48.7L19.0 48.8L18.0 48.1L17.0 49.4L16.5 49.5L16.0 48.8L15.0 50.7L14.0 52.0L13.0 50.8L12.0 50.7L11.0 49.4L10.7 52.0L10.0 52.4L9.0 52.6L8.2 54.4L8.0 54.4L7.0 56.9L6.6 57.7L6.0 59.1L5.0 64.3L4.0 62.3L3.3 70.9L3.0 71.8L2.0 78.3Z" fill="#0080ff" stroke="#000" stroke-width="1" stroke-linejoin="miter"/><rect x="195" y="2" width="2" height="92" fill="#000"/><rect x="390" y="2" width="2" height="92" fill="#000"/><rect x="585" y="2" width="2" height="92" fill="#000"/></svg>
<div class="panel" style="left:22px;top:415px;width:189px;height:95px;"></div>
<span class="t " style="left:26.6px;top:421.72px;font-size:12.5px;font-weight:bold;color:#000;letter-spacing:-0.094px;">Track</span>
<span class="t " style="left:64.6px;top:421.72px;font-size:12.5px;font-weight:bold;color:#000;">4</span>
<div class="inp" style="left:80px;top:420px;width:125px;height:17px;"></div>
<span class="t " style="left:83.0px;top:423.04px;font-size:12px;color:#000;letter-spacing:-0.637px;">Ambient Synth w/Fade</span>
<div class="btn" style="left:48px;top:441px;width:36px;height:17px;"></div>
<span class="t " style="left:56.7px;top:444.04px;font-size:12px;color:#000;letter-spacing:-1.133px;">Arm</span>
<div class="btn" style="left:88px;top:441px;width:36px;height:17px;"></div>
<span class="t " style="left:93.9px;top:444.04px;font-size:12px;color:#000;letter-spacing:-0.622px;">Mute</span>
<div class="btn" style="left:128px;top:441px;width:36px;height:17px;"></div>
<span class="t " style="left:135.4px;top:444.04px;font-size:12px;color:#000;letter-spacing:-0.708px;">Solo</span>
<div class="btn" style="left:168px;top:441px;width:36px;height:17px;"></div>
<span class="t " style="left:172.4px;top:444.04px;font-size:12px;color:#000;letter-spacing:-0.832px;">Props</span>
<svg style="left:29px;top:441px" width="16" height="15" viewBox="0 0 16 15" fill="none" stroke="#2c74f0" stroke-width="2.5" stroke-linecap="butt" stroke-linejoin="miter"><path d="M1 7.3H11.5"/><path d="M6.3 1.6L12 7.3L6.3 13"/></svg>
<svg class="wf" style="left:215px;top:415px" width="699" height="96" viewBox="0 0 699 96" shape-rendering="crispEdges"><path d="M-0.5 96V-0.5H699" stroke="#fff" stroke-width="1" fill="none"/><rect x="1" y="1" width="697" height="94" fill="#b5b5b5" stroke="#000" stroke-width="2"/><rect x="696" y="2" width="1" height="92" fill="#000"/><path d="M2 23.5H697" stroke="#000" stroke-width="1" fill="none"/><path d="M2.0 23.5L3.0 23.5L4.0 23.5L5.0 23.5L6.0 23.5L7.0 23.5L8.0 23.5L9.0 23.5L10.0 23.5L11.0 23.5L12.0 23.5L13.0 23.5L14.0 23.5L15.0 23.5L16.0 23.5L17.0 23.5L18.0 23.5L19.0 23.5L20.0 23.5L21.0 23.4L22.0 23.3L23.0 23.2L24.0 23.2L25.0 23.0L26.0 22.9L27.0 23.0L28.0 22.9L29.0 22.7L30.0 22.8L31.0 22.8L32.0 22.8L33.0 22.8L34.0 22.5L35.0 22.5L36.0 22.2L37.0 22.6L38.0 21.8L39.0 21.6L40.0 22.0L41.0 21.8L42.0 22.0L43.0 20.9L44.0 21.6L45.0 20.9L46.0 21.7L47.0 20.1L48.0 20.0L49.0 20.1L50.0 20.2L51.0 20.4L52.0 21.2L53.0 20.1L54.0 19.8L55.0 21.1L56.0 20.3L57.0 20.2L58.0 20.4L59.0 20.2L60.0 20.5L61.0 21.1L62.0 21.0L63.0 21.7L64.0 21.4L65.0 21.0L66.0 21.1L67.0 21.0L68.0 21.2L69.0 19.9L70.0 20.9L71.0 21.0L72.0 21.4L73.0 19.9L74.0 20.8L75.0 21.3L75.5 20.0L76.0 20.7L77.0 21.1L78.0 19.9L79.0 20.7L80.0 19.7L81.0 19.5L82.0 21.4L83.0 19.4L84.0 20.8L85.0 19.3L86.0 19.6L87.0 19.9L88.0 19.7L89.0 19.2L90.0 19.0L91.0 19.5L92.0 19.6L93.0 17.3L94.0 17.8L95.0 19.3L96.0 17.6L97.0 16.7L98.0 17.9L99.0 18.6L100.0 18.2L101.0 16.8L102.0 18.1L103.0 19.3L104.0 18.1L105.0 16.9L106.0 16.9L107.0 20.3L108.0 19.5L109.0 19.7L110.0 18.3L110.7 18.0L111.0 20.0L112.0 17.8L113.0 20.0L114.0 20.3L115.0 20.1L116.0 20.3L117.0 20.3L118.0 20.4L119.0 20.6L120.0 20.3L120.8 18.5L121.0 18.8L122.0 20.4L123.0 19.3L124.0 19.1L125.0 19.7L126.0 18.4L127.0 20.3L128.0 20.0L129.0 19.1L130.0 19.5L131.0 18.2L132.0 18.2L133.0 20.0L134.0 18.2L135.0 19.0L135.8 18.0L136.0 17.2L137.0 18.1L138.0 18.7L139.0 18.9L140.0 17.8L141.0 18.7L142.0 18.4L143.0 18.2L144.0 20.8L145.0 19.9L146.0 20.3L147.0 19.7L148.0 20.9L149.0 20.7L150.0 20.8L151.0 19.5L152.0 21.2L153.0 18.8L154.0 20.1L155.0 19.8L156.0 18.7L157.0 20.1L158.0 20.9L159.0 20.7L160.0 19.4L161.0 19.0L162.0 19.4L163.0 20.9L164.0 19.9L165.0 20.4L166.0 19.2L167.0 19.4L168.0 20.1L169.0 20.2L170.0 21.0L171.0 20.9L172.0 20.9L173.0 21.4L174.0 21.5L175.0 20.1L176.0 20.0L177.0 20.4L178.0 20.5L179.0 20.9L180.0 19.2L181.0 19.8L182.0 19.1L183.0 21.1L184.0 19.0L185.0 19.9L186.0 18.9L187.0 19.6L188.0 19.1L189.0 19.0L190.0 20.1L191.0 18.5L192.0 18.1L193.0 18.7L194.0 20.5L195.0 20.4L196.0 18.8L197.0 18.5L198.0 19.0L199.0 19.3L200.0 19.8L201.0 19.9L202.0 20.3L203.0 21.0L204.0 20.0L205.0 19.1L206.0 19.5L207.0 19.8L208.0 21.1L209.0 19.9L210.0 19.8L211.0 21.1L212.0 20.5L213.0 19.4L214.0 19.7L215.0 19.3L216.0 19.0L217.0 20.1L218.0 19.3L219.0 19.5L220.0 19.6L221.0 19.6L221.4 19.0L222.0 20.9L223.0 19.5L224.0 20.4L225.0 19.6L226.0 18.6L227.0 18.5L228.0 20.5L229.0 20.0L230.0 19.3L231.0 19.2L232.0 19.3L233.0 18.5L234.0 18.4L235.0 19.4L236.0 20.2L236.5 19.0L237.0 18.4L238.0 20.4L239.0 21.1L240.0 19.7L241.0 19.0L242.0 19.2L242.6 19.5L243.0 20.4L244.0 19.3L245.0 21.1L246.0 20.6L247.0 20.6L248.0 21.1L249.0 18.6L250.0 18.8L251.0 20.9L252.0 20.7L253.0 20.6L254.0 20.9L255.0 19.0L256.0 18.9L257.0 18.1L258.0 19.4L259.0 20.8L260.0 18.9L261.0 17.8L262.0 19.8L263.0 19.9L264.0 19.5L265.0 20.2L266.0 19.8L267.0 18.7L267.7 18.0L268.0 20.3L269.0 18.7L270.0 17.3L271.0 19.3L272.0 19.5L273.0 17.8L274.0 19.7L275.0 18.9L276.0 20.1L277.0 18.9L278.0 17.6L279.0 19.2L280.0 18.0L281.0 18.3L282.0 19.7L282.8 17.2L283.0 18.4L284.0 19.7L285.0 17.9L286.0 19.2L287.0 18.7L288.0 18.7L289.0 20.2L290.0 20.1L291.0 20.6L292.0 21.4L293.0 20.0L294.0 19.9L295.0 21.1L296.0 21.2L297.0 20.1L298.0 20.9L299.0 19.7L300.0 20.5L301.0 20.3L302.0 20.5L303.0 20.2L304.0 19.6L305.0 20.7L305.5 19.5L306.0 20.1L307.0 20.4L308.0 18.8L309.0 20.5L310.0 19.7L311.0 18.9L312.0 18.8L313.0 18.8L314.0 20.9L315.0 20.9L316.0 20.2L317.0 18.7L318.0 19.0L319.0 18.6L320.0 18.6L321.0 20.7L322.0 19.7L323.0 18.5L324.0 20.0L325.0 20.1L326.0 18.7L327.0 19.0L328.0 19.9L329.0 19.8L330.0 20.1L330.6 18.5L331.0 18.0L332.0 20.5L333.0 19.2L334.0 18.6L335.0 20.5L336.0 20.4L337.0 20.0L338.0 20.0L339.0 19.3L340.0 19.4L341.0 18.3L342.0 19.2L343.0 19.7L343.2 19.0L344.0 20.7L345.0 20.8L346.0 21.0L347.0 19.4L348.0 20.6L349.0 20.7L350.0 19.0L351.0 20.4L352.0 20.6L353.0 19.6L354.0 19.8L355.0 19.3L355.8 19.5L356.0 21.2L357.0 19.0L358.0 19.5L359.0 19.6L360.0 19.6L361.0 19.9L362.0 19.6L363.0 18.9L364.0 20.9L365.0 19.4L365.8 19.5L366.0 20.4L367.0 20.9L368.0 21.3L369.0 21.0L370.0 19.6L371.0 19.9L372.0 21.2L373.0 21.2L374.0 20.4L375.0 21.3L376.0 20.5L377.0 20.6L378.0 21.3L379.0 20.9L380.0 21.7L381.0 22.3L382.0 21.7L383.0 22.1L383.5 22.0L384.0 22.4L385.0 22.3L386.0 22.7L387.0 22.4L388.0 22.6L389.0 22.5L390.0 22.4L391.0 22.5L392.0 22.7L393.0 22.6L394.0 22.6L395.0 22.8L396.0 22.8L397.0 22.6L398.0 23.0L399.0 22.8L400.0 22.8L401.0 22.8L402.0 22.9L403.0 22.9L404.0 23.1L405.0 22.8L406.0 23.0L407.0 22.9L408.0 22.8L409.0 23.0L410.0 22.7L411.0 22.8L412.0 22.5L413.0 22.2L414.0 22.0L415.0 21.6L416.0 22.4L416.2 21.5L417.0 21.7L418.0 22.1L419.0 21.5L420.0 22.0L421.0 22.2L422.0 21.2L423.0 22.1L423.7 21.0L424.0 21.1L425.0 21.9L426.0 21.9L427.0 22.1L428.0 21.4L429.0 21.5L430.0 21.4L431.0 22.2L431.3 21.5L432.0 21.3L433.0 21.5L434.0 21.1L435.0 21.0L436.0 22.2L437.0 21.0L438.0 21.1L438.8 21.0L439.0 22.0L440.0 21.7L441.0 21.2L442.0 21.3L443.0 20.3L443.8 19.0L444.0 19.1L445.0 18.9L446.0 19.5L447.0 20.9L448.0 20.8L449.0 19.0L450.0 20.2L451.0 20.1L452.0 19.9L453.0 19.6L454.0 20.2L455.0 19.7L456.0 19.4L456.4 19.0L457.0 18.9L458.0 18.3L459.0 19.4L460.0 19.9L461.0 19.4L462.0 18.2L463.0 19.0L464.0 18.2L465.0 18.6L466.0 19.0L466.5 18.0L467.0 19.8L468.0 20.1L469.0 19.3L470.0 18.5L471.0 19.1L472.0 18.9L473.0 20.6L474.0 20.5L475.0 19.7L476.0 19.9L477.0 18.9L478.0 20.0L479.0 20.7L480.0 18.9L481.0 18.7L482.0 20.5L483.0 20.5L484.0 19.4L485.0 19.0L486.0 18.7L487.0 18.4L488.0 18.5L489.0 19.4L490.0 18.4L491.0 19.0L492.0 19.4L493.0 20.9L494.0 19.7L495.0 18.9L496.0 19.8L497.0 18.8L498.0 19.3L499.0 18.6L500.0 20.2L501.0 18.5L502.0 18.0L503.0 19.0L504.0 18.0L505.0 19.1L506.0 19.5L507.0 17.8L508.0 19.4L509.0 18.0L510.0 18.2L511.0 18.2L512.0 19.8L513.0 19.8L514.0 19.4L515.0 18.9L516.0 19.9L517.0 18.8L518.0 18.1L519.0 18.2L520.0 18.0L521.0 19.2L522.0 20.1L523.0 19.9L524.0 17.8L525.0 20.3L526.0 18.6L527.0 19.4L528.0 20.5L529.0 18.1L530.0 19.3L531.0 20.4L532.0 18.1L533.0 20.8L534.0 19.5L535.0 20.3L536.0 20.7L537.0 19.2L538.0 19.2L539.0 19.4L540.0 20.8L541.0 19.9L542.0 18.9L543.0 19.5L544.0 20.2L545.0 19.5L546.0 19.7L547.0 19.1L548.0 18.8L549.0 19.3L550.0 19.8L551.0 20.4L552.0 20.0L553.0 21.0L554.0 20.8L555.0 20.2L556.0 20.4L557.0 20.8L558.0 20.9L559.0 19.0L560.0 20.4L561.0 19.4L562.0 18.5L563.0 19.0L564.0 18.6L565.0 18.8L566.0 20.0L567.0 19.2L568.0 19.0L569.0 20.7L570.0 19.5L571.0 18.9L572.0 19.6L573.0 19.8L574.0 21.1L575.0 19.3L576.0 20.4L577.0 19.7L578.0 20.2L579.0 19.2L580.0 20.3L581.0 20.7L582.0 20.8L583.0 20.8L584.0 20.4L585.0 20.0L586.0 20.4L587.0 21.5L588.0 21.2L589.0 20.6L590.0 21.5L591.0 20.5L592.0 21.2L593.0 21.3L594.0 20.9L595.0 21.4L596.0 20.5L597.0 21.5L598.0 21.4L599.0 21.1L600.0 20.7L601.0 20.9L602.0 20.4L603.0 21.0L604.0 19.9L605.0 20.4L606.0 21.6L607.0 20.7L608.0 21.4L609.0 21.4L610.0 20.2L611.0 20.0L612.0 20.3L613.0 21.5L614.0 19.4L615.0 19.4L616.0 20.1L617.0 20.9L618.0 21.0L619.0 19.6L620.0 20.7L621.0 20.1L622.0 19.4L623.0 20.1L623.5 19.0L624.0 19.0L625.0 20.5L626.0 20.9L627.0 18.9L628.0 21.2L629.0 20.1L630.0 20.7L631.0 18.9L632.0 19.6L633.0 19.7L634.0 19.5L635.0 20.5L636.0 20.5L637.0 20.7L638.0 20.0L639.0 20.5L640.0 21.1L641.0 20.0L642.0 21.3L643.0 21.3L644.0 20.5L645.0 19.5L646.0 20.3L647.0 20.3L648.0 20.8L649.0 21.5L650.0 20.8L651.0 20.7L652.0 20.2L653.0 19.9L654.0 20.0L655.0 21.6L656.0 20.1L657.0 19.6L658.0 20.0L659.0 21.0L660.0 20.3L661.0 20.0L662.0 19.8L663.0 19.7L664.0 19.4L665.0 20.3L666.0 20.6L667.0 20.7L668.0 19.8L669.0 20.2L670.0 21.2L671.0 20.5L672.0 19.0L673.0 18.8L674.0 19.2L675.0 20.4L676.0 19.6L677.0 18.6L678.0 19.1L679.0 20.1L680.0 21.0L681.0 19.0L682.0 18.8L683.0 18.7L684.0 18.5L685.0 20.6L686.0 20.0L687.0 20.4L688.0 21.0L689.0 21.0L690.0 19.3L691.0 19.8L692.0 20.8L693.0 20.6L694.0 18.8L695.0 21.0L696.0 19.1L697.0 20.7L697.0 27.2L696.0 26.0L695.0 26.3L694.0 27.7L693.0 26.2L692.0 26.6L691.0 26.6L690.0 26.2L689.0 27.8L688.0 27.6L687.0 28.1L686.0 27.3L685.0 28.1L684.0 27.9L683.0 27.6L682.0 27.8L681.0 28.0L680.0 28.0L679.0 28.2L678.0 26.9L677.0 28.1L676.0 27.2L675.0 27.9L674.0 27.6L673.0 26.1L672.0 26.1L671.0 27.4L670.0 26.0L669.0 25.9L668.0 26.4L667.0 26.6L666.0 26.7L665.0 27.6L664.0 26.5L663.0 26.7L662.0 25.5L661.0 27.0L660.0 26.8L659.0 26.6L658.0 26.1L657.0 27.3L656.0 27.3L655.0 26.9L654.0 25.8L653.0 26.2L652.0 26.4L651.0 27.0L650.0 27.3L649.0 26.4L648.0 25.8L647.0 25.5L646.0 26.0L645.0 27.0L644.0 26.2L643.0 27.2L642.0 26.7L641.0 27.0L640.0 26.1L639.0 26.4L638.0 27.2L637.0 27.2L636.0 26.7L635.0 26.4L634.0 25.7L633.0 26.5L632.0 27.9L631.0 27.8L630.0 27.3L629.0 28.1L628.0 27.1L627.0 27.9L626.0 27.0L625.0 27.8L624.0 27.9L623.5 28.0L623.0 28.1L622.0 28.4L621.0 27.7L620.0 26.3L619.0 28.0L618.0 27.7L617.0 26.9L616.0 26.4L615.0 26.8L614.0 26.8L613.0 25.8L612.0 26.6L611.0 27.0L610.0 26.6L609.0 26.8L608.0 25.9L607.0 27.4L606.0 25.7L605.0 26.8L604.0 26.6L603.0 25.5L602.0 26.5L601.0 26.3L600.0 25.3L599.0 26.9L598.0 26.5L597.0 26.9L596.0 26.0L595.0 25.9L594.0 25.6L593.0 25.6L592.0 26.9L591.0 26.5L590.0 25.8L589.0 26.7L588.0 26.7L587.0 25.8L586.0 25.4L585.0 26.8L584.0 26.6L583.0 26.9L582.0 25.6L581.0 26.1L580.0 26.7L579.0 25.8L578.0 26.0L577.0 27.7L576.0 25.9L575.0 27.0L574.0 26.9L573.0 27.8L572.0 26.8L571.0 26.8L570.0 26.2L569.0 27.7L568.0 28.0L567.0 28.5L566.0 26.5L565.0 28.5L564.0 27.2L563.0 27.9L562.0 27.5L561.0 26.5L560.0 26.2L559.0 26.5L558.0 26.0L557.0 26.2L556.0 26.3L555.0 26.7L554.0 25.9L553.0 26.5L552.0 27.2L551.0 27.9L550.0 27.7L549.0 25.9L548.0 26.9L547.0 26.9L546.0 27.1L545.0 26.0L544.0 26.6L543.0 27.5L542.0 26.9L541.0 26.6L540.0 26.7L539.0 26.5L538.0 27.6L537.0 28.4L536.0 27.3L535.0 27.9L534.0 28.4L533.0 26.3L532.0 28.2L531.0 28.1L530.0 27.4L529.0 27.0L528.0 26.3L527.0 26.5L526.0 27.7L525.0 28.2L524.0 28.1L523.0 28.4L522.0 29.5L521.0 27.0L520.0 29.0L519.0 28.4L518.0 28.1L517.0 28.6L516.0 27.1L515.0 29.0L514.0 28.4L513.0 29.1L512.0 27.6L511.0 28.9L510.0 27.6L509.0 28.4L508.0 29.1L507.0 28.6L506.0 28.9L505.0 27.0L504.0 28.0L503.0 27.4L502.0 26.4L501.0 26.9L500.0 29.0L499.0 27.5L498.0 26.7L497.0 28.0L496.0 27.5L495.0 26.6L494.0 28.0L493.0 28.2L492.0 26.1L491.0 27.7L490.0 26.7L489.0 26.6L488.0 28.3L487.0 26.6L486.0 28.0L485.0 28.0L484.0 27.4L483.0 26.9L482.0 26.0L481.0 27.5L480.0 27.6L479.0 27.6L478.0 28.6L477.0 26.4L476.0 27.8L475.0 28.1L474.0 26.0L473.0 28.6L472.0 28.4L471.0 27.1L470.0 27.3L469.0 27.9L468.0 28.4L467.0 26.2L466.5 28.0L466.0 26.2L465.0 27.1L464.0 27.0L463.0 27.4L462.0 26.2L461.0 28.2L460.0 26.5L459.0 27.4L458.0 27.5L457.0 27.0L456.4 28.0L456.0 28.1L455.0 27.6L454.0 28.2L453.0 26.6L452.0 27.4L451.0 28.7L450.0 28.5L449.0 28.9L448.0 26.8L447.0 27.0L446.0 27.6L445.0 27.4L444.0 28.8L443.8 28.5L443.0 27.9L442.0 25.9L441.0 26.4L440.0 26.1L439.0 26.2L438.8 26.0L438.0 25.8L437.0 26.2L436.0 25.4L435.0 25.9L434.0 25.5L433.0 25.9L432.0 25.2L431.3 25.5L431.0 25.3L430.0 25.0L429.0 25.5L428.0 25.9L427.0 25.1L426.0 25.5L425.0 26.2L424.0 25.3L423.7 26.0L423.0 25.2L422.0 25.6L421.0 25.7L420.0 25.4L419.0 25.7L418.0 25.1L417.0 25.1L416.2 25.5L416.0 25.1L415.0 24.9L414.0 24.5L413.0 24.5L412.0 24.2L411.0 24.2L410.0 23.9L409.0 23.9L408.0 24.1L407.0 24.1L406.0 24.2L405.0 24.1L404.0 23.9L403.0 24.2L402.0 24.1L401.0 24.2L400.0 24.0L399.0 24.1L398.0 24.3L397.0 24.1L396.0 24.3L395.0 24.1L394.0 24.2L393.0 24.4L392.0 24.1L391.0 24.5L390.0 24.1L389.0 24.7L388.0 24.3L387.0 24.8L386.0 25.0L385.0 24.7L384.0 24.3L383.5 25.0L383.0 24.8L382.0 24.7L381.0 25.3L380.0 24.8L379.0 25.0L378.0 25.5L377.0 26.5L376.0 26.5L375.0 25.6L374.0 25.4L373.0 27.2L372.0 25.8L371.0 26.5L370.0 26.8L369.0 25.8L368.0 27.5L367.0 27.6L366.0 26.1L365.8 27.5L365.0 27.2L364.0 27.6L363.0 27.6L362.0 25.8L361.0 27.1L360.0 27.1L359.0 28.0L358.0 26.0L357.0 26.8L356.0 27.8L355.8 27.5L355.0 26.5L354.0 27.6L353.0 26.9L352.0 25.9L351.0 28.1L350.0 26.5L349.0 26.3L348.0 28.0L347.0 28.1L346.0 27.0L345.0 27.6L344.0 27.1L343.2 28.0L343.0 28.1L342.0 26.8L341.0 28.2L340.0 26.8L339.0 28.0L338.0 26.9L337.0 27.8L336.0 27.7L335.0 28.5L334.0 28.3L333.0 27.4L332.0 28.6L331.0 29.1L330.6 28.5L330.0 29.2L329.0 26.3L328.0 26.7L327.0 26.4L326.0 27.9L325.0 27.3L324.0 27.3L323.0 28.6L322.0 28.5L321.0 27.4L320.0 28.1L319.0 28.0L318.0 28.0L317.0 27.1L316.0 27.3L315.0 28.0L314.0 26.9L313.0 26.0L312.0 28.1L311.0 26.7L310.0 26.9L309.0 26.9L308.0 26.8L307.0 27.2L306.0 26.4L305.5 27.5L305.0 26.2L304.0 25.8L303.0 26.1L302.0 27.3L301.0 26.1L300.0 25.8L299.0 25.6L298.0 25.9L297.0 26.0L296.0 25.9L295.0 25.7L294.0 25.9L293.0 27.0L292.0 26.3L291.0 27.2L290.0 26.0L289.0 27.6L288.0 26.8L287.0 26.1L286.0 29.1L285.0 29.3L284.0 27.6L283.0 27.0L282.8 29.0L282.0 27.3L281.0 27.5L280.0 29.4L279.0 26.6L278.0 27.2L277.0 27.0L276.0 28.5L275.0 27.2L274.0 29.4L273.0 27.8L272.0 27.4L271.0 28.7L270.0 28.5L269.0 29.1L268.0 27.7L267.7 28.5L267.0 27.3L266.0 28.8L265.0 26.5L264.0 28.0L263.0 27.3L262.0 28.7L261.0 26.7L260.0 28.8L259.0 28.0L258.0 27.8L257.0 29.6L256.0 28.3L255.0 29.0L254.0 28.2L253.0 29.2L252.0 28.3L251.0 28.5L250.0 26.3L249.0 27.8L248.0 28.8L247.0 28.2L246.0 28.2L245.0 25.9L244.0 26.5L243.0 26.5L242.6 27.5L242.0 26.5L241.0 26.7L240.0 27.0L239.0 27.2L238.0 26.9L237.0 26.7L236.5 28.0L236.0 27.4L235.0 26.5L234.0 27.5L233.0 27.1L232.0 28.1L231.0 28.0L230.0 27.4L229.0 28.6L228.0 26.9L227.0 26.9L226.0 28.3L225.0 26.6L224.0 28.0L223.0 27.5L222.0 26.9L221.4 28.0L221.0 27.5L220.0 27.2L219.0 28.4L218.0 26.3L217.0 28.4L216.0 26.7L215.0 26.1L214.0 26.3L213.0 27.4L212.0 26.1L211.0 27.3L210.0 26.2L209.0 27.6L208.0 28.1L207.0 27.8L206.0 27.5L205.0 27.2L204.0 27.8L203.0 26.9L202.0 27.0L201.0 26.7L200.0 26.3L199.0 26.3L198.0 28.3L197.0 28.3L196.0 28.2L195.0 26.5L194.0 26.5L193.0 28.1L192.0 28.3L191.0 29.0L190.0 29.2L189.0 28.3L188.0 27.9L187.0 28.0L186.0 28.8L185.0 28.2L184.0 27.5L183.0 26.6L182.0 27.7L181.0 25.9L180.0 25.8L179.0 26.5L178.0 25.7L177.0 27.5L176.0 27.0L175.0 27.6L174.0 27.4L173.0 27.4L172.0 26.0L171.0 27.3L170.0 27.8L169.0 27.7L168.0 27.9L167.0 27.6L166.0 25.8L165.0 27.6L164.0 27.1L163.0 26.2L162.0 26.1L161.0 28.0L160.0 27.4L159.0 27.1L158.0 26.1L157.0 28.2L156.0 26.8L155.0 27.6L154.0 27.1L153.0 25.9L152.0 26.3L151.0 27.5L150.0 25.8L149.0 26.5L148.0 26.0L147.0 28.0L146.0 26.7L145.0 25.9L144.0 26.2L143.0 27.0L142.0 27.4L141.0 27.5L140.0 28.0L139.0 26.8L138.0 26.1L137.0 26.1L136.0 26.9L135.8 28.0L135.0 26.7L134.0 27.6L133.0 26.0L132.0 28.6L131.0 26.5L130.0 28.1L129.0 28.4L128.0 26.8L127.0 28.3L126.0 27.0L125.0 27.5L124.0 28.4L123.0 26.5L122.0 27.8L121.0 28.7L120.8 28.5L120.0 27.0L119.0 28.8L118.0 26.8L117.0 27.7L116.0 26.9L115.0 29.9L114.0 29.6L113.0 29.8L112.0 30.9L111.0 30.8L110.7 30.5L110.0 30.0L109.0 31.1L108.0 29.9L107.0 28.6L106.0 27.9L105.0 29.7L104.0 28.3L103.0 27.7L102.0 28.1L101.0 30.3L100.0 28.1L99.0 29.0L98.0 28.6L97.0 29.8L96.0 29.8L95.0 27.6L94.0 29.7L93.0 26.9L92.0 27.6L91.0 28.4L90.0 26.2L89.0 26.1L88.0 27.3L87.0 27.0L86.0 26.0L85.0 26.1L84.0 26.2L83.0 25.9L82.0 25.9L81.0 26.6L80.0 26.6L79.0 27.1L78.0 26.5L77.0 26.1L76.0 26.9L75.5 27.0L75.0 26.9L74.0 25.8L73.0 25.7L72.0 26.8L71.0 25.5L70.0 26.6L69.0 26.3L68.0 25.7L67.0 26.9L66.0 26.2L65.0 25.3L64.0 27.0L63.0 25.4L62.0 26.1L61.0 25.7L60.0 26.5L59.0 25.2L58.0 25.7L57.0 26.4L56.0 25.9L55.0 26.8L54.0 26.6L53.0 26.7L52.0 25.6L51.0 25.4L50.0 25.3L49.0 25.3L48.0 26.5L47.0 25.6L46.0 26.2L45.0 25.7L44.0 25.3L43.0 25.5L42.0 24.7L41.0 25.2L40.0 24.7L39.0 24.5L38.0 24.6L37.0 24.4L36.0 24.2L35.0 24.5L34.0 24.6L33.0 24.4L32.0 24.0L31.0 24.1L30.0 24.0L29.0 24.2L28.0 24.1L27.0 24.0L26.0 23.9L25.0 24.0L24.0 23.9L23.0 23.7L22.0 23.7L21.0 23.6L20.0 23.5L19.0 23.5L18.0 23.5L17.0 23.5L16.0 23.5L15.0 23.5L14.0 23.5L13.0 23.5L12.0 23.5L11.0 23.5L10.0 23.5L9.0 23.5L8.0 23.5L7.0 23.5L6.0 23.5L5.0 23.5L4.0 23.5L3.0 23.5L2.0 23.5Z" fill="#0080ff" stroke="#000" stroke-width="1" stroke-linejoin="miter"/><path d="M2 70.5H697" stroke="#000" stroke-width="1" fill="none"/><path d="M2.0 70.5L3.0 70.5L4.0 70.5L5.0 70.5L6.0 70.5L7.0 70.5L8.0 70.5L9.0 70.5L10.0 70.5L11.0 70.5L12.0 70.5L13.0 70.5L14.0 70.5L15.0 70.5L16.0 70.5L17.0 70.5L18.0 70.5L19.0 70.5L20.0 70.5L21.0 70.5L22.0 70.5L23.0 70.5L24.0 70.5L25.0 70.5L26.0 70.3L27.0 70.2L28.0 70.2L29.0 70.0L30.0 69.8L31.0 69.7L32.0 69.8L33.0 69.5L34.0 69.4L35.0 69.9L36.0 69.5L37.0 69.7L38.0 69.1L39.0 69.1L40.0 69.0L41.0 68.7L42.0 69.2L43.0 68.7L44.0 68.9L45.0 67.6L46.0 67.9L47.0 67.7L48.0 66.7L49.0 67.0L50.0 68.4L51.0 66.3L52.0 66.3L53.0 67.9L54.0 66.2L55.0 68.3L56.0 68.3L57.0 66.0L58.0 67.6L59.0 66.6L60.0 66.5L61.0 66.1L62.0 66.9L63.0 67.9L64.0 66.9L65.0 67.9L66.0 66.2L67.0 67.0L68.0 67.4L69.0 67.4L70.0 65.2L71.0 65.1L72.0 67.5L73.0 65.8L74.0 67.4L75.0 65.0L75.5 65.5L76.0 64.9L77.0 66.9L78.0 66.0L79.0 65.2L80.0 65.6L81.0 65.9L82.0 64.7L83.0 67.3L84.0 65.3L85.0 64.1L86.0 64.8L87.0 64.3L88.0 63.6L89.0 64.1L90.0 66.4L90.6 64.0L91.0 64.0L92.0 63.9L93.0 66.7L94.0 65.0L95.0 66.3L96.0 63.7L97.0 65.0L98.0 66.1L99.0 67.1L100.0 65.0L100.6 64.5L101.0 66.7L102.0 64.2L103.0 64.9L104.0 64.2L105.0 64.9L106.0 65.2L107.0 66.9L108.0 66.7L109.0 66.2L110.0 64.7L111.0 64.2L112.0 64.1L113.0 63.5L114.0 64.2L115.0 66.3L116.0 64.5L117.0 62.7L118.0 66.2L118.2 63.0L119.0 64.4L120.0 62.3L121.0 64.3L122.0 62.9L123.0 62.7L124.0 64.9L125.0 63.5L126.0 66.3L127.0 65.1L128.0 64.5L129.0 64.9L130.0 63.8L130.8 64.0L131.0 64.0L132.0 65.7L133.0 64.4L134.0 63.6L135.0 67.1L136.0 63.8L137.0 64.5L138.0 66.8L139.0 65.1L140.0 66.8L141.0 66.0L142.0 66.2L143.0 66.9L143.4 65.0L144.0 66.3L145.0 64.4L146.0 64.2L147.0 64.7L148.0 66.2L149.0 65.8L150.0 65.2L151.0 66.5L152.0 64.8L153.0 63.1L153.5 64.0L154.0 65.6L155.0 66.1L156.0 65.1L157.0 63.9L158.0 67.0L159.0 66.9L160.0 64.7L161.0 65.4L162.0 67.0L163.0 67.5L164.0 65.7L165.0 67.3L166.0 66.0L167.0 66.4L168.0 65.7L169.0 67.7L170.0 67.5L171.0 65.4L172.0 66.2L173.0 67.5L174.0 67.5L175.0 67.5L176.0 67.7L177.0 65.9L178.0 66.6L179.0 67.5L180.0 65.4L181.0 66.0L182.0 66.2L183.0 67.9L184.0 67.0L185.0 67.9L186.0 67.8L187.0 67.8L188.0 67.8L189.0 65.3L190.0 67.1L191.0 66.7L192.0 66.0L193.0 65.6L194.0 64.8L195.0 66.4L196.0 65.5L197.0 67.0L198.0 65.9L199.0 66.8L200.0 65.8L201.0 67.0L202.0 65.9L203.0 66.2L204.0 65.4L205.0 67.7L206.0 67.7L207.0 66.0L208.0 65.2L209.0 66.4L210.0 67.1L211.0 66.0L212.0 66.5L213.0 66.6L214.0 67.5L215.0 65.6L216.0 67.0L217.0 67.5L218.0 67.1L219.0 65.9L220.0 66.0L221.0 67.6L221.4 66.0L222.0 66.4L223.0 65.6L224.0 66.4L225.0 66.7L226.0 66.9L227.0 64.8L228.0 64.9L229.0 65.9L230.0 64.9L231.0 65.4L232.0 66.1L233.0 65.7L234.0 66.7L235.0 66.0L236.0 66.3L236.5 64.0L237.0 66.6L238.0 65.0L239.0 64.3L240.0 66.3L241.0 65.9L242.0 64.0L243.0 64.8L244.0 65.9L245.0 65.0L246.0 64.9L247.0 66.5L248.0 65.5L249.0 65.5L250.0 65.6L251.0 66.1L252.0 67.0L253.0 65.4L254.0 65.3L255.0 67.0L256.0 65.6L257.0 66.0L258.0 64.9L259.0 65.6L260.0 65.0L261.0 65.3L262.0 65.4L263.0 65.6L264.0 66.1L265.0 65.3L266.0 64.0L267.0 64.4L268.0 64.0L269.0 64.6L270.0 66.5L271.0 66.4L272.0 64.6L273.0 63.7L274.0 67.2L275.0 64.5L276.0 66.0L277.0 66.1L278.0 67.2L279.0 64.0L280.0 64.5L281.0 66.0L282.0 66.5L283.0 64.8L284.0 66.8L285.0 67.1L286.0 64.9L287.0 65.6L288.0 65.5L289.0 67.7L290.0 67.0L291.0 67.0L292.0 65.4L293.0 67.6L294.0 65.6L295.0 67.5L296.0 66.6L297.0 66.9L298.0 67.8L299.0 66.0L300.0 67.4L300.4 66.5L301.0 67.6L302.0 67.6L303.0 66.5L304.0 67.1L305.0 66.8L306.0 66.4L307.0 67.8L308.0 67.9L309.0 66.8L310.0 66.5L311.0 67.7L312.0 66.0L313.0 66.3L314.0 67.3L315.0 65.4L315.5 66.0L316.0 65.6L317.0 66.6L318.0 67.2L319.0 66.7L320.0 65.6L321.0 67.2L322.0 66.9L323.0 66.8L324.0 67.3L325.0 67.2L326.0 66.0L327.0 65.8L328.0 66.8L329.0 65.8L330.0 66.6L330.6 66.0L331.0 68.0L332.0 66.1L333.0 65.8L334.0 65.8L335.0 66.8L336.0 68.0L337.0 67.2L338.0 67.7L339.0 67.7L340.0 66.6L341.0 65.8L342.0 67.9L343.0 67.5L343.2 66.0L344.0 65.4L345.0 65.3L346.0 66.6L347.0 67.8L348.0 67.0L349.0 67.1L350.0 66.1L351.0 65.8L352.0 67.5L353.0 66.2L354.0 66.5L355.0 64.6L355.8 64.7L356.0 66.1L357.0 64.6L358.0 64.2L359.0 66.2L360.0 65.2L361.0 66.8L362.0 66.8L363.0 67.2L364.0 66.9L365.0 66.4L365.8 66.0L366.0 67.1L367.0 67.7L368.0 66.1L369.0 67.7L370.0 66.7L371.0 67.7L372.0 68.4L373.0 67.6L374.0 66.8L375.0 67.5L376.0 67.5L377.0 67.3L378.0 68.6L379.0 68.8L380.0 68.4L381.0 67.4L382.0 68.2L383.0 68.9L384.0 68.4L385.0 68.3L386.0 68.0L387.0 68.2L388.0 68.7L389.0 68.3L390.0 68.3L391.0 69.1L392.0 68.7L393.0 68.6L393.5 68.5L394.0 68.7L395.0 69.5L396.0 69.1L397.0 68.8L398.0 69.4L399.0 69.5L400.0 69.4L401.0 69.3L402.0 69.5L403.0 69.4L404.0 69.8L405.0 69.7L406.0 69.8L407.0 69.9L408.0 70.1L409.0 69.8L410.0 69.9L411.0 69.9L412.0 69.6L413.0 70.0L413.6 69.5L414.0 69.6L415.0 69.8L416.0 69.7L417.0 69.1L418.0 69.1L419.0 69.1L420.0 68.7L421.0 68.9L421.2 68.5L422.0 68.7L423.0 68.7L424.0 68.7L425.0 68.5L426.0 68.1L427.0 68.6L428.0 68.8L428.7 68.0L429.0 68.7L430.0 68.7L431.0 68.4L432.0 68.9L433.0 67.0L434.0 68.0L435.0 68.4L436.0 67.6L436.3 67.0L437.0 67.9L438.0 67.7L439.0 67.1L440.0 66.7L441.0 67.3L442.0 67.7L443.0 66.4L444.0 67.2L445.0 67.5L446.0 65.0L446.4 65.5L447.0 67.5L448.0 66.9L449.0 64.9L450.0 67.3L451.0 66.7L452.0 64.6L453.0 65.3L454.0 64.8L455.0 66.1L456.0 64.8L456.4 65.0L457.0 67.1L458.0 65.0L459.0 64.8L460.0 65.2L461.0 64.5L462.0 67.3L463.0 65.0L464.0 65.7L465.0 66.6L466.0 65.5L466.5 65.5L467.0 65.3L468.0 66.1L469.0 66.3L470.0 67.5L471.0 67.4L472.0 65.1L473.0 66.4L474.0 64.1L475.0 65.6L476.0 64.7L477.0 65.8L478.0 65.8L479.0 65.9L480.0 65.8L481.0 65.6L482.0 65.6L482.6 64.0L483.0 64.8L484.0 65.9L485.0 64.3L486.0 63.9L487.0 65.3L488.0 65.4L489.0 66.5L490.0 66.5L491.0 66.5L492.0 64.9L493.0 67.1L494.0 67.2L495.0 66.4L496.0 67.2L497.0 65.2L498.0 64.1L499.0 65.6L500.0 65.0L501.0 66.4L502.0 66.9L503.0 64.6L504.0 64.4L505.0 66.1L506.0 65.0L507.0 67.0L508.0 65.3L509.0 64.8L510.0 65.4L511.0 64.8L512.0 64.9L513.0 66.6L514.0 67.5L515.0 66.9L516.0 65.9L517.0 66.1L518.0 67.5L519.0 65.8L520.0 67.6L521.0 65.0L522.0 66.4L523.0 65.5L524.0 65.8L525.0 65.2L526.0 67.2L527.0 66.6L528.0 66.4L529.0 66.9L530.0 64.8L531.0 64.6L532.0 65.0L533.0 67.1L534.0 64.7L535.0 64.2L535.5 65.0L536.0 64.7L537.0 65.1L538.0 66.5L539.0 64.4L540.0 65.2L541.0 65.0L542.0 66.9L543.0 66.9L544.0 67.0L545.0 65.0L546.0 67.6L547.0 67.1L548.0 66.4L549.0 67.7L550.0 66.4L551.0 67.0L552.0 67.7L553.0 65.4L554.0 65.4L555.0 67.0L555.6 66.0L556.0 66.2L557.0 66.7L558.0 66.8L559.0 67.0L560.0 66.8L561.0 67.0L562.0 66.1L563.0 65.7L564.0 65.8L565.0 65.8L566.0 65.6L567.0 67.3L568.0 65.0L569.0 67.0L570.0 64.7L571.0 67.1L572.0 66.5L573.0 65.8L574.0 66.0L575.0 67.2L576.0 67.2L577.0 67.0L578.0 67.0L579.0 67.3L580.0 66.0L581.0 66.7L582.0 67.3L583.0 68.0L584.0 68.1L585.0 67.8L585.8 67.0L586.0 68.4L587.0 67.1L588.0 68.0L589.0 67.3L590.0 68.4L591.0 67.6L592.0 68.0L593.0 68.3L594.0 67.7L595.0 67.7L595.8 67.5L596.0 68.4L597.0 67.0L598.0 67.0L599.0 67.9L600.0 67.7L601.0 67.1L602.0 67.7L603.0 66.8L604.0 67.3L605.0 67.2L606.0 66.3L607.0 65.0L608.0 65.4L608.4 65.5L609.0 65.5L610.0 64.8L611.0 65.4L612.0 66.9L613.0 67.3L614.0 65.2L615.0 65.1L616.0 67.7L617.0 66.7L618.0 67.1L619.0 65.5L620.0 66.1L621.0 66.9L622.0 67.8L623.0 67.6L623.5 66.0L624.0 66.9L625.0 66.4L626.0 66.3L627.0 65.9L628.0 65.8L629.0 67.9L630.0 67.5L631.0 67.7L632.0 66.1L633.0 67.3L634.0 67.4L635.0 67.7L636.0 66.5L637.0 67.7L638.0 66.9L639.0 67.1L640.0 67.2L641.0 67.1L642.0 65.6L643.0 66.2L644.0 65.4L645.0 66.1L646.0 65.3L647.0 65.3L648.0 67.4L649.0 66.4L650.0 66.5L651.0 65.5L652.0 67.4L653.0 67.1L654.0 65.6L655.0 65.0L656.0 64.8L657.0 65.5L658.0 66.0L659.0 65.1L660.0 65.7L661.0 64.7L662.0 65.1L663.0 65.2L664.0 66.7L665.0 64.2L666.0 66.2L667.0 66.3L668.0 67.0L669.0 64.9L670.0 64.2L671.0 64.5L672.0 67.1L673.0 65.1L674.0 67.0L675.0 65.1L676.0 66.6L677.0 66.7L678.0 66.2L679.0 66.1L680.0 65.2L681.0 64.6L682.0 67.2L683.0 64.8L684.0 64.3L685.0 64.5L686.0 66.9L686.4 65.0L687.0 64.3L688.0 66.7L689.0 65.3L690.0 66.8L691.0 66.7L692.0 65.4L693.0 66.2L694.0 65.4L695.0 66.4L696.0 65.6L697.0 66.5L697.0 75.7L696.0 76.2L695.0 75.7L694.0 76.2L693.0 76.3L692.0 75.7L691.0 76.5L690.0 74.4L689.0 76.4L688.0 76.5L687.0 75.7L686.4 76.0L686.0 73.9L685.0 74.3L684.0 74.1L683.0 76.5L682.0 75.3L681.0 76.3L680.0 75.8L679.0 75.6L678.0 75.3L677.0 74.6L676.0 74.9L675.0 74.5L674.0 76.2L673.0 75.2L672.0 74.9L671.0 76.5L670.0 76.1L669.0 75.2L668.0 74.2L667.0 74.9L666.0 76.1L665.0 76.7L664.0 74.8L663.0 74.9L662.0 75.5L661.0 75.6L660.0 75.1L659.0 75.3L658.0 76.1L657.0 74.3L656.0 73.7L655.0 76.3L654.0 75.0L653.0 74.4L652.0 74.9L651.0 75.5L650.0 73.8L649.0 74.7L648.0 74.2L647.0 73.5L646.0 73.5L645.0 74.5L644.0 74.3L643.0 74.9L642.0 74.4L641.0 75.1L640.0 73.2L639.0 73.7L638.0 73.0L637.0 73.3L636.0 74.5L635.0 73.9L634.0 74.8L633.0 73.4L632.0 74.8L631.0 74.7L630.0 73.3L629.0 74.5L628.0 74.1L627.0 74.2L626.0 74.7L625.0 74.8L624.0 74.2L623.5 75.0L623.0 75.0L622.0 75.5L621.0 73.5L620.0 73.6L619.0 75.8L618.0 74.7L617.0 74.3L616.0 73.5L615.0 75.9L614.0 73.5L613.0 73.7L612.0 74.6L611.0 75.0L610.0 74.0L609.0 75.2L608.4 75.5L608.0 75.8L607.0 75.1L606.0 74.2L605.0 75.5L604.0 74.2L603.0 74.6L602.0 74.8L601.0 74.3L600.0 73.6L599.0 74.0L598.0 73.1L597.0 74.1L596.0 73.0L595.8 73.5L595.0 72.7L594.0 73.4L593.0 73.7L592.0 74.1L591.0 74.0L590.0 73.2L589.0 74.3L588.0 73.8L587.0 74.1L586.0 72.8L585.8 74.0L585.0 74.6L584.0 73.4L583.0 72.7L582.0 73.1L581.0 73.3L580.0 73.2L579.0 74.8L578.0 75.0L577.0 74.7L576.0 73.1L575.0 73.5L574.0 74.1L573.0 75.8L572.0 74.6L571.0 74.7L570.0 74.2L569.0 76.4L568.0 76.0L567.0 76.5L566.0 76.2L565.0 74.4L564.0 76.2L563.0 75.0L562.0 75.6L561.0 75.5L560.0 73.8L559.0 73.5L558.0 75.6L557.0 74.5L556.0 73.0L555.6 75.0L555.0 74.2L554.0 75.0L553.0 74.1L552.0 75.7L551.0 74.5L550.0 74.8L549.0 75.9L548.0 74.8L547.0 73.6L546.0 76.1L545.0 74.8L544.0 74.8L543.0 74.9L542.0 74.8L541.0 76.3L540.0 75.5L539.0 74.1L538.0 76.6L537.0 76.2L536.0 76.4L535.5 76.0L535.0 74.0L534.0 73.8L533.0 75.6L532.0 76.0L531.0 74.2L530.0 74.8L529.0 75.8L528.0 76.4L527.0 74.4L526.0 75.0L525.0 76.0L524.0 75.1L523.0 75.5L522.0 73.3L521.0 74.2L520.0 73.7L519.0 75.0L518.0 76.3L517.0 75.1L516.0 76.1L515.0 76.0L514.0 75.2L513.0 74.2L512.0 75.1L511.0 73.7L510.0 75.0L509.0 73.6L508.0 75.3L507.0 73.7L506.0 76.5L505.0 73.7L504.0 73.9L503.0 76.0L502.0 73.7L501.0 74.9L500.0 76.0L499.0 74.6L498.0 75.1L497.0 74.3L496.0 74.2L495.0 73.7L494.0 74.1L493.0 76.6L492.0 76.7L491.0 74.5L490.0 75.5L489.0 76.3L488.0 74.0L487.0 73.8L486.0 76.8L485.0 74.7L484.0 77.0L483.0 75.3L482.6 76.5L482.0 76.3L481.0 74.1L480.0 74.3L479.0 74.6L478.0 74.9L477.0 75.8L476.0 74.2L475.0 73.9L474.0 74.8L473.0 74.3L472.0 74.8L471.0 74.5L470.0 75.6L469.0 74.7L468.0 75.6L467.0 75.1L466.5 75.5L466.0 73.7L465.0 75.0L464.0 74.6L463.0 75.1L462.0 74.4L461.0 74.0L460.0 75.8L459.0 75.2L458.0 73.8L457.0 74.8L456.4 76.0L456.0 76.6L455.0 74.2L454.0 75.1L453.0 75.6L452.0 74.2L451.0 73.8L450.0 75.4L449.0 74.7L448.0 75.4L447.0 73.5L446.4 76.0L446.0 74.7L445.0 76.4L444.0 74.0L443.0 75.1L442.0 73.4L441.0 73.3L440.0 73.6L439.0 72.8L438.0 74.6L437.0 73.8L436.3 74.0L436.0 73.5L435.0 73.4L434.0 72.5L433.0 73.1L432.0 73.0L431.0 72.3L430.0 73.0L429.0 72.3L428.7 73.0L428.0 73.3L427.0 72.9L426.0 72.2L425.0 72.7L424.0 72.3L423.0 72.5L422.0 72.7L421.2 72.5L421.0 71.6L420.0 72.3L419.0 71.6L418.0 71.4L417.0 71.5L416.0 71.3L415.0 71.5L414.0 71.5L413.6 71.5L413.0 71.5L412.0 71.1L411.0 71.3L410.0 71.2L409.0 71.4L408.0 71.0L407.0 71.3L406.0 71.2L405.0 71.2L404.0 71.4L403.0 71.1L402.0 71.3L401.0 71.7L400.0 71.3L399.0 72.0L398.0 71.7L397.0 72.0L396.0 72.1L395.0 71.9L394.0 72.1L393.5 72.5L393.0 71.7L392.0 72.5L391.0 72.3L390.0 71.8L389.0 72.2L388.0 72.0L387.0 72.8L386.0 73.0L385.0 73.3L384.0 72.5L383.0 73.3L382.0 72.5L381.0 72.4L380.0 73.3L379.0 72.1L378.0 72.8L377.0 72.2L376.0 73.5L375.0 73.6L374.0 73.4L373.0 74.3L372.0 73.5L371.0 73.2L370.0 74.7L369.0 73.8L368.0 74.5L367.0 75.3L366.0 73.2L365.8 75.0L365.0 74.2L364.0 73.1L363.0 73.9L362.0 73.1L361.0 74.4L360.0 73.7L359.0 74.8L358.0 74.3L357.0 75.3L356.0 75.0L355.8 74.8L355.0 74.9L354.0 73.0L353.0 73.9L352.0 74.7L351.0 73.3L350.0 74.4L349.0 75.0L348.0 74.0L347.0 75.3L346.0 74.8L345.0 75.2L344.0 74.0L343.2 75.0L343.0 74.6L342.0 74.4L341.0 75.5L340.0 74.5L339.0 74.1L338.0 74.3L337.0 75.3L336.0 74.2L335.0 74.9L334.0 75.6L333.0 75.1L332.0 75.4L331.0 74.3L330.6 75.0L330.0 73.7L329.0 75.1L328.0 73.6L327.0 75.4L326.0 75.3L325.0 74.9L324.0 74.8L323.0 74.5L322.0 74.4L321.0 74.8L320.0 75.1L319.0 73.5L318.0 73.9L317.0 73.6L316.0 73.7L315.5 75.0L315.0 73.1L314.0 74.9L313.0 73.2L312.0 73.4L311.0 75.0L310.0 75.4L309.0 73.9L308.0 74.8L307.0 75.1L306.0 73.2L305.0 73.5L304.0 74.0L303.0 73.2L302.0 72.8L301.0 74.1L300.4 74.5L300.0 73.1L299.0 72.9L298.0 73.3L297.0 74.5L296.0 74.5L295.0 74.7L294.0 73.0L293.0 74.1L292.0 73.7L291.0 74.2L290.0 75.8L289.0 75.0L288.0 75.5L287.0 74.3L286.0 76.4L285.0 73.6L284.0 76.4L283.0 74.9L282.0 74.4L281.0 76.4L280.0 74.9L279.0 76.9L278.0 76.8L277.0 74.9L276.0 74.8L275.0 77.0L274.0 76.5L273.0 75.8L272.0 77.4L271.0 74.6L270.0 76.2L269.0 76.3L268.0 76.1L267.0 75.7L266.0 75.0L265.0 75.2L264.0 77.0L263.0 76.6L262.0 76.4L261.0 74.6L260.0 76.0L259.0 76.7L258.0 76.1L257.0 74.8L256.0 74.4L255.0 73.7L254.0 74.3L253.0 76.8L252.0 74.3L251.0 74.5L250.0 73.8L249.0 76.1L248.0 75.0L247.0 76.6L246.0 74.5L245.0 76.0L244.0 76.3L243.0 75.7L242.0 75.7L241.0 75.7L240.0 74.9L239.0 74.4L238.0 75.6L237.0 74.0L236.5 75.5L236.0 74.6L235.0 74.8L234.0 74.5L233.0 73.5L232.0 73.4L231.0 74.0L230.0 73.8L229.0 76.4L228.0 73.5L227.0 75.3L226.0 74.2L225.0 76.7L224.0 75.9L223.0 74.5L222.0 74.7L221.4 76.0L221.0 76.5L220.0 75.1L219.0 76.5L218.0 75.8L217.0 74.1L216.0 75.2L215.0 74.6L214.0 75.5L213.0 73.4L212.0 75.2L211.0 75.0L210.0 74.4L209.0 74.2L208.0 75.0L207.0 74.3L206.0 74.1L205.0 74.0L204.0 74.7L203.0 75.1L202.0 74.8L201.0 75.2L200.0 73.6L199.0 75.2L198.0 76.0L197.0 74.2L196.0 75.5L195.0 74.1L194.0 73.4L193.0 74.1L192.0 74.4L191.0 74.6L190.0 75.1L189.0 74.7L188.0 75.2L187.0 75.4L186.0 75.5L185.0 74.3L184.0 74.7L183.0 75.0L182.0 73.4L181.0 75.0L180.0 75.2L179.0 75.1L178.0 74.9L177.0 73.5L176.0 73.4L175.0 75.4L174.0 75.0L173.0 73.3L172.0 73.2L171.0 73.7L170.0 73.3L169.0 73.0L168.0 73.2L167.0 74.0L166.0 75.0L165.0 73.3L164.0 75.5L163.0 75.2L162.0 73.5L161.0 73.4L160.0 75.6L159.0 74.3L158.0 74.5L157.0 73.5L156.0 76.1L155.0 74.5L154.0 75.4L153.5 75.5L153.0 74.0L152.0 75.5L151.0 76.1L150.0 73.6L149.0 75.7L148.0 75.9L147.0 74.7L146.0 74.9L145.0 76.4L144.0 73.7L143.4 76.0L143.0 75.9L142.0 77.1L141.0 73.8L140.0 75.0L139.0 77.2L138.0 74.6L137.0 74.5L136.0 77.6L135.0 74.5L134.0 76.9L133.0 75.8L132.0 78.0L131.0 77.8L130.8 78.5L130.0 76.2L129.0 75.1L128.0 76.7L127.0 76.4L126.0 78.1L125.0 78.5L124.0 76.0L123.0 78.0L122.0 74.6L121.0 75.0L120.0 76.1L119.0 75.3L118.2 77.3L118.0 75.9L117.0 77.1L116.0 75.3L115.0 74.2L114.0 76.4L113.0 75.0L112.0 74.1L111.0 77.7L110.0 77.1L109.0 77.2L108.0 74.3L107.0 74.6L106.0 77.5L105.0 74.4L104.0 74.2L103.0 76.5L102.0 75.8L101.0 76.5L100.6 76.5L100.0 76.2L99.0 77.0L98.0 75.0L97.0 75.7L96.0 75.8L95.0 76.7L94.0 74.6L93.0 75.3L92.0 76.9L91.0 75.0L90.6 76.5L90.0 77.1L89.0 74.1L88.0 75.0L87.0 76.4L86.0 75.0L85.0 76.2L84.0 75.2L83.0 74.7L82.0 75.7L81.0 74.3L80.0 75.9L79.0 73.8L78.0 74.7L77.0 76.0L76.0 74.0L75.5 75.5L75.0 74.8L74.0 73.4L73.0 75.9L72.0 73.6L71.0 73.3L70.0 74.9L69.0 74.3L68.0 74.2L67.0 75.2L66.0 73.9L65.0 73.2L64.0 74.9L63.0 74.7L62.0 72.9L61.0 74.1L60.0 74.5L59.0 73.5L58.0 73.6L57.0 73.1L56.0 72.7L55.0 73.3L54.0 73.5L53.0 73.3L52.0 72.8L51.0 73.7L50.0 72.8L49.0 73.2L48.0 73.0L47.0 72.0L46.0 72.7L45.0 72.6L44.0 72.2L43.0 72.2L42.0 72.2L41.0 71.4L40.0 72.0L39.0 71.9L38.0 72.0L37.0 71.4L36.0 71.4L35.0 71.3L34.0 71.4L33.0 71.2L32.0 71.2L31.0 71.0L30.0 71.2L29.0 71.1L28.0 70.9L27.0 70.8L26.0 70.6L25.0 70.5L24.0 70.5L23.0 70.5L22.0 70.5L21.0 70.5L20.0 70.5L19.0 70.5L18.0 70.5L17.0 70.5L16.0 70.5L15.0 70.5L14.0 70.5L13.0 70.5L12.0 70.5L11.0 70.5L10.0 70.5L9.0 70.5L8.0 70.5L7.0 70.5L6.0 70.5L5.0 70.5L4.0 70.5L3.0 70.5L2.0 70.5Z" fill="#0080ff" stroke="#000" stroke-width="1" stroke-linejoin="miter"/></svg>
<div class="panel" style="left:22px;top:514px;width:189px;height:37px;"></div>
<span class="t " style="left:27.5px;top:517.69px;font-size:11px;font-weight:bold;color:#000;letter-spacing:-0.090px;">Project Tempo:</span>
<span class="t " style="left:132.4px;top:517.69px;font-size:11px;font-weight:bold;color:#000;letter-spacing:-0.100px;">Project Pitch:</span>
<div class="inp" style="left:48px;top:531px;width:40px;height:16px;"></div>
<span class="t " style="left:52.4px;top:533.62px;font-size:12.5px;color:#000;letter-spacing:-0.822px;">127.75</span>
<div class="inp" style="left:145px;top:531px;width:40px;height:16px;"></div>
<span class="t " style="left:160.8px;top:533.62px;font-size:12.5px;color:#000;letter-spacing:-0.711px;">0.00</span>
<div style="left:90px;top:531px;width:14px;height:8px;border:1px solid #b5b8be;border-radius:1px;background:linear-gradient(#f6f6f6,#dcdfe4);"></div>
<svg style="left:90px;top:531px" width="14" height="8" viewBox="0 0 14 8"><polygon points="4.2,5.4 9.8,5.4 7,2.4" fill="#4d66b8"/></svg>
<div style="left:90px;top:539px;width:14px;height:8px;border:1px solid #b5b8be;border-radius:1px;background:linear-gradient(#f6f6f6,#dcdfe4);"></div>
<svg style="left:90px;top:539px" width="14" height="8" viewBox="0 0 14 8"><polygon points="4.2,2.4 9.8,2.4 7,5.4" fill="#4d66b8"/></svg>
<div style="left:187px;top:531px;width:14px;height:8px;border:1px solid #b5b8be;border-radius:1px;background:linear-gradient(#f6f6f6,#dcdfe4);"></div>
<svg style="left:187px;top:531px" width="14" height="8" viewBox="0 0 14 8"><polygon points="4.2,5.4 9.8,5.4 7,2.4" fill="#4d66b8"/></svg>
<div style="left:187px;top:539px;width:14px;height:8px;border:1px solid #b5b8be;border-radius:1px;background:linear-gradient(#f6f6f6,#dcdfe4);"></div>
<svg style="left:187px;top:539px" width="14" height="8" viewBox="0 0 14 8"><polygon points="4.2,2.4 9.8,2.4 7,5.4" fill="#4d66b8"/></svg>
<div style="left:216px;top:516px;width:696px;height:17px;background:#ededed;border:1px solid #fdfdfd;border-right-color:#bdb9b0;border-bottom-color:#bdb9b0;"></div>
<div style="left:254px;top:514px;width:1px;height:2px;background:#000;"></div>
<div style="left:292px;top:514px;width:1px;height:2px;background:#000;"></div>
<div style="left:331px;top:514px;width:1px;height:2px;background:#000;"></div>
<div style="left:369px;top:514px;width:1px;height:4px;background:#000;"></div>
<div style="left:407px;top:514px;width:1px;height:2px;background:#000;"></div>
<div style="left:445px;top:514px;width:1px;height:2px;background:#000;"></div>
<div style="left:483px;top:514px;width:1px;height:2px;background:#000;"></div>
<div style="left:522px;top:514px;width:1px;height:4px;background:#000;"></div>
<div style="left:560px;top:514px;width:1px;height:2px;background:#000;"></div>
<div style="left:598px;top:514px;width:1px;height:2px;background:#000;"></div>
<div style="left:636px;top:514px;width:1px;height:2px;background:#000;"></div>
<div style="left:674px;top:514px;width:1px;height:4px;background:#000;"></div>
<div style="left:713px;top:514px;width:1px;height:2px;background:#000;"></div>
<div style="left:751px;top:514px;width:1px;height:2px;background:#000;"></div>
<div style="left:789px;top:514px;width:1px;height:2px;background:#000;"></div>
<div style="left:827px;top:514px;width:1px;height:4px;background:#000;"></div>
<div style="left:865px;top:514px;width:1px;height:2px;background:#000;"></div>
<div style="left:904px;top:514px;width:1px;height:2px;background:#000;"></div>
<span class="t " style="left:217.6px;top:520.57px;font-size:10.2px;color:#000;letter-spacing:0.166px;">0:0:0</span>
<span class="t " style="left:368.0px;top:520.57px;font-size:10.2px;color:#000;letter-spacing:0.166px;">1:0:0</span>
<span class="t " style="left:520.8px;top:520.57px;font-size:10.2px;color:#000;letter-spacing:0.166px;">2:0:0</span>
<span class="t " style="left:673.6px;top:520.57px;font-size:10.2px;color:#000;letter-spacing:0.166px;">3:0:0</span>
<span class="t " style="left:826.4px;top:520.57px;font-size:10.2px;color:#000;letter-spacing:0.166px;">4:0:0</span>
<div style="left:214px;top:535px;width:666px;height:17px;background:#eeeeee;"></div>
<div style="left:232px;top:535px;width:386px;height:17px;border:1px solid #a3a3a3;border-radius:3px;background:linear-gradient(#f3f3f3 0%,#e8e8ea 45%,#d4d5d8 50%,#dcdde0 100%);box-shadow:inset 0 0 0 1px rgba(255,255,255,.7);"></div>
<svg style="left:216px;top:535px" width="664" height="17" viewBox="0 0 664 17"><polygon points="3.8,8.5 7.8,4.8 7.8,12.2" fill="#404040"/><polygon points="658,8.5 654,5 654,12" fill="#404040"/><path d="M205.5 5.5V11.5M208.5 5.5V11.5M211.5 5.5V11.5" stroke="#5a5a5a" stroke-width="1"/></svg>
<div style="left:918px;top:118px;width:17px;height:380px;background:#eeeeee;"></div>
<div style="left:918px;top:136px;width:16px;height:56px;border:1px solid #a8a8a8;border-radius:3px;background:linear-gradient(90deg,#f3f3f3 0%,#e8e8ea 45%,#d4d5d8 50%,#dcdde0 100%);box-shadow:inset 0 0 0 1px rgba(255,255,255,.7);"></div>
<svg style="left:918px;top:119px" width="17" height="379" viewBox="0 0 17 379"><polygon points="8,5.5 4.5,9.5 11.5,9.5" fill="#404040"/><polygon points="8,373 4.5,369 11.5,369" fill="#404040"/><path d="M5 42.5H11M5 45.5H11M5 48.5H11" stroke="#5a5a5a" stroke-width="1"/></svg>
<svg style="left:918px;top:500px" width="18" height="34" viewBox="0 0 18 34" stroke="#555" stroke-width="1.6" fill="none"><path d="M3.2 9H13M8.1 4.1V13.9"/><path d="M3.2 27H13"/></svg>
<svg style="left:884px;top:536px" width="52" height="17" viewBox="0 0 52 17" stroke="#555" stroke-width="1.6" fill="none"><path d="M3 8.8H13M8 3.9V13.7"/><path d="M20 8.8H30"/><path d="M38.5 8.8H47.5" stroke-width="1.3"/><path d="M41 5.6L37.8 8.8L41 12M45 5.6L48.2 8.8L45 12" stroke-width="1.3"/></svg>
<div style="left:9px;top:560px;width:937px;height:35px;background:#fff;"></div>
<div style="left:8px;top:595px;width:938px;height:1px;background:#a0a0a0;"></div>
<div style="left:8px;top:597px;width:938px;height:1px;background:#a8a4a0;"></div>
<span class="t " style="left:17.0px;top:572.92px;font-size:12.5px;font-weight:bold;color:#333;letter-spacing:-0.345px;">Project Length:</span>
<div class="inp" style="left:110px;top:569px;width:76px;height:19px;"></div>
<span class="t " style="left:132.5px;top:571.55px;font-size:14px;color:#101010;letter-spacing:-0.514px;-webkit-text-stroke:0.3px #101010;">0:0:0.00</span>
<span class="t " style="left:209.8px;top:572.92px;font-size:12.5px;font-weight:bold;color:#333;letter-spacing:-0.330px;">Position:</span>
<div class="inp" style="left:265px;top:569px;width:76px;height:19px;"></div>
<span class="t " style="left:280.2px;top:571.55px;font-size:14px;color:#101010;letter-spacing:-0.543px;-webkit-text-stroke:0.3px #101010;">41:2:3.42</span>
<svg style="left:358px;top:566px" width="160" height="24" viewBox="0 0 160 24" fill="none" stroke="#444" stroke-width="1.4" stroke-linejoin="miter"><path d="M3.7 5L15.8 12L3.7 19Z"/><path d="M59.7 4.5V19.5"/><path d="M69.4 5L60.2 12L69.4 19Z"/><path d="M79.4 5L70.2 12L79.4 19Z"/><path d="M118 5L127.2 12L118 19Z"/><path d="M128 5L137.2 12L128 19Z"/><path d="M137.8 4.5V19.5"/></svg>
<span class="t " style="left:376.8px;top:574.27px;font-size:9.6px;font-weight:bold;color:#333;letter-spacing:-0.237px;">Play</span>
<span class="t " style="left:439.2px;top:574.27px;font-size:9.6px;font-weight:bold;color:#333;letter-spacing:-0.406px;">RW</span>
<span class="t " style="left:499.0px;top:574.27px;font-size:9.6px;font-weight:bold;color:#333;letter-spacing:-0.117px;">FF</span>
<div style="left:532px;top:572px;width:14px;height:13.5px;border:1.8px solid #444;"></div>
<span class="t " style="left:547.4px;top:574.27px;font-size:9.6px;font-weight:bold;color:#333;letter-spacing:-0.132px;">Stop</span>
<div style="left:589px;top:570px;width:16.5px;height:16.5px;border:1.9px solid #444;border-radius:50%;"></div>
<span class="t " style="left:607.4px;top:574.27px;font-size:9.6px;font-weight:bold;color:#333;letter-spacing:-0.036px;">Rec</span>
<div style="left:650px;top:576px;width:288px;height:2px;background:#b4b4b4;border-bottom:1px solid #ececec;"></div>
<div style="left:643.5px;top:567px;width:9.5px;height:21px;border:1px solid #8e8e8e;border-radius:2px;background:linear-gradient(#f5f5f5 0%,#ececec 45%,#d8d8d8 50%,#e2e2e2 100%);box-shadow:inset 0 0 0 1px rgba(255,255,255,.8);"></div>
<span class="t " style="left:408.6px;top:293.43px;font-size:22px;font-weight:bold;color:rgba(157,157,157,1);letter-spacing:0.543px;-webkit-text-stroke:2px rgba(203,203,203,.95);paint-order:stroke fill;">download</span>
<div style="left:520.5px;top:291px;width:23.5px;height:23.5px;border-radius:50%;background:rgba(208,208,208,.78);"></div>
<span class="t " style="left:524.5px;top:294.81px;font-size:18px;color:rgba(232,232,232,.95);letter-spacing:-1.258px;">3k</span>
</div></body></html>
